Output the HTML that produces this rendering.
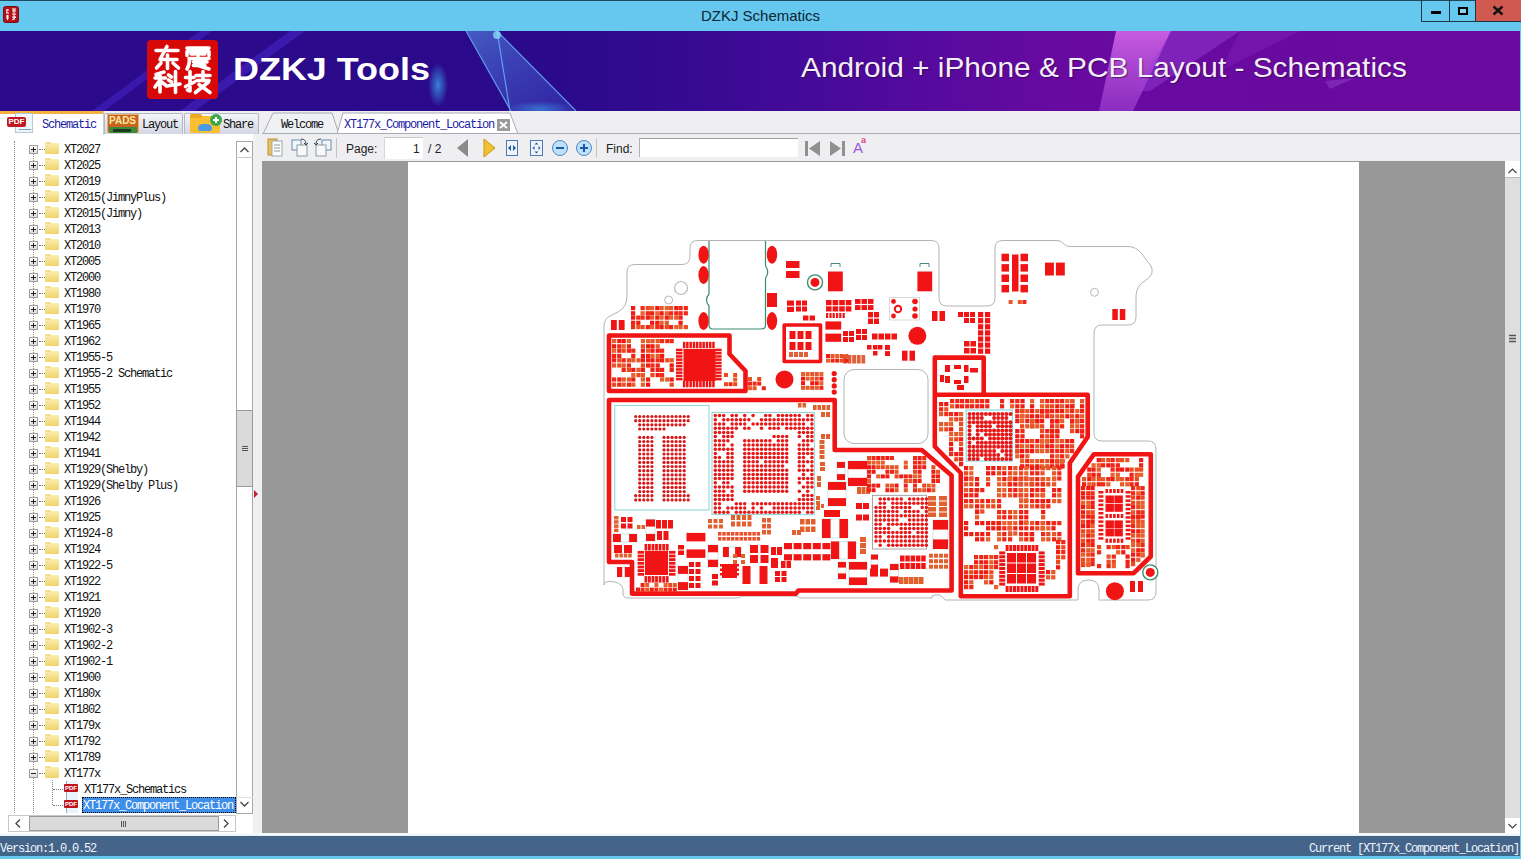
<!DOCTYPE html>
<html><head><meta charset="utf-8">
<style>
*{margin:0;padding:0;box-sizing:border-box}
html,body{width:1521px;height:859px;overflow:hidden;background:#66C8EE;font-family:"Liberation Sans",sans-serif}
.a{position:absolute}
i{display:block;position:absolute;font-style:normal}
#topline{left:0;top:0;width:1521px;height:1px;background:#1d4a5e}
#title{left:0;top:7px;width:1521px;text-align:center;font-size:15px;color:#0d2535;line-height:17px}
.wb{top:0;height:21px;border:1px solid #1a3646;border-top:none}
#banner{left:0;top:31px;width:1520px;height:80px;overflow:hidden;background:linear-gradient(90deg,#2c0a8c 0%,#2a0a8a 37%,#320a90 43%,#440a98 53%,#580a9e 62%,#680aa0 70%,#6a0a9e 100%)}
#tabbar{left:0;top:111px;width:1520px;height:23px;background:#efeff1}
#left{left:0;top:134px;width:262px;height:702px;background:#fff}
#tool{left:262px;top:134px;width:1258px;height:28px;background:#efeff1;border-bottom:1px solid #8c8c8c}
#gray{left:262px;top:161px;width:1243px;height:673px;background:#989898}
#page{left:408px;top:162px;width:951px;height:672px;background:#fff}
#vs{left:1505px;top:161px;width:15px;height:673px;background:#dedede}
#status{left:0;top:836px;width:1520px;height:20px;background:linear-gradient(#41607a 0,#44648a 8%,#44648a 85%,#3a6888 100%);color:#eef4fa}
.mono,.tx,.tx2,#status span,.tab span{font-family:"Liberation Mono",monospace;font-size:12px;letter-spacing:-1.2px;line-height:14px;white-space:nowrap}
.row{position:absolute;left:0;width:236px;height:16px}
.bx{left:29px;top:4px;width:9px;height:9px;border:1px solid #a0a0a0;background:linear-gradient(#fff,#dcdcdc)}
.bx:before{content:"";position:absolute;left:1px;top:3px;width:5px;height:1px;background:#222}
.bx:after{content:"";position:absolute;left:3px;top:1px;width:1px;height:5px;background:#222}
.bx.mn:after{display:none}
.hd{left:39px;top:8px;width:6px;height:1px;border-top:1px dotted #777}
.fd{left:45px;top:2px;width:14px;height:11px;background:linear-gradient(#fbefb0,#f0d268);border-radius:1px}
.fd:before{content:"";position:absolute;left:0;top:-1px;width:6px;height:2px;background:#f3df90;border-radius:1px 1px 0 0}
.tx{position:absolute;left:64px;top:2px;color:#111}
.tx2{position:absolute;left:84px;top:2px;color:#111}
.tx2.sel{left:82px;top:0;height:16px;padding:2px 0 0 1px;width:154px;background:#3d8ee8;color:#fff;outline:1px dotted #000;outline-offset:-1px;overflow:hidden}
.hd2{left:53px;top:8px;width:10px;height:1px;border-top:1px dotted #777}
.pdfi{left:66px;top:0;width:12px;height:16px;background:#eaf4fb;border-left:1px solid #9ab}
.pdfi:before{content:"PDF";position:absolute;left:-3px;top:3px;width:14px;height:8px;background:#c0141c;color:#fff;font:bold 6px/8px "Liberation Sans",sans-serif;text-align:center;border-radius:1px}
.tab{position:absolute;top:113px;height:21px}
.tbi{position:absolute}
.sep{position:absolute;top:138px;width:1px;height:20px;background:#c8c8c8;border-right:1px solid #fff}
.lbl{position:absolute;font-size:12px;color:#222;line-height:14px}
</style></head><body>
<div class="a" id="topline"></div>
<svg class="a" style="left:3px;top:6px" width="16" height="17" viewBox="0 0 16 17"><rect x="0.5" y="0.5" width="15" height="16" rx="2" fill="#b3121a" stroke="#7a0c10"/><g stroke="#fff" stroke-width="1" fill="none"><path d="M3 4h3M4 3v4M3 7h3M3 10h3M4.5 9v5M3 12h3M9 3h4M9 5h4M11 3v4M9 8h4M11 8v6M9 11h4M9 14l4-3"/></g></svg>
<div class="a" id="title">DZKJ Schematics</div>
<div class="a wb" style="left:1421px;width:29px;height:22px;border-right:none"><i style="left:9px;top:11px;width:10px;height:3px;background:#000"></i></div>
<div class="a wb" style="left:1449px;width:27px;height:22px;border-left:1px solid #1a3646"><i style="left:8px;top:7px;width:10px;height:8px;border:2px solid #000;background:#8fd3ec"></i></div>
<div class="a" style="left:1476px;top:0;width:45px;height:22px;background:#d05a50;border-bottom:1px solid #1a3646"></div>
<svg class="a" style="left:1492px;top:5px" width="12" height="11" viewBox="0 0 12 11"><path d="M1.5 1.5L10.5 9.5M10.5 1.5L1.5 9.5" stroke="#111" stroke-width="2.4"/></svg>
<div class="a" id="banner">
<svg width="1520" height="80" style="position:absolute;left:0;top:0">
<defs>
<radialGradient id="blob"><stop offset="0" stop-color="#3a8ee0" stop-opacity=".9"/><stop offset="1" stop-color="#3a8ee0" stop-opacity="0"/></radialGradient>
<linearGradient id="tri" x1="0" y1="0" x2="1" y2="1"><stop offset="0" stop-color="#5a9cf0" stop-opacity=".55"/><stop offset="1" stop-color="#3c50d0" stop-opacity=".35"/></linearGradient>
<linearGradient id="pk" x1="0" y1="0" x2="0" y2="1"><stop offset="0" stop-color="#e070f0" stop-opacity=".8"/><stop offset="1" stop-color="#b050e0" stop-opacity=".5"/></linearGradient>
</defs>
<polygon points="92,80 200,0 212,0 104,80" fill="#4a2ad0" opacity=".45"/>
<polygon points="180,80 290,0 305,0 195,80" fill="#4a2ad0" opacity=".5"/>
<ellipse cx="438" cy="54" rx="10" ry="22" fill="url(#blob)"/>
<polygon points="466,0 497,0 576,80 511,80" fill="url(#tri)"/>
<path d="M466,0 L511,80 M497,0 L576,80 M497,0 L510,80" stroke="#6ab8f8" stroke-width="1.2" opacity=".8" fill="none"/>
<circle cx="497" cy="4" r="4" fill="#8ee8ff" opacity=".7"/>
<ellipse cx="540" cy="78" rx="34" ry="8" fill="url(#blob)" opacity=".8"/>
<polygon points="1116,0 1171,0 1133,80 1099,80" fill="url(#pk)"/>
<polygon points="1171,0 1240,0 1150,60 1135,60" fill="#9a40d8" opacity=".45"/>
<polygon points="1240,0 1300,0 1220,40" fill="#8a30c8" opacity=".3"/>
<polygon points="1325,50 1355,47 1330,58" fill="#9a50d8" opacity=".4"/>
</svg>
<div class="a" style="left:147px;top:9px;width:71px;height:59px;background:#d80808;border-radius:4px"></div>
<svg class="a" style="left:147px;top:9px" width="71" height="59" viewBox="0 0 71 59"><g stroke="#fff" stroke-width="3.6" fill="none" stroke-linecap="round" stroke-linejoin="round">
<path d="M9 10.5H31M20 6.5L13 19.5H30M20.5 15V28.5M14 23L9.5 28M26 23L31.5 28"/>
<path d="M40 8H62M40 15.5V11.5H62V15.5M51 8V16M44 14H48M54 14H58M42 18.5H62M42.5 18.5Q42.5 25 40 29M46.5 22H60M46.5 25.5H58M51 25.5L62 29"/>
<path d="M17 32L9 34.5M8 38H18.5M13 33.5V52M13 40L8 47M14 41.5L18.5 45M21.5 35L24.5 37M21.5 40L24.5 42M28.5 31.5V52.5M19.5 46L33 44"/>
<path d="M38.5 37.5H47M43 31.5V51L40.5 50M38.5 46.5L47.5 42M49 35.5H63M56 31.5V40M50 40.5H62M52 44.5L63 52.5M61.5 42L48.5 52.5"/>
</g></svg>
<div class="a" style="left:233px;top:20px;font:bold 32px/36px 'Liberation Sans',sans-serif;color:#fff;transform:scaleX(1.123);transform-origin:0 0;white-space:nowrap">DZKJ Tools</div>
<div class="a" style="left:801px;top:21px;font:28px/32px 'Liberation Sans',sans-serif;color:#f4eefa;transform:scaleX(1.065);transform-origin:0 0;white-space:nowrap;text-shadow:1px 1px 1px rgba(40,0,60,.6)">Android + iPhone &amp; PCB Layout - Schematics</div>
</div>
<div class="a" id="tabbar"></div>
<!-- left tabs -->
<div class="tab" style="left:0;top:111px;width:104px;height:24px;background:#fff;border-top:3px solid #f5b040;border-right:1px solid #c8ccd8;z-index:2"></div>
<div class="a" style="left:11px;top:113px;width:27px;height:20px;z-index:3"><i style="left:4px;top:0;width:18px;height:20px;background:#eef6fb;border:1px solid #b8c8d4"></i><i style="left:-4px;top:4px;width:19px;height:10px;background:#c41820;border-radius:2px;color:#fff;font:bold 8px/10px 'Liberation Sans',sans-serif;text-align:center">PDF</i><i style="left:8px;top:16px;width:12px;height:1px;background:#7aa0c0"></i></div>
<span class="a mono" style="left:42px;top:118px;color:#1c1ca8;z-index:3">Schematic</span>
<div class="tab" style="left:104px;width:79px;background:linear-gradient(#f4f5f9,#d3d6e2);border:1px solid #b4b8c8;border-bottom:none;border-radius:2px 2px 0 0"></div>
<div class="a" style="left:107px;top:114px;width:32px;height:19px;background:#c8641e;border:1px solid #e9b070"><i style="left:1px;top:0;color:#fde8a0;font:bold 10px/11px 'Liberation Sans',sans-serif">PADS</i><i style="left:1px;top:12px;width:28px;height:6px;background:#3c8c3c"></i><i style="left:5px;top:14px;width:18px;height:3px;background:#1e3a1e"></i></div>
<span class="a mono" style="left:142px;top:118px;color:#111">Layout</span>
<div class="tab" style="left:184px;width:75px;background:linear-gradient(#f4f5f9,#d3d6e2);border:1px solid #b4b8c8;border-bottom:none;border-radius:2px 2px 0 0"></div>
<div class="a" style="left:190px;top:116px;width:30px;height:17px;background:#f8c030;border-radius:2px 2px 0 0"><i style="left:0;top:-2px;width:12px;height:4px;background:#f0a820;border-radius:2px 2px 0 0"></i><i style="left:8px;top:8px;width:14px;height:7px;background:#4a9ae8;border-radius:6px 6px 3px 3px"></i></div>
<div class="a" style="left:210px;top:114px;width:12px;height:12px;background:#3aa84a;border-radius:50%"><i style="left:3px;top:5px;width:6px;height:2px;background:#fff"></i><i style="left:5px;top:3px;width:2px;height:6px;background:#fff"></i></div>
<span class="a mono" style="left:223px;top:118px;color:#111">Share</span>
<!-- doc tabs -->
<svg class="a" style="left:262px;top:111px" width="260" height="24" viewBox="0 0 260 24">
<path d="M1,23 L11,2 L70,2 L77,23" fill="#f0f1f5" stroke="#a8acb8"/>
<path d="M75,23 L81,2 L248,2 L256,23" fill="#fff" stroke="#a8acb8"/>
<rect x="235" y="8" width="13" height="12" fill="#9a9a9a"/>
<path d="M238,11 L245,17 M245,11 L238,17" stroke="#fff" stroke-width="1.8"/>
</svg>
<span class="a mono" style="left:281px;top:118px;color:#111">Welcome</span>
<span class="a mono" style="left:344px;top:118px;color:#1c1ca8">XT177x_Component_Location</span>
<div class="a" style="left:262px;top:133px;width:1258px;height:1px;background:#a8acb8"></div>
<!-- toolbar -->
<div class="a" id="tool"></div>
<svg class="a" style="left:262px;top:134px" width="620" height="27" viewBox="262 134 620 27">
<!-- icon1: folder-doc -->
<rect x="268" y="139" width="9" height="16" fill="#e8c060" stroke="#c09030"/>
<rect x="272" y="141" width="10" height="15" fill="#fbfbfb" stroke="#9aa"/>
<path d="M274 145h6M274 148h6M274 151h6" stroke="#999"/>
<!-- icon2 -->
<rect x="292" y="140" width="9" height="10" fill="#eef6fb" stroke="#6a8aa8"/>
<rect x="297" y="145" width="10" height="11" fill="#f8f8f8" stroke="#8a9aa8"/>
<path d="M301 139 q5 0 5 5" stroke="#345" fill="none"/><path d="M304 143l2 2 2-2" stroke="#345" fill="none"/>
<!-- icon3 -->
<rect x="322" y="140" width="9" height="10" fill="#eef6fb" stroke="#6a8aa8"/>
<rect x="316" y="145" width="10" height="11" fill="#f8f8f8" stroke="#8a9aa8"/>
<path d="M321 139 q-5 0 -5 5" stroke="#345" fill="none"/><path d="M314 143l2 2 2-2" stroke="#345" fill="none"/>
<path d="M336.5 138v20" stroke="#c4c4c4"/>
<path d="M596.5 138v20" stroke="#c4c4c4"/>
<!-- prev/next -->
<path d="M468 139 L457 148 L468 157Z" fill="#8a8a8a"/>
<path d="M484 139 L495 148 L484 157Z" fill="#f2c030" stroke="#c89a10"/>
<!-- fit width -->
<rect x="506.5" y="140.5" width="11" height="15" fill="#eef4fa" stroke="#4a7ab8"/>
<path d="M508 148l3-3v6z M516 148l-3-3v6z" fill="#2a5aa0"/>
<!-- fit page -->
<rect x="530.5" y="140.5" width="12" height="15" fill="#eef4fa" stroke="#4a7ab8"/>
<path d="M536.5 142.5l2 2h-4z M536.5 153.5l2-2h-4z M532.5 148l2-2v4z M540.5 148l-2-2v4z" fill="#2a5aa0"/>
<!-- zoom out -->
<circle cx="560" cy="148" r="7.5" fill="#bfe0f8" stroke="#4a88c8"/>
<path d="M556 148h8" stroke="#1a5aa8" stroke-width="2"/>
<circle cx="584" cy="148" r="7.5" fill="#bfe0f8" stroke="#4a88c8"/>
<path d="M580 148h8M584 144v8" stroke="#1a5aa8" stroke-width="2"/>
<!-- find nav -->
<path d="M805 141h3v15h-3z M820 141 L809 148.5 L820 156Z" fill="#909090"/>
<path d="M842 141h3v15h-3z M830 141 L841 148.5 L830 156Z" fill="#909090"/>
</svg>
<span class="lbl" style="left:346px;top:142px">Page:</span>
<div class="a" style="left:384px;top:137px;width:39px;height:22px;background:#fff;border-top:1px solid #c8c8c8;border-left:1px solid #d8d8d8"></div>
<span class="lbl" style="left:413px;top:142px">1</span>
<span class="lbl" style="left:428px;top:142px">/ 2</span>
<span class="lbl" style="left:606px;top:142px">Find:</span>
<div class="a" style="left:639px;top:138px;width:159px;height:19px;background:#fff;border-top:1px solid #a0a0a0;border-left:1px solid #b0b0b0"></div>
<span class="a" style="left:853px;top:139px;font:15px/17px 'Liberation Sans',sans-serif;color:#9a5ae0">A</span>
<span class="a" style="left:861px;top:135px;font:bold 9px/10px 'Liberation Sans',sans-serif;color:#e0408a">a</span>
<div class="a" id="left"></div>
<div class="a" style="left:14px;top:141px;width:1px;height:672px;border-left:1px dotted #8a8a8a"></div>
<div class="a" style="left:33px;top:150px;width:1px;height:663px;border-left:1px dotted #8a8a8a"></div>
<div class="a" style="left:52px;top:780px;width:1px;height:25px;border-left:1px dotted #8a8a8a"></div>
<div class="row" style="top:141px"><i class="bx"></i><i class="hd"></i><i class="fd"></i><span class="tx">XT2027</span></div>
<div class="row" style="top:157px"><i class="bx"></i><i class="hd"></i><i class="fd"></i><span class="tx">XT2025</span></div>
<div class="row" style="top:173px"><i class="bx"></i><i class="hd"></i><i class="fd"></i><span class="tx">XT2019</span></div>
<div class="row" style="top:189px"><i class="bx"></i><i class="hd"></i><i class="fd"></i><span class="tx">XT2015(JimnyPlus)</span></div>
<div class="row" style="top:205px"><i class="bx"></i><i class="hd"></i><i class="fd"></i><span class="tx">XT2015(Jimny)</span></div>
<div class="row" style="top:221px"><i class="bx"></i><i class="hd"></i><i class="fd"></i><span class="tx">XT2013</span></div>
<div class="row" style="top:237px"><i class="bx"></i><i class="hd"></i><i class="fd"></i><span class="tx">XT2010</span></div>
<div class="row" style="top:253px"><i class="bx"></i><i class="hd"></i><i class="fd"></i><span class="tx">XT2005</span></div>
<div class="row" style="top:269px"><i class="bx"></i><i class="hd"></i><i class="fd"></i><span class="tx">XT2000</span></div>
<div class="row" style="top:285px"><i class="bx"></i><i class="hd"></i><i class="fd"></i><span class="tx">XT1980</span></div>
<div class="row" style="top:301px"><i class="bx"></i><i class="hd"></i><i class="fd"></i><span class="tx">XT1970</span></div>
<div class="row" style="top:317px"><i class="bx"></i><i class="hd"></i><i class="fd"></i><span class="tx">XT1965</span></div>
<div class="row" style="top:333px"><i class="bx"></i><i class="hd"></i><i class="fd"></i><span class="tx">XT1962</span></div>
<div class="row" style="top:349px"><i class="bx"></i><i class="hd"></i><i class="fd"></i><span class="tx">XT1955-5</span></div>
<div class="row" style="top:365px"><i class="bx"></i><i class="hd"></i><i class="fd"></i><span class="tx">XT1955-2 Schematic</span></div>
<div class="row" style="top:381px"><i class="bx"></i><i class="hd"></i><i class="fd"></i><span class="tx">XT1955</span></div>
<div class="row" style="top:397px"><i class="bx"></i><i class="hd"></i><i class="fd"></i><span class="tx">XT1952</span></div>
<div class="row" style="top:413px"><i class="bx"></i><i class="hd"></i><i class="fd"></i><span class="tx">XT1944</span></div>
<div class="row" style="top:429px"><i class="bx"></i><i class="hd"></i><i class="fd"></i><span class="tx">XT1942</span></div>
<div class="row" style="top:445px"><i class="bx"></i><i class="hd"></i><i class="fd"></i><span class="tx">XT1941</span></div>
<div class="row" style="top:461px"><i class="bx"></i><i class="hd"></i><i class="fd"></i><span class="tx">XT1929(Shelby)</span></div>
<div class="row" style="top:477px"><i class="bx"></i><i class="hd"></i><i class="fd"></i><span class="tx">XT1929(Shelby Plus)</span></div>
<div class="row" style="top:493px"><i class="bx"></i><i class="hd"></i><i class="fd"></i><span class="tx">XT1926</span></div>
<div class="row" style="top:509px"><i class="bx"></i><i class="hd"></i><i class="fd"></i><span class="tx">XT1925</span></div>
<div class="row" style="top:525px"><i class="bx"></i><i class="hd"></i><i class="fd"></i><span class="tx">XT1924-8</span></div>
<div class="row" style="top:541px"><i class="bx"></i><i class="hd"></i><i class="fd"></i><span class="tx">XT1924</span></div>
<div class="row" style="top:557px"><i class="bx"></i><i class="hd"></i><i class="fd"></i><span class="tx">XT1922-5</span></div>
<div class="row" style="top:573px"><i class="bx"></i><i class="hd"></i><i class="fd"></i><span class="tx">XT1922</span></div>
<div class="row" style="top:589px"><i class="bx"></i><i class="hd"></i><i class="fd"></i><span class="tx">XT1921</span></div>
<div class="row" style="top:605px"><i class="bx"></i><i class="hd"></i><i class="fd"></i><span class="tx">XT1920</span></div>
<div class="row" style="top:621px"><i class="bx"></i><i class="hd"></i><i class="fd"></i><span class="tx">XT1902-3</span></div>
<div class="row" style="top:637px"><i class="bx"></i><i class="hd"></i><i class="fd"></i><span class="tx">XT1902-2</span></div>
<div class="row" style="top:653px"><i class="bx"></i><i class="hd"></i><i class="fd"></i><span class="tx">XT1902-1</span></div>
<div class="row" style="top:669px"><i class="bx"></i><i class="hd"></i><i class="fd"></i><span class="tx">XT1900</span></div>
<div class="row" style="top:685px"><i class="bx"></i><i class="hd"></i><i class="fd"></i><span class="tx">XT180x</span></div>
<div class="row" style="top:701px"><i class="bx"></i><i class="hd"></i><i class="fd"></i><span class="tx">XT1802</span></div>
<div class="row" style="top:717px"><i class="bx"></i><i class="hd"></i><i class="fd"></i><span class="tx">XT179x</span></div>
<div class="row" style="top:733px"><i class="bx"></i><i class="hd"></i><i class="fd"></i><span class="tx">XT1792</span></div>
<div class="row" style="top:749px"><i class="bx"></i><i class="hd"></i><i class="fd"></i><span class="tx">XT1789</span></div>
<div class="row" style="top:765px"><i class="bx mn"></i><i class="hd"></i><i class="fd"></i><span class="tx">XT177x</span></div>
<div class="row" style="top:781px"><i class="pdfi"></i><i class="hd2"></i><span class="tx2">XT177x_Schematics</span></div>
<div class="row" style="top:797px"><i class="pdfi"></i><i class="hd2"></i><span class="tx2 sel">XT177x_Component_Location</span></div>
<div class="a" style="left:236px;top:141px;width:17px;height:673px;background:#fff;border:1px solid #a8a8a8"></div>
<div class="a" style="left:236px;top:157px;width:17px;height:1px;background:#c8c8c8"></div>
<div class="a" style="left:236px;top:797px;width:17px;height:1px;background:#e0e0e0"></div>
<svg class="a" style="left:236px;top:141px" width="17" height="673"><path d="M4.5 11l4-4 4 4" stroke="#444" stroke-width="1.3" fill="none"/><path d="M4.5 661l4 4 4-4" stroke="#444" stroke-width="1.3" fill="none"/></svg>
<div class="a" style="left:236px;top:410px;width:17px;height:77px;background:#dadada;border:1px solid #9a9a9a"><i style="left:5px;top:35px;width:6px;height:1px;background:#555;box-shadow:0 2px 0 #555,0 4px 0 #555"></i></div>
<div class="a" style="left:8px;top:815px;width:228px;height:17px;background:#fff;border:1px solid #c8c8c8"></div>
<div class="a" style="left:29px;top:816px;width:190px;height:15px;background:#dadada;border:1px solid #9a9a9a"><i style="left:91px;top:4px;width:1px;height:6px;background:#555;box-shadow:2px 0 0 #555,4px 0 0 #555"></i></div>
<svg class="a" style="left:8px;top:815px" width="228" height="17"><path d="M12 4.5l-4 4 4 4" stroke="#444" stroke-width="1.3" fill="none"/><path d="M216 4.5l4 4-4 4" stroke="#444" stroke-width="1.3" fill="none"/></svg>
<div class="a" style="left:253px;top:134px;width:9px;height:702px;background:#eef0f2"></div>
<svg class="a" style="left:253px;top:488px" width="6" height="12"><path d="M1 2l4 4-4 4z" fill="#c0202a"/></svg>
<div class="a" id="gray"></div>
<div class="a" id="page"></div>
<div class="a" id="vs"></div>
<div class="a" style="left:1505px;top:161px;width:15px;height:17px;background:#fff;border-bottom:1px solid #bbb"></div>
<div class="a" style="left:1505px;top:817px;width:15px;height:17px;background:#fff;border-top:1px solid #ddd"></div>
<svg class="a" style="left:1505px;top:161px" width="15" height="673"><path d="M3.5 12l4-4 4 4" stroke="#444" stroke-width="1.2" fill="none"/><path d="M3.5 663l4 4 4-4" stroke="#444" stroke-width="1.2" fill="none"/><path d="M4 174.5h7M4 177.5h7M4 180.5h7" stroke="#555" stroke-width="1.4"/></svg>
<svg class="a" style="left:0;top:0" width="1521" height="859" viewBox="0 0 1521 859"><path d="M604,585 L604,326 Q604,318 612,315 L618,312 Q627,307 627,296 L627,272 Q627,264.5 635,264.5 L682,264.5 Q690,264.5 690,256 L690,248 Q690,240.5 698,240.5 L931,240.5 Q939,240.5 939,248 L939,298 Q939,306 947,306 L987,306 Q995,306 995,298 L995,248 Q995,240.5 1003,240.5 L1057,240.5 Q1061,240.5 1064,244 Q1066,246.5 1070,246.5 L1128,246.5 Q1136,246.5 1142,254 L1151,266 Q1155,274 1146,280 Q1136,286 1136,296 L1136,317 Q1136,325 1128,325 L1102,325 Q1094,325 1094,333 L1094,433 Q1094,441 1102,441 L1148,441 Q1156,441 1156,449 L1156,592 Q1156,600 1148,600 L1099,600 L1099,590 Q1099,580 1088.5,580 Q1078,580 1078,590 L1078,600 L945,600 Q940,592 932,596 L932,598 L800,598 Q798,596 794,596 L742,596 Q740,598 736,598 L628,598 Q623,598 623,593 L623,590 Q623,584 615,582 Q604,580 604,585 Z" fill="none" stroke="#b4b4b4" stroke-width="1"/>
<rect x="844" y="369.5" width="84" height="74" rx="10" fill="none" stroke="#b4b4b4" stroke-width="1"/>
<circle cx="681" cy="288" r="6.5" fill="none" stroke="#b8b8b8" stroke-width="1.2"/>
<circle cx="668.6" cy="300" r="4" fill="none" stroke="#b8b8b8" stroke-width="1"/>
<circle cx="1094.5" cy="292.3" r="4" fill="none" stroke="#b8b8b8" stroke-width="1"/>
<path d="M709,241 L709,294 Q704,300 709,306 L709,325 Q709,329 713,329 L761.5,329 Q765.5,329 765.5,325 L765.5,278 Q770,272 765.5,266 L765.5,241" fill="none" stroke="#3c8c6c" stroke-width="1.2"/>
<ellipse cx="703.6" cy="254.7" rx="5.2" ry="9" fill="#f01414"/>
<ellipse cx="703.6" cy="275" rx="5.2" ry="9" fill="#f01414"/>
<ellipse cx="703.6" cy="321" rx="5.2" ry="9" fill="#f01414"/>
<ellipse cx="772" cy="254.7" rx="5.2" ry="9" fill="#f01414"/>
<ellipse cx="772" cy="321" rx="5.2" ry="9" fill="#f01414"/>
<rect x="767.0" y="293.0" width="10.0" height="14.0" fill="#f01414" />
<path d="M609,335.5 L729.5,335.5 L729.5,354 L745.5,371 L745.5,391 L609,391 Z" fill="none" stroke="#f01414" stroke-width="4.6" stroke-linejoin="round"/>
<path d="M609,400 L834.7,400 L834.7,450 L921.8,450 L951.6,475.4 L951.6,590.5 L798.5,590.5 L796,593.6 L632,593.6 L632,562 L609,562 Z" fill="none" stroke="#f01414" stroke-width="4.6" stroke-linejoin="round"/>
<path d="M784.2,325 L820.5,325 L820.5,361.5 L784.2,361.5 Z" fill="none" stroke="#f01414" stroke-width="3.6" stroke-linejoin="round"/>
<path d="M934.8,357.6 L983.7,357.6 L983.7,394.8" fill="none" stroke="#f01414" stroke-width="4.6" stroke-linejoin="round"/>
<path d="M934.8,357.6 L934.8,394.8 L1087.7,394.8 L1087.7,437 L1069.8,463 L1069.8,596.3 L960.8,596.3 L960.8,473 L934.8,446.5 Z" fill="none" stroke="#f01414" stroke-width="4.6" stroke-linejoin="round"/>
<path d="M1094,454.2 L1150.8,454.2 L1150.8,556.5 L1133.7,573.2 L1078,573.2 L1078,476.6 Z" fill="none" stroke="#f01414" stroke-width="4.6" stroke-linejoin="round"/>
<circle cx="784.5" cy="379.4" r="9.0" fill="#f01414" />
<circle cx="917.4" cy="335.8" r="9.0" fill="#f01414" />
<circle cx="1114.9" cy="591.2" r="9.0" fill="#f01414" />
<circle cx="815" cy="282.4" r="7.5" fill="#fff" stroke="#3c8c6c" stroke-width="1.4"/>
<circle cx="815.0" cy="282.4" r="4.5" fill="#f01414" />
<circle cx="1150.3" cy="572.4" r="7.5" fill="#fff" stroke="#3c8c6c" stroke-width="1.4"/>
<circle cx="1150.3" cy="572.4" r="4.5" fill="#f01414" />
<rect x="614.8" y="405.4" width="94.2" height="104.6" fill="none" stroke="#8cd4d0" stroke-width="1"/>
<g fill="#d81818"><circle cx="635.7" cy="416.5" r="1.6"/><circle cx="639.7" cy="416.5" r="1.6"/><circle cx="643.8" cy="416.5" r="1.6"/><circle cx="647.8" cy="416.5" r="1.6"/><circle cx="651.9" cy="416.5" r="1.6"/><circle cx="655.9" cy="416.5" r="1.6"/><circle cx="659.9" cy="416.5" r="1.6"/><circle cx="664.0" cy="416.5" r="1.6"/><circle cx="668.0" cy="416.5" r="1.6"/><circle cx="672.1" cy="416.5" r="1.6"/><circle cx="676.1" cy="416.5" r="1.6"/><circle cx="680.1" cy="416.5" r="1.6"/><circle cx="684.2" cy="416.5" r="1.6"/><circle cx="688.2" cy="416.5" r="1.6"/><circle cx="635.7" cy="420.7" r="1.6"/><circle cx="639.7" cy="420.7" r="1.6"/><circle cx="643.8" cy="420.7" r="1.6"/><circle cx="647.8" cy="420.7" r="1.6"/><circle cx="651.9" cy="420.7" r="1.6"/><circle cx="655.9" cy="420.7" r="1.6"/><circle cx="659.9" cy="420.7" r="1.6"/><circle cx="664.0" cy="420.7" r="1.6"/><circle cx="668.0" cy="420.7" r="1.6"/><circle cx="672.1" cy="420.7" r="1.6"/><circle cx="676.1" cy="420.7" r="1.6"/><circle cx="680.1" cy="420.7" r="1.6"/><circle cx="684.2" cy="420.7" r="1.6"/><circle cx="688.2" cy="420.7" r="1.6"/><circle cx="639.7" cy="424.8" r="1.6"/><circle cx="643.8" cy="424.8" r="1.6"/><circle cx="647.8" cy="424.8" r="1.6"/><circle cx="651.9" cy="424.8" r="1.6"/><circle cx="655.9" cy="424.8" r="1.6"/><circle cx="659.9" cy="424.8" r="1.6"/><circle cx="664.0" cy="424.8" r="1.6"/><circle cx="668.0" cy="424.8" r="1.6"/><circle cx="672.1" cy="424.8" r="1.6"/><circle cx="676.1" cy="424.8" r="1.6"/><circle cx="680.1" cy="424.8" r="1.6"/><circle cx="684.2" cy="424.8" r="1.6"/><circle cx="639.7" cy="429.0" r="1.6"/><circle cx="643.8" cy="429.0" r="1.6"/><circle cx="647.8" cy="429.0" r="1.6"/><circle cx="651.9" cy="429.0" r="1.6"/><circle cx="655.9" cy="429.0" r="1.6"/><circle cx="659.9" cy="429.0" r="1.6"/><circle cx="664.0" cy="429.0" r="1.6"/><circle cx="639.7" cy="437.4" r="1.6"/><circle cx="643.8" cy="437.4" r="1.6"/><circle cx="647.8" cy="437.4" r="1.6"/><circle cx="651.9" cy="437.4" r="1.6"/><circle cx="664.0" cy="437.4" r="1.6"/><circle cx="668.0" cy="437.4" r="1.6"/><circle cx="672.1" cy="437.4" r="1.6"/><circle cx="676.1" cy="437.4" r="1.6"/><circle cx="680.1" cy="437.4" r="1.6"/><circle cx="684.2" cy="437.4" r="1.6"/><circle cx="639.7" cy="441.5" r="1.6"/><circle cx="643.8" cy="441.5" r="1.6"/><circle cx="647.8" cy="441.5" r="1.6"/><circle cx="651.9" cy="441.5" r="1.6"/><circle cx="664.0" cy="441.5" r="1.6"/><circle cx="668.0" cy="441.5" r="1.6"/><circle cx="672.1" cy="441.5" r="1.6"/><circle cx="676.1" cy="441.5" r="1.6"/><circle cx="680.1" cy="441.5" r="1.6"/><circle cx="684.2" cy="441.5" r="1.6"/><circle cx="639.7" cy="445.7" r="1.6"/><circle cx="643.8" cy="445.7" r="1.6"/><circle cx="647.8" cy="445.7" r="1.6"/><circle cx="651.9" cy="445.7" r="1.6"/><circle cx="664.0" cy="445.7" r="1.6"/><circle cx="668.0" cy="445.7" r="1.6"/><circle cx="672.1" cy="445.7" r="1.6"/><circle cx="676.1" cy="445.7" r="1.6"/><circle cx="680.1" cy="445.7" r="1.6"/><circle cx="684.2" cy="445.7" r="1.6"/><circle cx="639.7" cy="449.9" r="1.6"/><circle cx="643.8" cy="449.9" r="1.6"/><circle cx="647.8" cy="449.9" r="1.6"/><circle cx="651.9" cy="449.9" r="1.6"/><circle cx="664.0" cy="449.9" r="1.6"/><circle cx="668.0" cy="449.9" r="1.6"/><circle cx="672.1" cy="449.9" r="1.6"/><circle cx="676.1" cy="449.9" r="1.6"/><circle cx="680.1" cy="449.9" r="1.6"/><circle cx="684.2" cy="449.9" r="1.6"/><circle cx="639.7" cy="454.0" r="1.6"/><circle cx="643.8" cy="454.0" r="1.6"/><circle cx="647.8" cy="454.0" r="1.6"/><circle cx="651.9" cy="454.0" r="1.6"/><circle cx="664.0" cy="454.0" r="1.6"/><circle cx="668.0" cy="454.0" r="1.6"/><circle cx="672.1" cy="454.0" r="1.6"/><circle cx="676.1" cy="454.0" r="1.6"/><circle cx="680.1" cy="454.0" r="1.6"/><circle cx="684.2" cy="454.0" r="1.6"/><circle cx="639.7" cy="458.2" r="1.6"/><circle cx="643.8" cy="458.2" r="1.6"/><circle cx="647.8" cy="458.2" r="1.6"/><circle cx="651.9" cy="458.2" r="1.6"/><circle cx="664.0" cy="458.2" r="1.6"/><circle cx="668.0" cy="458.2" r="1.6"/><circle cx="672.1" cy="458.2" r="1.6"/><circle cx="676.1" cy="458.2" r="1.6"/><circle cx="680.1" cy="458.2" r="1.6"/><circle cx="684.2" cy="458.2" r="1.6"/><circle cx="639.7" cy="462.4" r="1.6"/><circle cx="643.8" cy="462.4" r="1.6"/><circle cx="647.8" cy="462.4" r="1.6"/><circle cx="651.9" cy="462.4" r="1.6"/><circle cx="664.0" cy="462.4" r="1.6"/><circle cx="668.0" cy="462.4" r="1.6"/><circle cx="672.1" cy="462.4" r="1.6"/><circle cx="676.1" cy="462.4" r="1.6"/><circle cx="680.1" cy="462.4" r="1.6"/><circle cx="684.2" cy="462.4" r="1.6"/><circle cx="639.7" cy="466.5" r="1.6"/><circle cx="643.8" cy="466.5" r="1.6"/><circle cx="647.8" cy="466.5" r="1.6"/><circle cx="651.9" cy="466.5" r="1.6"/><circle cx="664.0" cy="466.5" r="1.6"/><circle cx="668.0" cy="466.5" r="1.6"/><circle cx="672.1" cy="466.5" r="1.6"/><circle cx="676.1" cy="466.5" r="1.6"/><circle cx="680.1" cy="466.5" r="1.6"/><circle cx="684.2" cy="466.5" r="1.6"/><circle cx="639.7" cy="470.7" r="1.6"/><circle cx="643.8" cy="470.7" r="1.6"/><circle cx="647.8" cy="470.7" r="1.6"/><circle cx="651.9" cy="470.7" r="1.6"/><circle cx="664.0" cy="470.7" r="1.6"/><circle cx="668.0" cy="470.7" r="1.6"/><circle cx="672.1" cy="470.7" r="1.6"/><circle cx="676.1" cy="470.7" r="1.6"/><circle cx="680.1" cy="470.7" r="1.6"/><circle cx="684.2" cy="470.7" r="1.6"/><circle cx="639.7" cy="474.9" r="1.6"/><circle cx="643.8" cy="474.9" r="1.6"/><circle cx="647.8" cy="474.9" r="1.6"/><circle cx="651.9" cy="474.9" r="1.6"/><circle cx="664.0" cy="474.9" r="1.6"/><circle cx="668.0" cy="474.9" r="1.6"/><circle cx="672.1" cy="474.9" r="1.6"/><circle cx="676.1" cy="474.9" r="1.6"/><circle cx="680.1" cy="474.9" r="1.6"/><circle cx="684.2" cy="474.9" r="1.6"/><circle cx="639.7" cy="479.1" r="1.6"/><circle cx="643.8" cy="479.1" r="1.6"/><circle cx="647.8" cy="479.1" r="1.6"/><circle cx="651.9" cy="479.1" r="1.6"/><circle cx="664.0" cy="479.1" r="1.6"/><circle cx="668.0" cy="479.1" r="1.6"/><circle cx="672.1" cy="479.1" r="1.6"/><circle cx="676.1" cy="479.1" r="1.6"/><circle cx="680.1" cy="479.1" r="1.6"/><circle cx="684.2" cy="479.1" r="1.6"/><circle cx="639.7" cy="483.2" r="1.6"/><circle cx="643.8" cy="483.2" r="1.6"/><circle cx="647.8" cy="483.2" r="1.6"/><circle cx="651.9" cy="483.2" r="1.6"/><circle cx="664.0" cy="483.2" r="1.6"/><circle cx="668.0" cy="483.2" r="1.6"/><circle cx="672.1" cy="483.2" r="1.6"/><circle cx="676.1" cy="483.2" r="1.6"/><circle cx="680.1" cy="483.2" r="1.6"/><circle cx="684.2" cy="483.2" r="1.6"/><circle cx="639.7" cy="487.4" r="1.6"/><circle cx="643.8" cy="487.4" r="1.6"/><circle cx="647.8" cy="487.4" r="1.6"/><circle cx="651.9" cy="487.4" r="1.6"/><circle cx="664.0" cy="487.4" r="1.6"/><circle cx="668.0" cy="487.4" r="1.6"/><circle cx="672.1" cy="487.4" r="1.6"/><circle cx="676.1" cy="487.4" r="1.6"/><circle cx="680.1" cy="487.4" r="1.6"/><circle cx="684.2" cy="487.4" r="1.6"/><circle cx="639.7" cy="491.6" r="1.6"/><circle cx="643.8" cy="491.6" r="1.6"/><circle cx="647.8" cy="491.6" r="1.6"/><circle cx="651.9" cy="491.6" r="1.6"/><circle cx="664.0" cy="491.6" r="1.6"/><circle cx="668.0" cy="491.6" r="1.6"/><circle cx="672.1" cy="491.6" r="1.6"/><circle cx="676.1" cy="491.6" r="1.6"/><circle cx="680.1" cy="491.6" r="1.6"/><circle cx="684.2" cy="491.6" r="1.6"/><circle cx="635.7" cy="495.7" r="1.6"/><circle cx="639.7" cy="495.7" r="1.6"/><circle cx="643.8" cy="495.7" r="1.6"/><circle cx="647.8" cy="495.7" r="1.6"/><circle cx="651.9" cy="495.7" r="1.6"/><circle cx="664.0" cy="495.7" r="1.6"/><circle cx="668.0" cy="495.7" r="1.6"/><circle cx="672.1" cy="495.7" r="1.6"/><circle cx="676.1" cy="495.7" r="1.6"/><circle cx="680.1" cy="495.7" r="1.6"/><circle cx="684.2" cy="495.7" r="1.6"/><circle cx="688.2" cy="495.7" r="1.6"/><circle cx="635.7" cy="499.9" r="1.6"/><circle cx="639.7" cy="499.9" r="1.6"/><circle cx="643.8" cy="499.9" r="1.6"/><circle cx="647.8" cy="499.9" r="1.6"/><circle cx="651.9" cy="499.9" r="1.6"/><circle cx="664.0" cy="499.9" r="1.6"/><circle cx="668.0" cy="499.9" r="1.6"/><circle cx="672.1" cy="499.9" r="1.6"/><circle cx="676.1" cy="499.9" r="1.6"/><circle cx="680.1" cy="499.9" r="1.6"/><circle cx="684.2" cy="499.9" r="1.6"/><circle cx="688.2" cy="499.9" r="1.6"/></g>
<rect x="712" y="412.4" width="102.3" height="102.2" fill="none" stroke="#8cd4d0" stroke-width="1"/>
<g fill="#e81818"><circle cx="715.3" cy="415.6" r="1.75"/><circle cx="719.5" cy="415.6" r="1.75"/><circle cx="723.7" cy="415.6" r="1.75"/><circle cx="732.1" cy="415.6" r="1.75"/><circle cx="736.3" cy="415.6" r="1.75"/><circle cx="744.7" cy="415.6" r="1.75"/><circle cx="753.1" cy="415.6" r="1.75"/><circle cx="765.7" cy="415.6" r="1.75"/><circle cx="769.9" cy="415.6" r="1.75"/><circle cx="778.3" cy="415.6" r="1.75"/><circle cx="782.5" cy="415.6" r="1.75"/><circle cx="786.7" cy="415.6" r="1.75"/><circle cx="790.9" cy="415.6" r="1.75"/><circle cx="795.1" cy="415.6" r="1.75"/><circle cx="799.3" cy="415.6" r="1.75"/><circle cx="807.7" cy="415.6" r="1.75"/><circle cx="811.9" cy="415.6" r="1.75"/><circle cx="715.3" cy="419.8" r="1.75"/><circle cx="723.7" cy="419.8" r="1.75"/><circle cx="727.9" cy="419.8" r="1.75"/><circle cx="732.1" cy="419.8" r="1.75"/><circle cx="736.3" cy="419.8" r="1.75"/><circle cx="740.5" cy="419.8" r="1.75"/><circle cx="744.7" cy="419.8" r="1.75"/><circle cx="748.9" cy="419.8" r="1.75"/><circle cx="761.5" cy="419.8" r="1.75"/><circle cx="765.7" cy="419.8" r="1.75"/><circle cx="769.9" cy="419.8" r="1.75"/><circle cx="774.1" cy="419.8" r="1.75"/><circle cx="778.3" cy="419.8" r="1.75"/><circle cx="782.5" cy="419.8" r="1.75"/><circle cx="786.7" cy="419.8" r="1.75"/><circle cx="790.9" cy="419.8" r="1.75"/><circle cx="795.1" cy="419.8" r="1.75"/><circle cx="799.3" cy="419.8" r="1.75"/><circle cx="803.5" cy="419.8" r="1.75"/><circle cx="807.7" cy="419.8" r="1.75"/><circle cx="811.9" cy="419.8" r="1.75"/><circle cx="715.3" cy="424.0" r="1.75"/><circle cx="719.5" cy="424.0" r="1.75"/><circle cx="723.7" cy="424.0" r="1.75"/><circle cx="732.1" cy="424.0" r="1.75"/><circle cx="736.3" cy="424.0" r="1.75"/><circle cx="740.5" cy="424.0" r="1.75"/><circle cx="744.7" cy="424.0" r="1.75"/><circle cx="753.1" cy="424.0" r="1.75"/><circle cx="757.3" cy="424.0" r="1.75"/><circle cx="761.5" cy="424.0" r="1.75"/><circle cx="765.7" cy="424.0" r="1.75"/><circle cx="769.9" cy="424.0" r="1.75"/><circle cx="774.1" cy="424.0" r="1.75"/><circle cx="778.3" cy="424.0" r="1.75"/><circle cx="782.5" cy="424.0" r="1.75"/><circle cx="786.7" cy="424.0" r="1.75"/><circle cx="790.9" cy="424.0" r="1.75"/><circle cx="795.1" cy="424.0" r="1.75"/><circle cx="799.3" cy="424.0" r="1.75"/><circle cx="803.5" cy="424.0" r="1.75"/><circle cx="811.9" cy="424.0" r="1.75"/><circle cx="715.3" cy="428.2" r="1.75"/><circle cx="719.5" cy="428.2" r="1.75"/><circle cx="723.7" cy="428.2" r="1.75"/><circle cx="727.9" cy="428.2" r="1.75"/><circle cx="732.1" cy="428.2" r="1.75"/><circle cx="736.3" cy="428.2" r="1.75"/><circle cx="744.7" cy="428.2" r="1.75"/><circle cx="748.9" cy="428.2" r="1.75"/><circle cx="761.5" cy="428.2" r="1.75"/><circle cx="769.9" cy="428.2" r="1.75"/><circle cx="774.1" cy="428.2" r="1.75"/><circle cx="778.3" cy="428.2" r="1.75"/><circle cx="786.7" cy="428.2" r="1.75"/><circle cx="790.9" cy="428.2" r="1.75"/><circle cx="795.1" cy="428.2" r="1.75"/><circle cx="799.3" cy="428.2" r="1.75"/><circle cx="803.5" cy="428.2" r="1.75"/><circle cx="807.7" cy="428.2" r="1.75"/><circle cx="811.9" cy="428.2" r="1.75"/><circle cx="715.3" cy="432.4" r="1.75"/><circle cx="719.5" cy="432.4" r="1.75"/><circle cx="723.7" cy="432.4" r="1.75"/><circle cx="727.9" cy="432.4" r="1.75"/><circle cx="732.1" cy="432.4" r="1.75"/><circle cx="799.3" cy="432.4" r="1.75"/><circle cx="803.5" cy="432.4" r="1.75"/><circle cx="807.7" cy="432.4" r="1.75"/><circle cx="811.9" cy="432.4" r="1.75"/><circle cx="715.3" cy="436.6" r="1.75"/><circle cx="723.7" cy="436.6" r="1.75"/><circle cx="727.9" cy="436.6" r="1.75"/><circle cx="732.1" cy="436.6" r="1.75"/><circle cx="774.1" cy="436.6" r="1.75"/><circle cx="778.3" cy="436.6" r="1.75"/><circle cx="782.5" cy="436.6" r="1.75"/><circle cx="786.7" cy="436.6" r="1.75"/><circle cx="799.3" cy="436.6" r="1.75"/><circle cx="807.7" cy="436.6" r="1.75"/><circle cx="811.9" cy="436.6" r="1.75"/><circle cx="715.3" cy="440.8" r="1.75"/><circle cx="719.5" cy="440.8" r="1.75"/><circle cx="723.7" cy="440.8" r="1.75"/><circle cx="727.9" cy="440.8" r="1.75"/><circle cx="744.7" cy="440.8" r="1.75"/><circle cx="748.9" cy="440.8" r="1.75"/><circle cx="753.1" cy="440.8" r="1.75"/><circle cx="757.3" cy="440.8" r="1.75"/><circle cx="761.5" cy="440.8" r="1.75"/><circle cx="765.7" cy="440.8" r="1.75"/><circle cx="769.9" cy="440.8" r="1.75"/><circle cx="778.3" cy="440.8" r="1.75"/><circle cx="782.5" cy="440.8" r="1.75"/><circle cx="786.7" cy="440.8" r="1.75"/><circle cx="803.5" cy="440.8" r="1.75"/><circle cx="807.7" cy="440.8" r="1.75"/><circle cx="811.9" cy="440.8" r="1.75"/><circle cx="715.3" cy="445.0" r="1.75"/><circle cx="719.5" cy="445.0" r="1.75"/><circle cx="723.7" cy="445.0" r="1.75"/><circle cx="732.1" cy="445.0" r="1.75"/><circle cx="744.7" cy="445.0" r="1.75"/><circle cx="748.9" cy="445.0" r="1.75"/><circle cx="753.1" cy="445.0" r="1.75"/><circle cx="757.3" cy="445.0" r="1.75"/><circle cx="761.5" cy="445.0" r="1.75"/><circle cx="765.7" cy="445.0" r="1.75"/><circle cx="769.9" cy="445.0" r="1.75"/><circle cx="774.1" cy="445.0" r="1.75"/><circle cx="778.3" cy="445.0" r="1.75"/><circle cx="782.5" cy="445.0" r="1.75"/><circle cx="786.7" cy="445.0" r="1.75"/><circle cx="799.3" cy="445.0" r="1.75"/><circle cx="803.5" cy="445.0" r="1.75"/><circle cx="807.7" cy="445.0" r="1.75"/><circle cx="715.3" cy="449.2" r="1.75"/><circle cx="719.5" cy="449.2" r="1.75"/><circle cx="723.7" cy="449.2" r="1.75"/><circle cx="727.9" cy="449.2" r="1.75"/><circle cx="732.1" cy="449.2" r="1.75"/><circle cx="744.7" cy="449.2" r="1.75"/><circle cx="748.9" cy="449.2" r="1.75"/><circle cx="753.1" cy="449.2" r="1.75"/><circle cx="757.3" cy="449.2" r="1.75"/><circle cx="761.5" cy="449.2" r="1.75"/><circle cx="765.7" cy="449.2" r="1.75"/><circle cx="769.9" cy="449.2" r="1.75"/><circle cx="774.1" cy="449.2" r="1.75"/><circle cx="778.3" cy="449.2" r="1.75"/><circle cx="782.5" cy="449.2" r="1.75"/><circle cx="786.7" cy="449.2" r="1.75"/><circle cx="799.3" cy="449.2" r="1.75"/><circle cx="803.5" cy="449.2" r="1.75"/><circle cx="807.7" cy="449.2" r="1.75"/><circle cx="811.9" cy="449.2" r="1.75"/><circle cx="715.3" cy="453.4" r="1.75"/><circle cx="727.9" cy="453.4" r="1.75"/><circle cx="732.1" cy="453.4" r="1.75"/><circle cx="744.7" cy="453.4" r="1.75"/><circle cx="748.9" cy="453.4" r="1.75"/><circle cx="753.1" cy="453.4" r="1.75"/><circle cx="757.3" cy="453.4" r="1.75"/><circle cx="761.5" cy="453.4" r="1.75"/><circle cx="765.7" cy="453.4" r="1.75"/><circle cx="769.9" cy="453.4" r="1.75"/><circle cx="774.1" cy="453.4" r="1.75"/><circle cx="778.3" cy="453.4" r="1.75"/><circle cx="782.5" cy="453.4" r="1.75"/><circle cx="786.7" cy="453.4" r="1.75"/><circle cx="799.3" cy="453.4" r="1.75"/><circle cx="803.5" cy="453.4" r="1.75"/><circle cx="807.7" cy="453.4" r="1.75"/><circle cx="811.9" cy="453.4" r="1.75"/><circle cx="715.3" cy="457.6" r="1.75"/><circle cx="719.5" cy="457.6" r="1.75"/><circle cx="727.9" cy="457.6" r="1.75"/><circle cx="732.1" cy="457.6" r="1.75"/><circle cx="744.7" cy="457.6" r="1.75"/><circle cx="748.9" cy="457.6" r="1.75"/><circle cx="753.1" cy="457.6" r="1.75"/><circle cx="757.3" cy="457.6" r="1.75"/><circle cx="761.5" cy="457.6" r="1.75"/><circle cx="765.7" cy="457.6" r="1.75"/><circle cx="769.9" cy="457.6" r="1.75"/><circle cx="774.1" cy="457.6" r="1.75"/><circle cx="778.3" cy="457.6" r="1.75"/><circle cx="782.5" cy="457.6" r="1.75"/><circle cx="786.7" cy="457.6" r="1.75"/><circle cx="799.3" cy="457.6" r="1.75"/><circle cx="803.5" cy="457.6" r="1.75"/><circle cx="811.9" cy="457.6" r="1.75"/><circle cx="715.3" cy="461.8" r="1.75"/><circle cx="719.5" cy="461.8" r="1.75"/><circle cx="723.7" cy="461.8" r="1.75"/><circle cx="727.9" cy="461.8" r="1.75"/><circle cx="732.1" cy="461.8" r="1.75"/><circle cx="744.7" cy="461.8" r="1.75"/><circle cx="748.9" cy="461.8" r="1.75"/><circle cx="753.1" cy="461.8" r="1.75"/><circle cx="757.3" cy="461.8" r="1.75"/><circle cx="765.7" cy="461.8" r="1.75"/><circle cx="769.9" cy="461.8" r="1.75"/><circle cx="774.1" cy="461.8" r="1.75"/><circle cx="778.3" cy="461.8" r="1.75"/><circle cx="782.5" cy="461.8" r="1.75"/><circle cx="786.7" cy="461.8" r="1.75"/><circle cx="799.3" cy="461.8" r="1.75"/><circle cx="803.5" cy="461.8" r="1.75"/><circle cx="807.7" cy="461.8" r="1.75"/><circle cx="811.9" cy="461.8" r="1.75"/><circle cx="715.3" cy="466.0" r="1.75"/><circle cx="719.5" cy="466.0" r="1.75"/><circle cx="723.7" cy="466.0" r="1.75"/><circle cx="727.9" cy="466.0" r="1.75"/><circle cx="732.1" cy="466.0" r="1.75"/><circle cx="744.7" cy="466.0" r="1.75"/><circle cx="748.9" cy="466.0" r="1.75"/><circle cx="753.1" cy="466.0" r="1.75"/><circle cx="757.3" cy="466.0" r="1.75"/><circle cx="761.5" cy="466.0" r="1.75"/><circle cx="765.7" cy="466.0" r="1.75"/><circle cx="769.9" cy="466.0" r="1.75"/><circle cx="774.1" cy="466.0" r="1.75"/><circle cx="778.3" cy="466.0" r="1.75"/><circle cx="782.5" cy="466.0" r="1.75"/><circle cx="799.3" cy="466.0" r="1.75"/><circle cx="803.5" cy="466.0" r="1.75"/><circle cx="811.9" cy="466.0" r="1.75"/><circle cx="715.3" cy="470.2" r="1.75"/><circle cx="719.5" cy="470.2" r="1.75"/><circle cx="723.7" cy="470.2" r="1.75"/><circle cx="727.9" cy="470.2" r="1.75"/><circle cx="732.1" cy="470.2" r="1.75"/><circle cx="744.7" cy="470.2" r="1.75"/><circle cx="748.9" cy="470.2" r="1.75"/><circle cx="753.1" cy="470.2" r="1.75"/><circle cx="757.3" cy="470.2" r="1.75"/><circle cx="761.5" cy="470.2" r="1.75"/><circle cx="765.7" cy="470.2" r="1.75"/><circle cx="769.9" cy="470.2" r="1.75"/><circle cx="774.1" cy="470.2" r="1.75"/><circle cx="778.3" cy="470.2" r="1.75"/><circle cx="782.5" cy="470.2" r="1.75"/><circle cx="786.7" cy="470.2" r="1.75"/><circle cx="799.3" cy="470.2" r="1.75"/><circle cx="803.5" cy="470.2" r="1.75"/><circle cx="807.7" cy="470.2" r="1.75"/><circle cx="811.9" cy="470.2" r="1.75"/><circle cx="715.3" cy="474.4" r="1.75"/><circle cx="719.5" cy="474.4" r="1.75"/><circle cx="723.7" cy="474.4" r="1.75"/><circle cx="727.9" cy="474.4" r="1.75"/><circle cx="732.1" cy="474.4" r="1.75"/><circle cx="744.7" cy="474.4" r="1.75"/><circle cx="748.9" cy="474.4" r="1.75"/><circle cx="753.1" cy="474.4" r="1.75"/><circle cx="757.3" cy="474.4" r="1.75"/><circle cx="761.5" cy="474.4" r="1.75"/><circle cx="765.7" cy="474.4" r="1.75"/><circle cx="769.9" cy="474.4" r="1.75"/><circle cx="774.1" cy="474.4" r="1.75"/><circle cx="778.3" cy="474.4" r="1.75"/><circle cx="782.5" cy="474.4" r="1.75"/><circle cx="786.7" cy="474.4" r="1.75"/><circle cx="803.5" cy="474.4" r="1.75"/><circle cx="811.9" cy="474.4" r="1.75"/><circle cx="715.3" cy="478.6" r="1.75"/><circle cx="719.5" cy="478.6" r="1.75"/><circle cx="723.7" cy="478.6" r="1.75"/><circle cx="727.9" cy="478.6" r="1.75"/><circle cx="732.1" cy="478.6" r="1.75"/><circle cx="744.7" cy="478.6" r="1.75"/><circle cx="748.9" cy="478.6" r="1.75"/><circle cx="753.1" cy="478.6" r="1.75"/><circle cx="757.3" cy="478.6" r="1.75"/><circle cx="761.5" cy="478.6" r="1.75"/><circle cx="765.7" cy="478.6" r="1.75"/><circle cx="769.9" cy="478.6" r="1.75"/><circle cx="774.1" cy="478.6" r="1.75"/><circle cx="778.3" cy="478.6" r="1.75"/><circle cx="782.5" cy="478.6" r="1.75"/><circle cx="786.7" cy="478.6" r="1.75"/><circle cx="799.3" cy="478.6" r="1.75"/><circle cx="803.5" cy="478.6" r="1.75"/><circle cx="807.7" cy="478.6" r="1.75"/><circle cx="811.9" cy="478.6" r="1.75"/><circle cx="715.3" cy="482.8" r="1.75"/><circle cx="723.7" cy="482.8" r="1.75"/><circle cx="727.9" cy="482.8" r="1.75"/><circle cx="744.7" cy="482.8" r="1.75"/><circle cx="748.9" cy="482.8" r="1.75"/><circle cx="753.1" cy="482.8" r="1.75"/><circle cx="757.3" cy="482.8" r="1.75"/><circle cx="761.5" cy="482.8" r="1.75"/><circle cx="765.7" cy="482.8" r="1.75"/><circle cx="769.9" cy="482.8" r="1.75"/><circle cx="774.1" cy="482.8" r="1.75"/><circle cx="778.3" cy="482.8" r="1.75"/><circle cx="782.5" cy="482.8" r="1.75"/><circle cx="786.7" cy="482.8" r="1.75"/><circle cx="799.3" cy="482.8" r="1.75"/><circle cx="807.7" cy="482.8" r="1.75"/><circle cx="811.9" cy="482.8" r="1.75"/><circle cx="715.3" cy="487.0" r="1.75"/><circle cx="719.5" cy="487.0" r="1.75"/><circle cx="723.7" cy="487.0" r="1.75"/><circle cx="727.9" cy="487.0" r="1.75"/><circle cx="732.1" cy="487.0" r="1.75"/><circle cx="744.7" cy="487.0" r="1.75"/><circle cx="748.9" cy="487.0" r="1.75"/><circle cx="753.1" cy="487.0" r="1.75"/><circle cx="757.3" cy="487.0" r="1.75"/><circle cx="761.5" cy="487.0" r="1.75"/><circle cx="765.7" cy="487.0" r="1.75"/><circle cx="769.9" cy="487.0" r="1.75"/><circle cx="774.1" cy="487.0" r="1.75"/><circle cx="778.3" cy="487.0" r="1.75"/><circle cx="782.5" cy="487.0" r="1.75"/><circle cx="786.7" cy="487.0" r="1.75"/><circle cx="803.5" cy="487.0" r="1.75"/><circle cx="807.7" cy="487.0" r="1.75"/><circle cx="811.9" cy="487.0" r="1.75"/><circle cx="715.3" cy="491.2" r="1.75"/><circle cx="719.5" cy="491.2" r="1.75"/><circle cx="723.7" cy="491.2" r="1.75"/><circle cx="732.1" cy="491.2" r="1.75"/><circle cx="744.7" cy="491.2" r="1.75"/><circle cx="748.9" cy="491.2" r="1.75"/><circle cx="753.1" cy="491.2" r="1.75"/><circle cx="757.3" cy="491.2" r="1.75"/><circle cx="761.5" cy="491.2" r="1.75"/><circle cx="765.7" cy="491.2" r="1.75"/><circle cx="769.9" cy="491.2" r="1.75"/><circle cx="774.1" cy="491.2" r="1.75"/><circle cx="778.3" cy="491.2" r="1.75"/><circle cx="782.5" cy="491.2" r="1.75"/><circle cx="786.7" cy="491.2" r="1.75"/><circle cx="799.3" cy="491.2" r="1.75"/><circle cx="807.7" cy="491.2" r="1.75"/><circle cx="715.3" cy="495.4" r="1.75"/><circle cx="719.5" cy="495.4" r="1.75"/><circle cx="723.7" cy="495.4" r="1.75"/><circle cx="727.9" cy="495.4" r="1.75"/><circle cx="732.1" cy="495.4" r="1.75"/><circle cx="803.5" cy="495.4" r="1.75"/><circle cx="807.7" cy="495.4" r="1.75"/><circle cx="811.9" cy="495.4" r="1.75"/><circle cx="715.3" cy="499.6" r="1.75"/><circle cx="719.5" cy="499.6" r="1.75"/><circle cx="723.7" cy="499.6" r="1.75"/><circle cx="727.9" cy="499.6" r="1.75"/><circle cx="732.1" cy="499.6" r="1.75"/><circle cx="799.3" cy="499.6" r="1.75"/><circle cx="803.5" cy="499.6" r="1.75"/><circle cx="807.7" cy="499.6" r="1.75"/><circle cx="811.9" cy="499.6" r="1.75"/><circle cx="715.3" cy="503.8" r="1.75"/><circle cx="719.5" cy="503.8" r="1.75"/><circle cx="736.3" cy="503.8" r="1.75"/><circle cx="740.5" cy="503.8" r="1.75"/><circle cx="744.7" cy="503.8" r="1.75"/><circle cx="753.1" cy="503.8" r="1.75"/><circle cx="757.3" cy="503.8" r="1.75"/><circle cx="761.5" cy="503.8" r="1.75"/><circle cx="765.7" cy="503.8" r="1.75"/><circle cx="769.9" cy="503.8" r="1.75"/><circle cx="774.1" cy="503.8" r="1.75"/><circle cx="778.3" cy="503.8" r="1.75"/><circle cx="782.5" cy="503.8" r="1.75"/><circle cx="786.7" cy="503.8" r="1.75"/><circle cx="790.9" cy="503.8" r="1.75"/><circle cx="795.1" cy="503.8" r="1.75"/><circle cx="799.3" cy="503.8" r="1.75"/><circle cx="803.5" cy="503.8" r="1.75"/><circle cx="807.7" cy="503.8" r="1.75"/><circle cx="811.9" cy="503.8" r="1.75"/><circle cx="715.3" cy="508.0" r="1.75"/><circle cx="719.5" cy="508.0" r="1.75"/><circle cx="727.9" cy="508.0" r="1.75"/><circle cx="732.1" cy="508.0" r="1.75"/><circle cx="736.3" cy="508.0" r="1.75"/><circle cx="740.5" cy="508.0" r="1.75"/><circle cx="744.7" cy="508.0" r="1.75"/><circle cx="753.1" cy="508.0" r="1.75"/><circle cx="761.5" cy="508.0" r="1.75"/><circle cx="774.1" cy="508.0" r="1.75"/><circle cx="778.3" cy="508.0" r="1.75"/><circle cx="782.5" cy="508.0" r="1.75"/><circle cx="786.7" cy="508.0" r="1.75"/><circle cx="790.9" cy="508.0" r="1.75"/><circle cx="795.1" cy="508.0" r="1.75"/><circle cx="799.3" cy="508.0" r="1.75"/><circle cx="803.5" cy="508.0" r="1.75"/><circle cx="807.7" cy="508.0" r="1.75"/><circle cx="811.9" cy="508.0" r="1.75"/><circle cx="715.3" cy="512.2" r="1.75"/><circle cx="719.5" cy="512.2" r="1.75"/><circle cx="723.7" cy="512.2" r="1.75"/><circle cx="727.9" cy="512.2" r="1.75"/><circle cx="736.3" cy="512.2" r="1.75"/><circle cx="740.5" cy="512.2" r="1.75"/><circle cx="744.7" cy="512.2" r="1.75"/><circle cx="748.9" cy="512.2" r="1.75"/><circle cx="753.1" cy="512.2" r="1.75"/><circle cx="757.3" cy="512.2" r="1.75"/><circle cx="761.5" cy="512.2" r="1.75"/><circle cx="765.7" cy="512.2" r="1.75"/><circle cx="769.9" cy="512.2" r="1.75"/><circle cx="774.1" cy="512.2" r="1.75"/><circle cx="778.3" cy="512.2" r="1.75"/><circle cx="782.5" cy="512.2" r="1.75"/><circle cx="786.7" cy="512.2" r="1.75"/><circle cx="790.9" cy="512.2" r="1.75"/><circle cx="795.1" cy="512.2" r="1.75"/><circle cx="799.3" cy="512.2" r="1.75"/><circle cx="807.7" cy="512.2" r="1.75"/><circle cx="811.9" cy="512.2" r="1.75"/></g>
<rect x="872.4" y="495.3" width="54.1" height="53.7" fill="none" stroke="#909090" stroke-width="0.8"/>
<g fill="#e81818"><circle cx="880.2" cy="499.0" r="1.75"/><circle cx="884.4" cy="499.0" r="1.75"/><circle cx="888.6" cy="499.0" r="1.75"/><circle cx="892.8" cy="499.0" r="1.75"/><circle cx="897.0" cy="499.0" r="1.75"/><circle cx="901.2" cy="499.0" r="1.75"/><circle cx="909.6" cy="499.0" r="1.75"/><circle cx="913.8" cy="499.0" r="1.75"/><circle cx="918.0" cy="499.0" r="1.75"/><circle cx="922.2" cy="499.0" r="1.75"/><circle cx="926.4" cy="499.0" r="1.75"/><circle cx="880.2" cy="503.2" r="1.75"/><circle cx="884.4" cy="503.2" r="1.75"/><circle cx="892.8" cy="503.2" r="1.75"/><circle cx="897.0" cy="503.2" r="1.75"/><circle cx="901.2" cy="503.2" r="1.75"/><circle cx="905.4" cy="503.2" r="1.75"/><circle cx="909.6" cy="503.2" r="1.75"/><circle cx="913.8" cy="503.2" r="1.75"/><circle cx="918.0" cy="503.2" r="1.75"/><circle cx="922.2" cy="503.2" r="1.75"/><circle cx="926.4" cy="503.2" r="1.75"/><circle cx="876.0" cy="507.4" r="1.75"/><circle cx="880.2" cy="507.4" r="1.75"/><circle cx="884.4" cy="507.4" r="1.75"/><circle cx="892.8" cy="507.4" r="1.75"/><circle cx="897.0" cy="507.4" r="1.75"/><circle cx="901.2" cy="507.4" r="1.75"/><circle cx="905.4" cy="507.4" r="1.75"/><circle cx="909.6" cy="507.4" r="1.75"/><circle cx="922.2" cy="507.4" r="1.75"/><circle cx="926.4" cy="507.4" r="1.75"/><circle cx="876.0" cy="511.6" r="1.75"/><circle cx="880.2" cy="511.6" r="1.75"/><circle cx="884.4" cy="511.6" r="1.75"/><circle cx="888.6" cy="511.6" r="1.75"/><circle cx="892.8" cy="511.6" r="1.75"/><circle cx="897.0" cy="511.6" r="1.75"/><circle cx="905.4" cy="511.6" r="1.75"/><circle cx="909.6" cy="511.6" r="1.75"/><circle cx="913.8" cy="511.6" r="1.75"/><circle cx="918.0" cy="511.6" r="1.75"/><circle cx="926.4" cy="511.6" r="1.75"/><circle cx="876.0" cy="515.8" r="1.75"/><circle cx="880.2" cy="515.8" r="1.75"/><circle cx="884.4" cy="515.8" r="1.75"/><circle cx="888.6" cy="515.8" r="1.75"/><circle cx="892.8" cy="515.8" r="1.75"/><circle cx="897.0" cy="515.8" r="1.75"/><circle cx="901.2" cy="515.8" r="1.75"/><circle cx="905.4" cy="515.8" r="1.75"/><circle cx="909.6" cy="515.8" r="1.75"/><circle cx="913.8" cy="515.8" r="1.75"/><circle cx="918.0" cy="515.8" r="1.75"/><circle cx="922.2" cy="515.8" r="1.75"/><circle cx="926.4" cy="515.8" r="1.75"/><circle cx="876.0" cy="520.0" r="1.75"/><circle cx="880.2" cy="520.0" r="1.75"/><circle cx="884.4" cy="520.0" r="1.75"/><circle cx="888.6" cy="520.0" r="1.75"/><circle cx="892.8" cy="520.0" r="1.75"/><circle cx="897.0" cy="520.0" r="1.75"/><circle cx="909.6" cy="520.0" r="1.75"/><circle cx="913.8" cy="520.0" r="1.75"/><circle cx="918.0" cy="520.0" r="1.75"/><circle cx="922.2" cy="520.0" r="1.75"/><circle cx="926.4" cy="520.0" r="1.75"/><circle cx="876.0" cy="524.2" r="1.75"/><circle cx="880.2" cy="524.2" r="1.75"/><circle cx="888.6" cy="524.2" r="1.75"/><circle cx="892.8" cy="524.2" r="1.75"/><circle cx="897.0" cy="524.2" r="1.75"/><circle cx="901.2" cy="524.2" r="1.75"/><circle cx="905.4" cy="524.2" r="1.75"/><circle cx="909.6" cy="524.2" r="1.75"/><circle cx="913.8" cy="524.2" r="1.75"/><circle cx="918.0" cy="524.2" r="1.75"/><circle cx="922.2" cy="524.2" r="1.75"/><circle cx="926.4" cy="524.2" r="1.75"/><circle cx="876.0" cy="528.4" r="1.75"/><circle cx="880.2" cy="528.4" r="1.75"/><circle cx="884.4" cy="528.4" r="1.75"/><circle cx="888.6" cy="528.4" r="1.75"/><circle cx="901.2" cy="528.4" r="1.75"/><circle cx="905.4" cy="528.4" r="1.75"/><circle cx="909.6" cy="528.4" r="1.75"/><circle cx="913.8" cy="528.4" r="1.75"/><circle cx="918.0" cy="528.4" r="1.75"/><circle cx="922.2" cy="528.4" r="1.75"/><circle cx="926.4" cy="528.4" r="1.75"/><circle cx="876.0" cy="532.6" r="1.75"/><circle cx="880.2" cy="532.6" r="1.75"/><circle cx="884.4" cy="532.6" r="1.75"/><circle cx="888.6" cy="532.6" r="1.75"/><circle cx="892.8" cy="532.6" r="1.75"/><circle cx="897.0" cy="532.6" r="1.75"/><circle cx="901.2" cy="532.6" r="1.75"/><circle cx="905.4" cy="532.6" r="1.75"/><circle cx="909.6" cy="532.6" r="1.75"/><circle cx="918.0" cy="532.6" r="1.75"/><circle cx="922.2" cy="532.6" r="1.75"/><circle cx="926.4" cy="532.6" r="1.75"/><circle cx="876.0" cy="536.8" r="1.75"/><circle cx="880.2" cy="536.8" r="1.75"/><circle cx="888.6" cy="536.8" r="1.75"/><circle cx="892.8" cy="536.8" r="1.75"/><circle cx="897.0" cy="536.8" r="1.75"/><circle cx="901.2" cy="536.8" r="1.75"/><circle cx="905.4" cy="536.8" r="1.75"/><circle cx="909.6" cy="536.8" r="1.75"/><circle cx="913.8" cy="536.8" r="1.75"/><circle cx="918.0" cy="536.8" r="1.75"/><circle cx="922.2" cy="536.8" r="1.75"/><circle cx="926.4" cy="536.8" r="1.75"/><circle cx="876.0" cy="541.0" r="1.75"/><circle cx="880.2" cy="541.0" r="1.75"/><circle cx="884.4" cy="541.0" r="1.75"/><circle cx="888.6" cy="541.0" r="1.75"/><circle cx="892.8" cy="541.0" r="1.75"/><circle cx="897.0" cy="541.0" r="1.75"/><circle cx="901.2" cy="541.0" r="1.75"/><circle cx="905.4" cy="541.0" r="1.75"/><circle cx="909.6" cy="541.0" r="1.75"/><circle cx="913.8" cy="541.0" r="1.75"/><circle cx="918.0" cy="541.0" r="1.75"/><circle cx="922.2" cy="541.0" r="1.75"/><circle cx="926.4" cy="541.0" r="1.75"/><circle cx="880.2" cy="545.2" r="1.75"/><circle cx="888.6" cy="545.2" r="1.75"/><circle cx="892.8" cy="545.2" r="1.75"/><circle cx="897.0" cy="545.2" r="1.75"/><circle cx="901.2" cy="545.2" r="1.75"/><circle cx="905.4" cy="545.2" r="1.75"/><circle cx="909.6" cy="545.2" r="1.75"/><circle cx="913.8" cy="545.2" r="1.75"/><circle cx="918.0" cy="545.2" r="1.75"/><circle cx="922.2" cy="545.2" r="1.75"/><circle cx="926.4" cy="545.2" r="1.75"/></g>
<rect x="966.2" y="410" width="46.1" height="51" fill="none" stroke="#6cd4e0" stroke-width="1"/>
<g fill="#e81818"><circle cx="969.5" cy="414.0" r="2.0"/><circle cx="973.6" cy="414.0" r="2.0"/><circle cx="977.7" cy="414.0" r="2.0"/><circle cx="981.8" cy="414.0" r="2.0"/><circle cx="985.9" cy="414.0" r="2.0"/><circle cx="990.0" cy="414.0" r="2.0"/><circle cx="994.1" cy="414.0" r="2.0"/><circle cx="998.2" cy="414.0" r="2.0"/><circle cx="1002.3" cy="414.0" r="2.0"/><circle cx="1006.4" cy="414.0" r="2.0"/><circle cx="1010.5" cy="414.0" r="2.0"/><circle cx="969.5" cy="418.1" r="2.0"/><circle cx="973.6" cy="418.1" r="2.0"/><circle cx="977.7" cy="418.1" r="2.0"/><circle cx="981.8" cy="418.1" r="2.0"/><circle cx="994.1" cy="418.1" r="2.0"/><circle cx="998.2" cy="418.1" r="2.0"/><circle cx="1002.3" cy="418.1" r="2.0"/><circle cx="1006.4" cy="418.1" r="2.0"/><circle cx="969.5" cy="422.2" r="2.0"/><circle cx="973.6" cy="422.2" r="2.0"/><circle cx="977.7" cy="422.2" r="2.0"/><circle cx="981.8" cy="422.2" r="2.0"/><circle cx="985.9" cy="422.2" r="2.0"/><circle cx="990.0" cy="422.2" r="2.0"/><circle cx="994.1" cy="422.2" r="2.0"/><circle cx="998.2" cy="422.2" r="2.0"/><circle cx="1002.3" cy="422.2" r="2.0"/><circle cx="1006.4" cy="422.2" r="2.0"/><circle cx="1010.5" cy="422.2" r="2.0"/><circle cx="969.5" cy="426.3" r="2.0"/><circle cx="977.7" cy="426.3" r="2.0"/><circle cx="981.8" cy="426.3" r="2.0"/><circle cx="985.9" cy="426.3" r="2.0"/><circle cx="990.0" cy="426.3" r="2.0"/><circle cx="998.2" cy="426.3" r="2.0"/><circle cx="1002.3" cy="426.3" r="2.0"/><circle cx="1006.4" cy="426.3" r="2.0"/><circle cx="1010.5" cy="426.3" r="2.0"/><circle cx="969.5" cy="430.4" r="2.0"/><circle cx="977.7" cy="430.4" r="2.0"/><circle cx="981.8" cy="430.4" r="2.0"/><circle cx="985.9" cy="430.4" r="2.0"/><circle cx="990.0" cy="430.4" r="2.0"/><circle cx="994.1" cy="430.4" r="2.0"/><circle cx="998.2" cy="430.4" r="2.0"/><circle cx="1002.3" cy="430.4" r="2.0"/><circle cx="1006.4" cy="430.4" r="2.0"/><circle cx="1010.5" cy="430.4" r="2.0"/><circle cx="969.5" cy="434.5" r="2.0"/><circle cx="977.7" cy="434.5" r="2.0"/><circle cx="985.9" cy="434.5" r="2.0"/><circle cx="990.0" cy="434.5" r="2.0"/><circle cx="994.1" cy="434.5" r="2.0"/><circle cx="998.2" cy="434.5" r="2.0"/><circle cx="1002.3" cy="434.5" r="2.0"/><circle cx="1006.4" cy="434.5" r="2.0"/><circle cx="1010.5" cy="434.5" r="2.0"/><circle cx="969.5" cy="438.6" r="2.0"/><circle cx="973.6" cy="438.6" r="2.0"/><circle cx="977.7" cy="438.6" r="2.0"/><circle cx="981.8" cy="438.6" r="2.0"/><circle cx="990.0" cy="438.6" r="2.0"/><circle cx="994.1" cy="438.6" r="2.0"/><circle cx="998.2" cy="438.6" r="2.0"/><circle cx="1002.3" cy="438.6" r="2.0"/><circle cx="1006.4" cy="438.6" r="2.0"/><circle cx="1010.5" cy="438.6" r="2.0"/><circle cx="969.5" cy="442.7" r="2.0"/><circle cx="977.7" cy="442.7" r="2.0"/><circle cx="981.8" cy="442.7" r="2.0"/><circle cx="985.9" cy="442.7" r="2.0"/><circle cx="990.0" cy="442.7" r="2.0"/><circle cx="994.1" cy="442.7" r="2.0"/><circle cx="998.2" cy="442.7" r="2.0"/><circle cx="1002.3" cy="442.7" r="2.0"/><circle cx="1006.4" cy="442.7" r="2.0"/><circle cx="1010.5" cy="442.7" r="2.0"/><circle cx="969.5" cy="446.8" r="2.0"/><circle cx="973.6" cy="446.8" r="2.0"/><circle cx="977.7" cy="446.8" r="2.0"/><circle cx="981.8" cy="446.8" r="2.0"/><circle cx="985.9" cy="446.8" r="2.0"/><circle cx="990.0" cy="446.8" r="2.0"/><circle cx="994.1" cy="446.8" r="2.0"/><circle cx="998.2" cy="446.8" r="2.0"/><circle cx="1002.3" cy="446.8" r="2.0"/><circle cx="1006.4" cy="446.8" r="2.0"/><circle cx="1010.5" cy="446.8" r="2.0"/><circle cx="969.5" cy="450.9" r="2.0"/><circle cx="973.6" cy="450.9" r="2.0"/><circle cx="977.7" cy="450.9" r="2.0"/><circle cx="981.8" cy="450.9" r="2.0"/><circle cx="985.9" cy="450.9" r="2.0"/><circle cx="990.0" cy="450.9" r="2.0"/><circle cx="994.1" cy="450.9" r="2.0"/><circle cx="1002.3" cy="450.9" r="2.0"/><circle cx="1006.4" cy="450.9" r="2.0"/><circle cx="1010.5" cy="450.9" r="2.0"/><circle cx="969.5" cy="455.0" r="2.0"/><circle cx="973.6" cy="455.0" r="2.0"/><circle cx="977.7" cy="455.0" r="2.0"/><circle cx="981.8" cy="455.0" r="2.0"/><circle cx="985.9" cy="455.0" r="2.0"/><circle cx="990.0" cy="455.0" r="2.0"/><circle cx="994.1" cy="455.0" r="2.0"/><circle cx="998.2" cy="455.0" r="2.0"/><circle cx="1006.4" cy="455.0" r="2.0"/><circle cx="1010.5" cy="455.0" r="2.0"/><circle cx="969.5" cy="459.1" r="2.0"/><circle cx="973.6" cy="459.1" r="2.0"/><circle cx="977.7" cy="459.1" r="2.0"/><circle cx="985.9" cy="459.1" r="2.0"/><circle cx="990.0" cy="459.1" r="2.0"/><circle cx="994.1" cy="459.1" r="2.0"/><circle cx="998.2" cy="459.1" r="2.0"/><circle cx="1002.3" cy="459.1" r="2.0"/><circle cx="1006.4" cy="459.1" r="2.0"/><circle cx="1010.5" cy="459.1" r="2.0"/></g>
<g fill="#f01414"><rect x="682.9" y="341.8" width="2.5" height="6.5"/><rect x="682.9" y="380.8" width="2.5" height="6.5"/><rect x="676.0" y="348.7" width="6.5" height="2.5"/><rect x="715.1" y="348.7" width="6.5" height="2.5"/><rect x="686.1" y="341.8" width="2.5" height="6.5"/><rect x="686.1" y="380.8" width="2.5" height="6.5"/><rect x="676.0" y="351.9" width="6.5" height="2.5"/><rect x="715.1" y="351.9" width="6.5" height="2.5"/><rect x="689.4" y="341.8" width="2.5" height="6.5"/><rect x="689.4" y="380.8" width="2.5" height="6.5"/><rect x="676.0" y="355.2" width="6.5" height="2.5"/><rect x="715.1" y="355.2" width="6.5" height="2.5"/><rect x="692.7" y="341.8" width="2.5" height="6.5"/><rect x="692.7" y="380.8" width="2.5" height="6.5"/><rect x="676.0" y="358.4" width="6.5" height="2.5"/><rect x="715.1" y="358.4" width="6.5" height="2.5"/><rect x="695.9" y="341.8" width="2.5" height="6.5"/><rect x="695.9" y="380.8" width="2.5" height="6.5"/><rect x="676.0" y="361.7" width="6.5" height="2.5"/><rect x="715.1" y="361.7" width="6.5" height="2.5"/><rect x="699.2" y="341.8" width="2.5" height="6.5"/><rect x="699.2" y="380.8" width="2.5" height="6.5"/><rect x="676.0" y="364.9" width="6.5" height="2.5"/><rect x="715.1" y="364.9" width="6.5" height="2.5"/><rect x="702.4" y="341.8" width="2.5" height="6.5"/><rect x="702.4" y="380.8" width="2.5" height="6.5"/><rect x="676.0" y="368.2" width="6.5" height="2.5"/><rect x="715.1" y="368.2" width="6.5" height="2.5"/><rect x="705.7" y="341.8" width="2.5" height="6.5"/><rect x="705.7" y="380.8" width="2.5" height="6.5"/><rect x="676.0" y="371.4" width="6.5" height="2.5"/><rect x="715.1" y="371.4" width="6.5" height="2.5"/><rect x="709.0" y="341.8" width="2.5" height="6.5"/><rect x="709.0" y="380.8" width="2.5" height="6.5"/><rect x="676.0" y="374.7" width="6.5" height="2.5"/><rect x="715.1" y="374.7" width="6.5" height="2.5"/><rect x="712.2" y="341.8" width="2.5" height="6.5"/><rect x="712.2" y="380.8" width="2.5" height="6.5"/><rect x="676.0" y="377.9" width="6.5" height="2.5"/><rect x="715.1" y="377.9" width="6.5" height="2.5"/></g>
<rect x="683.5" y="349.0" width="32.0" height="32.0" fill="#f01414" />
<g fill="#f01414"><rect x="644.5" y="544.0" width="2.8" height="6.5"/><rect x="644.5" y="576.1" width="2.8" height="6.5"/><rect x="637.6" y="550.9" width="6.5" height="2.8"/><rect x="669.0" y="550.9" width="6.5" height="2.8"/><rect x="648.0" y="544.0" width="2.8" height="6.5"/><rect x="648.0" y="576.1" width="2.8" height="6.5"/><rect x="637.6" y="554.6" width="6.5" height="2.8"/><rect x="669.0" y="554.6" width="6.5" height="2.8"/><rect x="651.6" y="544.0" width="2.8" height="6.5"/><rect x="651.6" y="576.1" width="2.8" height="6.5"/><rect x="637.6" y="558.2" width="6.5" height="2.8"/><rect x="669.0" y="558.2" width="6.5" height="2.8"/><rect x="655.1" y="544.0" width="2.8" height="6.5"/><rect x="655.1" y="576.1" width="2.8" height="6.5"/><rect x="637.6" y="561.9" width="6.5" height="2.8"/><rect x="669.0" y="561.9" width="6.5" height="2.8"/><rect x="658.7" y="544.0" width="2.8" height="6.5"/><rect x="658.7" y="576.1" width="2.8" height="6.5"/><rect x="637.6" y="565.6" width="6.5" height="2.8"/><rect x="669.0" y="565.6" width="6.5" height="2.8"/><rect x="662.3" y="544.0" width="2.8" height="6.5"/><rect x="662.3" y="576.1" width="2.8" height="6.5"/><rect x="637.6" y="569.2" width="6.5" height="2.8"/><rect x="669.0" y="569.2" width="6.5" height="2.8"/><rect x="665.8" y="544.0" width="2.8" height="6.5"/><rect x="665.8" y="576.1" width="2.8" height="6.5"/><rect x="637.6" y="572.9" width="6.5" height="2.8"/><rect x="669.0" y="572.9" width="6.5" height="2.8"/></g>
<rect x="645.0" y="551.0" width="23.0" height="24.0" fill="#f01414" />
<g fill="#f01414"><rect x="1005.6" y="545.0" width="3" height="6"/><rect x="1005.6" y="586.0" width="3" height="6"/><rect x="999.2" y="551.4" width="6" height="3"/><rect x="1038.7" y="551.4" width="6" height="3"/><rect x="1009.3" y="545.0" width="3" height="6"/><rect x="1009.3" y="586.0" width="3" height="6"/><rect x="999.2" y="555.3" width="6" height="3"/><rect x="1038.7" y="555.3" width="6" height="3"/><rect x="1013.0" y="545.0" width="3" height="6"/><rect x="1013.0" y="586.0" width="3" height="6"/><rect x="999.2" y="559.2" width="6" height="3"/><rect x="1038.7" y="559.2" width="6" height="3"/><rect x="1016.7" y="545.0" width="3" height="6"/><rect x="1016.7" y="586.0" width="3" height="6"/><rect x="999.2" y="563.1" width="6" height="3"/><rect x="1038.7" y="563.1" width="6" height="3"/><rect x="1020.5" y="545.0" width="3" height="6"/><rect x="1020.5" y="586.0" width="3" height="6"/><rect x="999.2" y="567.0" width="6" height="3"/><rect x="1038.7" y="567.0" width="6" height="3"/><rect x="1024.2" y="545.0" width="3" height="6"/><rect x="1024.2" y="586.0" width="3" height="6"/><rect x="999.2" y="570.9" width="6" height="3"/><rect x="1038.7" y="570.9" width="6" height="3"/><rect x="1027.9" y="545.0" width="3" height="6"/><rect x="1027.9" y="586.0" width="3" height="6"/><rect x="999.2" y="574.8" width="6" height="3"/><rect x="1038.7" y="574.8" width="6" height="3"/><rect x="1031.6" y="545.0" width="3" height="6"/><rect x="1031.6" y="586.0" width="3" height="6"/><rect x="999.2" y="578.7" width="6" height="3"/><rect x="1038.7" y="578.7" width="6" height="3"/><rect x="1035.3" y="545.0" width="3" height="6"/><rect x="1035.3" y="586.0" width="3" height="6"/><rect x="999.2" y="582.6" width="6" height="3"/><rect x="1038.7" y="582.6" width="6" height="3"/></g>
<rect x="1007.0" y="553.0" width="9.0" height="9.5" fill="#f01414" />
<rect x="1007.0" y="563.5" width="9.0" height="9.5" fill="#f01414" />
<rect x="1007.0" y="574.0" width="9.0" height="9.5" fill="#f01414" />
<rect x="1017.0" y="553.0" width="9.0" height="9.5" fill="#f01414" />
<rect x="1017.0" y="563.5" width="9.0" height="9.5" fill="#f01414" />
<rect x="1017.0" y="574.0" width="9.0" height="9.5" fill="#f01414" />
<rect x="1027.0" y="553.0" width="9.0" height="9.5" fill="#f01414" />
<rect x="1027.0" y="563.5" width="9.0" height="9.5" fill="#f01414" />
<rect x="1027.0" y="574.0" width="9.0" height="9.5" fill="#f01414" />
<rect x="1105.5" y="489.0" width="2.6" height="4.0" fill="#f01414" />
<rect x="1105.5" y="538.6" width="2.6" height="4.2" fill="#f01414" />
<rect x="1105.5" y="514.0" width="2.6" height="4.0" fill="#f01414" />
<rect x="1109.3" y="489.0" width="2.6" height="4.0" fill="#f01414" />
<rect x="1109.3" y="538.6" width="2.6" height="4.2" fill="#f01414" />
<rect x="1109.3" y="514.0" width="2.6" height="4.0" fill="#f01414" />
<rect x="1113.1" y="489.0" width="2.6" height="4.0" fill="#f01414" />
<rect x="1113.1" y="538.6" width="2.6" height="4.2" fill="#f01414" />
<rect x="1113.1" y="514.0" width="2.6" height="4.0" fill="#f01414" />
<rect x="1116.9" y="489.0" width="2.6" height="4.0" fill="#f01414" />
<rect x="1116.9" y="538.6" width="2.6" height="4.2" fill="#f01414" />
<rect x="1116.9" y="514.0" width="2.6" height="4.0" fill="#f01414" />
<rect x="1120.7" y="489.0" width="2.6" height="4.0" fill="#f01414" />
<rect x="1120.7" y="538.6" width="2.6" height="4.2" fill="#f01414" />
<rect x="1120.7" y="514.0" width="2.6" height="4.0" fill="#f01414" />
<rect x="1098.4" y="491.0" width="5.0" height="2.5" fill="#f01414" />
<rect x="1125.6" y="491.0" width="5.0" height="2.5" fill="#f01414" />
<rect x="1098.4" y="495.2" width="5.0" height="2.5" fill="#f01414" />
<rect x="1125.6" y="495.2" width="5.0" height="2.5" fill="#f01414" />
<rect x="1098.4" y="499.4" width="5.0" height="2.5" fill="#f01414" />
<rect x="1125.6" y="499.4" width="5.0" height="2.5" fill="#f01414" />
<rect x="1098.4" y="503.6" width="5.0" height="2.5" fill="#f01414" />
<rect x="1125.6" y="503.6" width="5.0" height="2.5" fill="#f01414" />
<rect x="1098.4" y="507.8" width="5.0" height="2.5" fill="#f01414" />
<rect x="1125.6" y="507.8" width="5.0" height="2.5" fill="#f01414" />
<rect x="1098.4" y="512.0" width="5.0" height="2.5" fill="#f01414" />
<rect x="1125.6" y="512.0" width="5.0" height="2.5" fill="#f01414" />
<rect x="1098.4" y="516.2" width="5.0" height="2.5" fill="#f01414" />
<rect x="1125.6" y="516.2" width="5.0" height="2.5" fill="#f01414" />
<rect x="1098.4" y="520.4" width="5.0" height="2.5" fill="#f01414" />
<rect x="1125.6" y="520.4" width="5.0" height="2.5" fill="#f01414" />
<rect x="1098.4" y="524.6" width="5.0" height="2.5" fill="#f01414" />
<rect x="1125.6" y="524.6" width="5.0" height="2.5" fill="#f01414" />
<rect x="1098.4" y="528.8" width="5.0" height="2.5" fill="#f01414" />
<rect x="1125.6" y="528.8" width="5.0" height="2.5" fill="#f01414" />
<rect x="1098.4" y="533.0" width="5.0" height="2.5" fill="#f01414" />
<rect x="1125.6" y="533.0" width="5.0" height="2.5" fill="#f01414" />
<rect x="1098.4" y="537.2" width="5.0" height="2.5" fill="#f01414" />
<rect x="1125.6" y="537.2" width="5.0" height="2.5" fill="#f01414" />
<rect x="1105.5" y="495.5" width="8.4" height="7.8" fill="#f01414" />
<rect x="1114.4" y="495.5" width="8.4" height="7.8" fill="#f01414" />
<rect x="1105.5" y="504.0" width="8.4" height="7.8" fill="#f01414" />
<rect x="1114.4" y="504.0" width="8.4" height="7.8" fill="#f01414" />
<rect x="1105.5" y="520.4" width="8.4" height="7.8" fill="#f01414" />
<rect x="1114.4" y="520.4" width="8.4" height="7.8" fill="#f01414" />
<rect x="1105.5" y="528.6" width="8.4" height="7.8" fill="#f01414" />
<rect x="1114.4" y="528.6" width="8.4" height="7.8" fill="#f01414" />
<rect x="611.0" y="320.0" width="5.8" height="10.0" fill="#f01414" />
<rect x="618.8" y="320.0" width="5.8" height="10.0" fill="#f01414" />
<rect x="786.0" y="261.0" width="13.5" height="7.0" fill="#f01414" />
<rect x="786.0" y="271.0" width="13.5" height="7.0" fill="#f01414" />
<rect x="828.0" y="271.5" width="14.8" height="19.8" fill="#f01414" />
<path d="M831,267 v-3.5 h9 v3.5" fill="none" stroke="#4a8a8a" stroke-width="1"/>
<rect x="917.4" y="271.5" width="14.8" height="19.8" fill="#f01414" />
<path d="M920,267 v-3.5 h9 v3.5" fill="none" stroke="#4a8a8a" stroke-width="1"/>
<rect x="932.0" y="311.0" width="5.5" height="10.0" fill="#f01414" />
<rect x="939.5" y="311.0" width="5.5" height="10.0" fill="#f01414" />
<rect x="902.0" y="350.7" width="5.5" height="10.0" fill="#f01414" />
<rect x="909.5" y="350.7" width="5.5" height="10.0" fill="#f01414" />
<rect x="825.4" y="321.4" width="15.8" height="8.2" fill="#f01414" />
<rect x="825.4" y="333.6" width="15.8" height="8.2" fill="#f01414" />
<rect x="889.7" y="297.3" width="29.7" height="22.7" fill="#fff" stroke="#c0c0c0" stroke-width="0.6"/>
<circle cx="893.5" cy="301.5" r="2.4" fill="#f01414" />
<circle cx="893.5" cy="316.0" r="2.4" fill="#f01414" />
<circle cx="915.0" cy="301.5" r="2.8" fill="#f01414" />
<circle cx="915.0" cy="309.0" r="2.6" fill="#f01414" />
<circle cx="915.0" cy="316.0" r="2.8" fill="#f01414" />
<circle cx="898" cy="309" r="3.2" fill="none" stroke="#f01414" stroke-width="2"/>
<rect x="789.5" y="331.0" width="6.0" height="8.0" fill="#f01414" />
<rect x="789.5" y="342.0" width="6.0" height="8.0" fill="#f01414" />
<rect x="797.5" y="331.0" width="6.0" height="8.0" fill="#f01414" />
<rect x="797.5" y="342.0" width="6.0" height="8.0" fill="#f01414" />
<rect x="805.5" y="331.0" width="6.0" height="8.0" fill="#f01414" />
<rect x="805.5" y="342.0" width="6.0" height="8.0" fill="#f01414" />
<rect x="789.0" y="352.0" width="4.0" height="5.0" fill="#e0603a" />
<rect x="794.0" y="352.0" width="4.0" height="5.0" fill="#e0603a" />
<rect x="799.0" y="352.0" width="4.0" height="5.0" fill="#e0603a" />
<rect x="804.0" y="352.0" width="4.0" height="5.0" fill="#e0603a" />
<rect x="945.0" y="365.0" width="5.0" height="7.0" fill="#f01414" />
<rect x="954.0" y="365.0" width="7.0" height="4.0" fill="#f01414" />
<rect x="964.0" y="365.0" width="4.5" height="7.0" fill="#f01414" />
<rect x="945.0" y="376.0" width="5.0" height="7.0" fill="#f01414" />
<rect x="954.0" y="380.0" width="7.0" height="4.0" fill="#f01414" />
<rect x="964.0" y="376.0" width="4.5" height="7.0" fill="#f01414" />
<rect x="970.0" y="368.0" width="8.0" height="4.5" fill="#f01414" />
<rect x="940.0" y="375.0" width="4.0" height="7.0" fill="#f01414" />
<rect x="957.0" y="385.0" width="7.0" height="5.0" fill="#f01414" />
<rect x="1001.5" y="253.7" width="7.5" height="7.5" fill="#f01414" />
<rect x="1020.5" y="253.7" width="7.5" height="7.5" fill="#f01414" />
<rect x="1001.5" y="264.1" width="7.5" height="7.5" fill="#f01414" />
<rect x="1020.5" y="264.1" width="7.5" height="7.5" fill="#f01414" />
<rect x="1001.5" y="274.5" width="7.5" height="7.5" fill="#f01414" />
<rect x="1020.5" y="274.5" width="7.5" height="7.5" fill="#f01414" />
<rect x="1001.5" y="284.9" width="7.5" height="7.5" fill="#f01414" />
<rect x="1020.5" y="284.9" width="7.5" height="7.5" fill="#f01414" />
<rect x="1012.0" y="254.5" width="6.5" height="37.0" fill="#f01414" />
<rect x="1045.0" y="262.6" width="8.9" height="12.9" fill="#f01414" />
<rect x="1055.9" y="262.6" width="8.9" height="12.9" fill="#f01414" />
<rect x="1112.3" y="309.0" width="5.5" height="11.0" fill="#f01414" />
<rect x="1119.8" y="309.0" width="5.5" height="11.0" fill="#f01414" />
<rect x="1130.0" y="581.0" width="5.0" height="11.0" fill="#f01414" />
<rect x="1138.0" y="581.0" width="5.0" height="11.0" fill="#f01414" />
<rect x="617.0" y="567.0" width="5.2" height="10.0" fill="#f01414" />
<rect x="624.8" y="567.0" width="5.2" height="10.0" fill="#f01414" />
<rect x="686.5" y="532.9" width="18.9" height="8.5" fill="#f01414" />
<rect x="686.5" y="549.4" width="18.9" height="8.5" fill="#f01414" />
<rect x="614.0" y="516.0" width="4.5" height="3.5" fill="#e2602e" />
<rect x="614.0" y="520.2" width="4.5" height="3.5" fill="#e2602e" />
<rect x="614.0" y="524.4" width="4.5" height="3.5" fill="#e2602e" />
<rect x="614.0" y="528.6" width="4.5" height="3.5" fill="#e2602e" />
<rect x="621.0" y="517.0" width="5.0" height="5.0" fill="#f01414" />
<rect x="621.0" y="523.5" width="5.0" height="5.0" fill="#f01414" />
<rect x="627.5" y="517.0" width="5.0" height="5.0" fill="#f01414" />
<rect x="627.5" y="523.5" width="5.0" height="5.0" fill="#f01414" />
<rect x="637.0" y="525.0" width="3.5" height="4.0" fill="#e2602e" />
<rect x="641.5" y="525.0" width="3.5" height="4.0" fill="#e2602e" />
<rect x="646.0" y="519.5" width="9.0" height="21.5" fill="#fff" stroke="#a8d8d0" stroke-width="0.6"/>
<rect x="646.0" y="519.5" width="9.0" height="7.1" fill="#f01414" />
<rect x="646.0" y="533.9" width="9.0" height="7.1" fill="#f01414" />
<rect x="656.0" y="520.0" width="5.0" height="8.5" fill="#f01414" />
<rect x="662.0" y="520.0" width="5.0" height="8.5" fill="#f01414" />
<rect x="668.0" y="520.0" width="5.0" height="8.5" fill="#f01414" />
<rect x="657.0" y="531.0" width="5.0" height="9.0" fill="#f01414" />
<rect x="663.5" y="531.0" width="5.0" height="9.0" fill="#f01414" />
<rect x="613.0" y="534.0" width="24.0" height="8.0" fill="#fff" stroke="#a8d8d0" stroke-width="0.6"/>
<rect x="613.0" y="534.0" width="7.9" height="8.0" fill="#f01414" />
<rect x="629.1" y="534.0" width="7.9" height="8.0" fill="#f01414" />
<rect x="614.0" y="545.0" width="8.0" height="8.0" fill="#f01414" />
<rect x="624.0" y="545.0" width="8.0" height="8.0" fill="#f01414" />
<rect x="615.0" y="553.5" width="3.5" height="4.0" fill="#e2602e" />
<rect x="619.4" y="553.5" width="3.5" height="4.0" fill="#e2602e" />
<rect x="623.8" y="553.5" width="3.5" height="4.0" fill="#e2602e" />
<rect x="628.2" y="553.5" width="3.5" height="4.0" fill="#e2602e" />
<rect x="678.0" y="545.0" width="6.0" height="4.5" fill="#f01414" />
<rect x="678.0" y="550.5" width="6.0" height="4.5" fill="#f01414" />
<rect x="678.0" y="566.0" width="10.0" height="24.0" fill="#fff" stroke="#a8d8d0" stroke-width="0.6"/>
<rect x="678.0" y="566.0" width="10.0" height="7.9" fill="#f01414" />
<rect x="678.0" y="582.1" width="10.0" height="7.9" fill="#f01414" />
<rect x="689.0" y="562.0" width="5.0" height="5.0" fill="#f01414" />
<rect x="689.0" y="569.0" width="5.0" height="5.0" fill="#f01414" />
<rect x="689.0" y="576.0" width="5.0" height="5.0" fill="#f01414" />
<rect x="689.0" y="583.0" width="5.0" height="5.0" fill="#f01414" />
<rect x="695.5" y="562.0" width="5.0" height="5.0" fill="#f01414" />
<rect x="695.5" y="569.0" width="5.0" height="5.0" fill="#f01414" />
<rect x="695.5" y="576.0" width="5.0" height="5.0" fill="#f01414" />
<rect x="695.5" y="583.0" width="5.0" height="5.0" fill="#f01414" />
<rect x="708.0" y="545.0" width="10.0" height="22.0" fill="#fff" stroke="#a8d8d0" stroke-width="0.6"/>
<rect x="708.0" y="545.0" width="10.0" height="7.3" fill="#f01414" />
<rect x="708.0" y="559.7" width="10.0" height="7.3" fill="#f01414" />
<rect x="712.0" y="574.0" width="6.0" height="5.0" fill="#f01414" />
<rect x="712.0" y="580.5" width="6.0" height="5.0" fill="#f01414" />
<rect x="708.0" y="519.0" width="4.0" height="4.0" fill="#e2602e" />
<rect x="708.0" y="524.5" width="4.0" height="4.0" fill="#e2602e" />
<rect x="713.5" y="519.0" width="4.0" height="4.0" fill="#e2602e" />
<rect x="713.5" y="524.5" width="4.0" height="4.0" fill="#e2602e" />
<rect x="719.0" y="519.0" width="4.0" height="4.0" fill="#e2602e" />
<rect x="719.0" y="524.5" width="4.0" height="4.0" fill="#e2602e" />
<rect x="718.0" y="532.0" width="3.4" height="3.6" fill="#e8502a" />
<rect x="718.0" y="537.0" width="3.4" height="3.6" fill="#e8502a" />
<rect x="722.3" y="532.0" width="3.4" height="3.6" fill="#e8502a" />
<rect x="722.3" y="537.0" width="3.4" height="3.6" fill="#e8502a" />
<rect x="726.6" y="532.0" width="3.4" height="3.6" fill="#e8502a" />
<rect x="726.6" y="537.0" width="3.4" height="3.6" fill="#e8502a" />
<rect x="730.9" y="532.0" width="3.4" height="3.6" fill="#e8502a" />
<rect x="730.9" y="537.0" width="3.4" height="3.6" fill="#e8502a" />
<rect x="735.2" y="532.0" width="3.4" height="3.6" fill="#e8502a" />
<rect x="735.2" y="537.0" width="3.4" height="3.6" fill="#e8502a" />
<rect x="739.5" y="532.0" width="3.4" height="3.6" fill="#e8502a" />
<rect x="739.5" y="537.0" width="3.4" height="3.6" fill="#e8502a" />
<rect x="743.8" y="532.0" width="3.4" height="3.6" fill="#e8502a" />
<rect x="743.8" y="537.0" width="3.4" height="3.6" fill="#e8502a" />
<rect x="748.1" y="532.0" width="3.4" height="3.6" fill="#e8502a" />
<rect x="748.1" y="537.0" width="3.4" height="3.6" fill="#e8502a" />
<rect x="752.4" y="532.0" width="3.4" height="3.6" fill="#e8502a" />
<rect x="752.4" y="537.0" width="3.4" height="3.6" fill="#e8502a" />
<rect x="756.7" y="532.0" width="3.4" height="3.6" fill="#e8502a" />
<rect x="756.7" y="537.0" width="3.4" height="3.6" fill="#e8502a" />
<rect x="731.0" y="515.0" width="4.0" height="5.0" fill="#e2602e" />
<rect x="731.0" y="521.5" width="4.0" height="5.0" fill="#e2602e" />
<rect x="736.5" y="515.0" width="4.0" height="5.0" fill="#e2602e" />
<rect x="736.5" y="521.5" width="4.0" height="5.0" fill="#e2602e" />
<rect x="742.0" y="515.0" width="4.0" height="5.0" fill="#e2602e" />
<rect x="742.0" y="521.5" width="4.0" height="5.0" fill="#e2602e" />
<rect x="747.5" y="515.0" width="4.0" height="5.0" fill="#e2602e" />
<rect x="747.5" y="521.5" width="4.0" height="5.0" fill="#e2602e" />
<rect x="723.0" y="547.0" width="18.0" height="10.0" fill="#fff" stroke="#a8d8d0" stroke-width="0.6"/>
<rect x="723.0" y="547.0" width="5.9" height="10.0" fill="#f01414" />
<rect x="735.1" y="547.0" width="5.9" height="10.0" fill="#f01414" />
<rect x="722.0" y="564.0" width="15.0" height="14.0" fill="#f01414" />
<rect x="720.0" y="564.0" width="2.0" height="2.5" fill="#f01414" />
<rect x="720.0" y="568.5" width="2.0" height="2.5" fill="#f01414" />
<rect x="720.0" y="573.0" width="2.0" height="2.5" fill="#f01414" />
<rect x="737.0" y="564.0" width="2.0" height="2.5" fill="#f01414" />
<rect x="737.0" y="568.5" width="2.0" height="2.5" fill="#f01414" />
<rect x="737.0" y="573.0" width="2.0" height="2.5" fill="#f01414" />
<rect x="742.5" y="566.0" width="8.0" height="18.0" fill="#f01414" />
<rect x="759.5" y="566.0" width="8.0" height="18.0" fill="#f01414" />
<rect x="750.0" y="545.0" width="8.0" height="8.0" fill="#f01414" />
<rect x="750.0" y="555.0" width="8.0" height="8.0" fill="#f01414" />
<rect x="760.5" y="545.0" width="8.0" height="8.0" fill="#f01414" />
<rect x="760.5" y="555.0" width="8.0" height="8.0" fill="#f01414" />
<rect x="733.0" y="554.0" width="4.0" height="4.0" fill="#e2602e" />
<rect x="733.0" y="560.0" width="4.0" height="4.0" fill="#e2602e" />
<rect x="741.0" y="554.0" width="4.0" height="4.0" fill="#e2602e" />
<rect x="741.0" y="560.0" width="4.0" height="4.0" fill="#e2602e" />
<rect x="762.0" y="518.0" width="4.0" height="4.5" fill="#e2602e" />
<rect x="762.0" y="524.0" width="4.0" height="4.5" fill="#e2602e" />
<rect x="762.0" y="530.0" width="4.0" height="4.5" fill="#e2602e" />
<rect x="767.0" y="518.0" width="4.0" height="4.5" fill="#e2602e" />
<rect x="767.0" y="524.0" width="4.0" height="4.5" fill="#e2602e" />
<rect x="767.0" y="530.0" width="4.0" height="4.5" fill="#e2602e" />
<rect x="771.0" y="547.0" width="5.0" height="8.0" fill="#f01414" />
<rect x="777.0" y="547.0" width="5.0" height="8.0" fill="#f01414" />
<rect x="771.0" y="558.0" width="7.0" height="10.0" fill="#f01414" />
<rect x="781.0" y="561.0" width="4.5" height="7.0" fill="#f01414" />
<rect x="786.5" y="561.0" width="4.5" height="7.0" fill="#f01414" />
<rect x="775.0" y="571.0" width="5.0" height="5.0" fill="#f01414" />
<rect x="775.0" y="577.0" width="5.0" height="5.0" fill="#f01414" />
<rect x="781.5" y="571.0" width="5.0" height="5.0" fill="#f01414" />
<rect x="781.5" y="577.0" width="5.0" height="5.0" fill="#f01414" />
<rect x="784.0" y="543.0" width="8.0" height="6.2" fill="#f01414" />
<rect x="784.0" y="554.2" width="8.0" height="6.2" fill="#f01414" />
<rect x="793.6" y="543.0" width="8.0" height="6.2" fill="#f01414" />
<rect x="793.6" y="554.2" width="8.0" height="6.2" fill="#f01414" />
<rect x="803.2" y="543.0" width="8.0" height="6.2" fill="#f01414" />
<rect x="803.2" y="554.2" width="8.0" height="6.2" fill="#f01414" />
<rect x="812.8" y="543.0" width="8.0" height="6.2" fill="#f01414" />
<rect x="812.8" y="554.2" width="8.0" height="6.2" fill="#f01414" />
<rect x="822.4" y="543.0" width="8.0" height="6.2" fill="#f01414" />
<rect x="822.4" y="554.2" width="8.0" height="6.2" fill="#f01414" />
<rect x="792.0" y="530.0" width="4.0" height="5.0" fill="#e2602e" />
<rect x="797.0" y="530.0" width="4.0" height="5.0" fill="#e2602e" />
<rect x="800.0" y="519.0" width="4.5" height="5.5" fill="#e2602e" />
<rect x="800.0" y="526.5" width="4.5" height="5.5" fill="#e2602e" />
<rect x="805.5" y="519.0" width="4.5" height="5.5" fill="#e2602e" />
<rect x="805.5" y="526.5" width="4.5" height="5.5" fill="#e2602e" />
<rect x="811.0" y="519.0" width="4.5" height="5.5" fill="#e2602e" />
<rect x="811.0" y="526.5" width="4.5" height="5.5" fill="#e2602e" />
<rect x="817.0" y="504.0" width="3.0" height="4.0" fill="#e2602e" />
<rect x="821.0" y="504.0" width="3.0" height="4.0" fill="#e2602e" />
<rect x="824.0" y="510.0" width="5.0" height="7.0" fill="#f01414" />
<rect x="830.0" y="510.0" width="5.0" height="7.0" fill="#f01414" />
<rect x="837.0" y="462.0" width="8.0" height="18.0" fill="#fff" stroke="#a8d8d0" stroke-width="0.6"/>
<rect x="837.0" y="462.0" width="8.0" height="5.9" fill="#f01414" />
<rect x="837.0" y="474.1" width="8.0" height="5.9" fill="#f01414" />
<rect x="848.0" y="461.0" width="19.0" height="25.0" fill="#fff" stroke="#a8d8d0" stroke-width="0.6"/>
<rect x="848.0" y="461.0" width="19.0" height="8.2" fill="#f01414" />
<rect x="848.0" y="477.8" width="19.0" height="8.2" fill="#f01414" />
<rect x="828.0" y="482.0" width="18.0" height="24.0" fill="#fff" stroke="#a8d8d0" stroke-width="0.6"/>
<rect x="828.0" y="482.0" width="18.0" height="7.9" fill="#f01414" />
<rect x="828.0" y="498.1" width="18.0" height="7.9" fill="#f01414" />
<rect x="857.0" y="487.0" width="4.0" height="7.0" fill="#e2602e" />
<rect x="861.5" y="487.0" width="4.0" height="7.0" fill="#e2602e" />
<rect x="866.0" y="487.0" width="4.0" height="7.0" fill="#e2602e" />
<rect x="856.0" y="503.0" width="6.0" height="6.0" fill="#f01414" />
<rect x="863.0" y="503.0" width="6.0" height="6.0" fill="#f01414" />
<rect x="856.0" y="514.5" width="6.0" height="6.0" fill="#f01414" />
<rect x="863.0" y="514.5" width="6.0" height="6.0" fill="#f01414" />
<rect x="824.0" y="510.0" width="7.0" height="7.0" fill="#f01414" />
<rect x="833.0" y="510.0" width="7.0" height="7.0" fill="#f01414" />
<rect x="822.0" y="519.0" width="26.0" height="19.0" fill="#fff" stroke="#a8d8d0" stroke-width="0.6"/>
<rect x="822.0" y="519.0" width="8.6" height="19.0" fill="#f01414" />
<rect x="839.4" y="519.0" width="8.6" height="19.0" fill="#f01414" />
<rect x="831.0" y="541.5" width="25.0" height="17.5" fill="#fff" stroke="#a8d8d0" stroke-width="0.6"/>
<rect x="831.0" y="541.5" width="8.2" height="17.5" fill="#f01414" />
<rect x="847.8" y="541.5" width="8.2" height="17.5" fill="#f01414" />
<rect x="860.0" y="537.0" width="6.0" height="5.0" fill="#e2602e" />
<rect x="860.0" y="543.0" width="6.0" height="5.0" fill="#e2602e" />
<rect x="860.0" y="549.0" width="6.0" height="5.0" fill="#e2602e" />
<rect x="838.0" y="562.0" width="8.0" height="17.0" fill="#fff" stroke="#a8d8d0" stroke-width="0.6"/>
<rect x="838.0" y="562.0" width="8.0" height="5.6" fill="#f01414" />
<rect x="838.0" y="573.4" width="8.0" height="5.6" fill="#f01414" />
<rect x="849.0" y="562.0" width="18.0" height="23.0" fill="#fff" stroke="#a8d8d0" stroke-width="0.6"/>
<rect x="849.0" y="562.0" width="18.0" height="7.6" fill="#f01414" />
<rect x="849.0" y="577.4" width="18.0" height="7.6" fill="#f01414" />
<rect x="871.0" y="554.6" width="7.0" height="15.0" fill="#fff" stroke="#a8d8d0" stroke-width="0.6"/>
<rect x="871.0" y="554.6" width="7.0" height="5.0" fill="#f01414" />
<rect x="871.0" y="564.6" width="7.0" height="5.0" fill="#f01414" />
<rect x="870.0" y="568.6" width="8.0" height="8.0" fill="#f01414" />
<rect x="880.0" y="568.6" width="8.0" height="8.0" fill="#f01414" />
<rect x="890.0" y="564.0" width="8.5" height="18.5" fill="#fff" stroke="#a8d8d0" stroke-width="0.6"/>
<rect x="890.0" y="564.0" width="8.5" height="6.1" fill="#f01414" />
<rect x="890.0" y="576.4" width="8.5" height="6.1" fill="#f01414" />
<rect x="900.0" y="555.5" width="4.5" height="6.0" fill="#f01414" />
<rect x="900.0" y="563.0" width="4.5" height="6.0" fill="#f01414" />
<rect x="905.3" y="555.5" width="4.5" height="6.0" fill="#f01414" />
<rect x="905.3" y="563.0" width="4.5" height="6.0" fill="#f01414" />
<rect x="910.6" y="555.5" width="4.5" height="6.0" fill="#f01414" />
<rect x="910.6" y="563.0" width="4.5" height="6.0" fill="#f01414" />
<rect x="915.9" y="555.5" width="4.5" height="6.0" fill="#f01414" />
<rect x="915.9" y="563.0" width="4.5" height="6.0" fill="#f01414" />
<rect x="921.2" y="555.5" width="4.5" height="6.0" fill="#f01414" />
<rect x="921.2" y="563.0" width="4.5" height="6.0" fill="#f01414" />
<rect x="899.0" y="577.0" width="4.5" height="7.0" fill="#e2602e" />
<rect x="904.0" y="577.0" width="4.5" height="7.0" fill="#e2602e" />
<rect x="909.0" y="577.0" width="4.5" height="7.0" fill="#e2602e" />
<rect x="914.0" y="577.0" width="4.5" height="7.0" fill="#e2602e" />
<rect x="919.0" y="577.0" width="4.5" height="7.0" fill="#e2602e" />
<rect x="929.0" y="553.7" width="4.0" height="4.0" fill="#e2602e" />
<rect x="929.0" y="559.2" width="4.0" height="4.0" fill="#e2602e" />
<rect x="929.0" y="564.7" width="4.0" height="4.0" fill="#e2602e" />
<rect x="934.0" y="553.7" width="4.0" height="4.0" fill="#e2602e" />
<rect x="934.0" y="559.2" width="4.0" height="4.0" fill="#e2602e" />
<rect x="934.0" y="564.7" width="4.0" height="4.0" fill="#e2602e" />
<rect x="939.0" y="553.7" width="4.0" height="4.0" fill="#e2602e" />
<rect x="939.0" y="559.2" width="4.0" height="4.0" fill="#e2602e" />
<rect x="939.0" y="564.7" width="4.0" height="4.0" fill="#e2602e" />
<rect x="944.0" y="553.7" width="4.0" height="4.0" fill="#e2602e" />
<rect x="944.0" y="559.2" width="4.0" height="4.0" fill="#e2602e" />
<rect x="944.0" y="564.7" width="4.0" height="4.0" fill="#e2602e" />
<rect x="933.0" y="520.0" width="15.0" height="29.0" fill="#fff" stroke="#a8d8d0" stroke-width="0.6"/>
<rect x="933.0" y="520.0" width="15.0" height="9.6" fill="#f01414" />
<rect x="933.0" y="539.4" width="15.0" height="9.6" fill="#f01414" />
<rect x="928.0" y="496.0" width="8.0" height="4.5" fill="#e2602e" />
<rect x="928.0" y="501.5" width="8.0" height="4.5" fill="#e2602e" />
<rect x="928.0" y="507.0" width="8.0" height="4.5" fill="#e2602e" />
<rect x="928.0" y="512.5" width="8.0" height="4.5" fill="#e2602e" />
<rect x="939.0" y="496.0" width="8.0" height="4.5" fill="#e2602e" />
<rect x="939.0" y="501.5" width="8.0" height="4.5" fill="#e2602e" />
<rect x="939.0" y="507.0" width="8.0" height="4.5" fill="#e2602e" />
<rect x="939.0" y="512.5" width="8.0" height="4.5" fill="#e2602e" />
<rect x="787.0" y="300.5" width="7.0" height="5.2" fill="#f01414" />
<rect x="787.0" y="306.8" width="7.0" height="5.2" fill="#f01414" />
<rect x="796.0" y="300.5" width="5.0" height="5.0" fill="#f01414" />
<rect x="796.0" y="306.5" width="5.0" height="5.0" fill="#f01414" />
<rect x="802.0" y="300.5" width="5.0" height="5.0" fill="#f01414" />
<rect x="802.0" y="306.5" width="5.0" height="5.0" fill="#f01414" />
<rect x="803.0" y="315.5" width="5.4" height="5.0" fill="#f01414" />
<rect x="809.6" y="315.5" width="5.4" height="5.0" fill="#f01414" />
<rect x="826.0" y="300.0" width="5.6" height="5.2" fill="#f01414" />
<rect x="826.0" y="306.3" width="5.6" height="5.2" fill="#f01414" />
<rect x="832.6" y="300.0" width="5.6" height="5.2" fill="#f01414" />
<rect x="832.6" y="306.3" width="5.6" height="5.2" fill="#f01414" />
<rect x="839.2" y="300.0" width="5.6" height="5.2" fill="#f01414" />
<rect x="839.2" y="306.3" width="5.6" height="5.2" fill="#f01414" />
<rect x="845.8" y="300.0" width="5.6" height="5.2" fill="#f01414" />
<rect x="845.8" y="306.3" width="5.6" height="5.2" fill="#f01414" />
<rect x="826.0" y="313.0" width="2.2" height="5.0" fill="#f01414" />
<rect x="829.4" y="313.0" width="2.2" height="5.0" fill="#f01414" />
<rect x="832.6" y="313.0" width="2.2" height="5.0" fill="#f01414" />
<rect x="836.0" y="313.0" width="2.2" height="5.0" fill="#f01414" />
<rect x="839.2" y="313.0" width="2.2" height="5.0" fill="#f01414" />
<rect x="842.6" y="313.0" width="2.2" height="5.0" fill="#f01414" />
<rect x="855.0" y="299.0" width="5.5" height="4.9" fill="#f01414" />
<rect x="855.0" y="305.1" width="5.5" height="4.9" fill="#f01414" />
<rect x="861.5" y="299.0" width="5.5" height="4.9" fill="#f01414" />
<rect x="861.5" y="305.1" width="5.5" height="4.9" fill="#f01414" />
<rect x="868.0" y="299.0" width="5.5" height="4.9" fill="#f01414" />
<rect x="868.0" y="305.1" width="5.5" height="4.9" fill="#f01414" />
<rect x="868.0" y="312.0" width="5.0" height="5.4" fill="#f01414" />
<rect x="868.0" y="318.6" width="5.0" height="5.4" fill="#f01414" />
<rect x="874.0" y="312.0" width="5.0" height="5.4" fill="#f01414" />
<rect x="874.0" y="318.6" width="5.0" height="5.4" fill="#f01414" />
<rect x="843.0" y="331.0" width="5.0" height="5.0" fill="#f01414" />
<rect x="856.0" y="329.0" width="5.0" height="5.0" fill="#f01414" />
<rect x="843.0" y="337.0" width="5.0" height="5.0" fill="#f01414" />
<rect x="856.0" y="335.0" width="5.0" height="5.0" fill="#f01414" />
<rect x="849.0" y="331.0" width="5.0" height="5.0" fill="#f01414" />
<rect x="862.0" y="329.0" width="5.0" height="5.0" fill="#f01414" />
<rect x="849.0" y="337.0" width="5.0" height="5.0" fill="#f01414" />
<rect x="862.0" y="335.0" width="5.0" height="5.0" fill="#f01414" />
<rect x="872.0" y="333.5" width="5.5" height="6.0" fill="#f01414" />
<rect x="878.5" y="333.5" width="5.5" height="6.0" fill="#f01414" />
<rect x="885.0" y="333.5" width="5.5" height="6.0" fill="#f01414" />
<rect x="891.5" y="333.5" width="5.5" height="6.0" fill="#f01414" />
<rect x="867.0" y="345.0" width="4.5" height="4.5" fill="#f01414" />
<rect x="873.0" y="345.0" width="4.5" height="4.5" fill="#f01414" />
<rect x="878.0" y="345.0" width="4.5" height="4.5" fill="#f01414" />
<rect x="873.0" y="351.0" width="4.5" height="4.5" fill="#f01414" />
<rect x="885.0" y="345.0" width="5.0" height="4.9" fill="#f01414" />
<rect x="885.0" y="351.1" width="5.0" height="4.9" fill="#f01414" />
<rect x="843.0" y="355.0" width="3.8" height="8.5" fill="#e0603a" />
<rect x="847.6" y="355.0" width="3.8" height="8.5" fill="#e0603a" />
<rect x="852.2" y="355.0" width="3.8" height="8.5" fill="#e0603a" />
<rect x="856.8" y="355.0" width="3.8" height="8.5" fill="#e0603a" />
<rect x="861.4" y="355.0" width="3.8" height="8.5" fill="#e0603a" />
<circle cx="834.2" cy="373.5" r="2.6" fill="#f01414" />
<circle cx="834.2" cy="379.7" r="2.6" fill="#f01414" />
<circle cx="834.2" cy="385.9" r="2.6" fill="#f01414" />
<circle cx="834.2" cy="392.1" r="2.6" fill="#f01414" />
<rect x="978.0" y="312.0" width="5.2" height="5.2" fill="#f01414" />
<rect x="985.0" y="312.0" width="5.2" height="5.2" fill="#f01414" />
<rect x="978.0" y="318.1" width="5.2" height="5.2" fill="#f01414" />
<rect x="985.0" y="318.1" width="5.2" height="5.2" fill="#f01414" />
<rect x="978.0" y="324.2" width="5.2" height="5.2" fill="#f01414" />
<rect x="985.0" y="324.2" width="5.2" height="5.2" fill="#f01414" />
<rect x="978.0" y="330.3" width="5.2" height="5.2" fill="#f01414" />
<rect x="985.0" y="330.3" width="5.2" height="5.2" fill="#f01414" />
<rect x="978.0" y="336.4" width="5.2" height="5.2" fill="#f01414" />
<rect x="985.0" y="336.4" width="5.2" height="5.2" fill="#f01414" />
<rect x="978.0" y="342.5" width="5.2" height="5.2" fill="#f01414" />
<rect x="985.0" y="342.5" width="5.2" height="5.2" fill="#f01414" />
<rect x="978.0" y="348.6" width="5.2" height="5.2" fill="#f01414" />
<rect x="985.0" y="348.6" width="5.2" height="5.2" fill="#f01414" />
<rect x="958.0" y="312.0" width="5.0" height="5.0" fill="#f01414" />
<rect x="964.0" y="318.0" width="5.0" height="5.0" fill="#f01414" />
<rect x="964.0" y="312.0" width="5.0" height="5.0" fill="#f01414" />
<rect x="970.0" y="318.0" width="5.0" height="5.0" fill="#f01414" />
<rect x="970.0" y="312.0" width="5.0" height="5.0" fill="#f01414" />
<rect x="964.0" y="341.0" width="5.5" height="5.5" fill="#f01414" />
<rect x="964.0" y="348.0" width="5.5" height="5.5" fill="#f01414" />
<rect x="970.5" y="341.0" width="5.5" height="5.5" fill="#f01414" />
<rect x="970.5" y="348.0" width="5.5" height="5.5" fill="#f01414" />
<g><rect x="631.0" y="306.0" width="4.2" height="4.2" fill="#f01a14"/><rect x="631.0" y="311.2" width="4.2" height="4.2" fill="#f01a14"/><rect x="640.5" y="306.0" width="4.2" height="4.2" fill="#f02a16"/><rect x="645.7" y="306.0" width="4.2" height="4.2" fill="#ea4a1e"/><rect x="640.5" y="311.2" width="4.2" height="4.2" fill="#e8602c"/><rect x="645.7" y="311.2" width="4.2" height="4.2" fill="#ee2418"/><rect x="650.0" y="306.0" width="4.2" height="4.2" fill="#e8602c"/><rect x="655.2" y="306.0" width="4.2" height="4.2" fill="#f01a14"/><rect x="650.0" y="311.2" width="4.2" height="4.2" fill="#f01e12"/><rect x="655.2" y="311.2" width="4.2" height="4.2" fill="#e8602c"/><rect x="659.5" y="306.0" width="4.2" height="4.2" fill="#e4582a"/><rect x="664.7" y="306.0" width="4.2" height="4.2" fill="#e8602c"/><rect x="659.5" y="311.2" width="4.2" height="4.2" fill="#f01a14"/><rect x="664.7" y="311.2" width="4.2" height="4.2" fill="#e8602c"/><rect x="669.0" y="306.0" width="4.2" height="4.2" fill="#e4582a"/><rect x="674.2" y="306.0" width="4.2" height="4.2" fill="#f01a14"/><rect x="669.0" y="311.2" width="4.2" height="4.2" fill="#f02a16"/><rect x="674.2" y="311.2" width="4.2" height="4.2" fill="#ee2418"/><rect x="678.5" y="306.0" width="4.2" height="4.2" fill="#f02a16"/><rect x="683.7" y="306.0" width="4.2" height="4.2" fill="#f02a16"/><rect x="678.5" y="311.2" width="4.2" height="4.2" fill="#f02a16"/><rect x="683.7" y="311.2" width="4.2" height="4.2" fill="#f02a16"/><rect x="631.0" y="315.5" width="4.2" height="4.2" fill="#f01a14"/><rect x="636.2" y="315.5" width="4.2" height="4.2" fill="#f02a16"/><rect x="631.0" y="320.7" width="4.2" height="4.2" fill="#f01e12"/><rect x="636.2" y="320.7" width="4.2" height="4.2" fill="#f01e12"/><rect x="640.5" y="315.5" width="4.2" height="4.2" fill="#f02a16"/><rect x="645.7" y="315.5" width="4.2" height="4.2" fill="#f01a14"/><rect x="650.0" y="315.5" width="4.2" height="4.2" fill="#e4582a"/><rect x="655.2" y="315.5" width="4.2" height="4.2" fill="#f01e12"/><rect x="650.0" y="320.7" width="4.2" height="4.2" fill="#f01a14"/><rect x="655.2" y="320.7" width="4.2" height="4.2" fill="#f01a14"/><rect x="659.5" y="315.5" width="4.2" height="4.2" fill="#e8602c"/><rect x="664.7" y="315.5" width="4.2" height="4.2" fill="#f01e12"/><rect x="659.5" y="320.7" width="4.2" height="4.2" fill="#e8602c"/><rect x="664.7" y="320.7" width="4.2" height="4.2" fill="#e4582a"/><rect x="669.0" y="315.5" width="4.2" height="4.2" fill="#e8602c"/><rect x="674.2" y="315.5" width="4.2" height="4.2" fill="#e4582a"/><rect x="678.5" y="315.5" width="4.2" height="4.2" fill="#ee2418"/><rect x="678.5" y="320.7" width="4.2" height="4.2" fill="#f01a14"/><rect x="631.0" y="325.0" width="4.2" height="4.2" fill="#f02a16"/><rect x="636.2" y="325.0" width="4.2" height="4.2" fill="#e4582a"/><rect x="640.5" y="325.0" width="4.2" height="4.2" fill="#ea4a1e"/><rect x="645.7" y="325.0" width="4.2" height="4.2" fill="#ee2418"/><rect x="650.0" y="325.0" width="4.2" height="4.2" fill="#e8602c"/><rect x="655.2" y="325.0" width="4.2" height="4.2" fill="#f02a16"/><rect x="659.5" y="325.0" width="4.2" height="4.2" fill="#f01a14"/><rect x="664.7" y="325.0" width="4.2" height="4.2" fill="#ea4a1e"/><rect x="669.0" y="325.0" width="4.2" height="4.2" fill="#ee2418"/><rect x="674.2" y="325.0" width="4.2" height="4.2" fill="#e8602c"/><rect x="678.5" y="325.0" width="4.2" height="4.2" fill="#e8602c"/><rect x="683.7" y="325.0" width="4.2" height="4.2" fill="#ea4a1e"/></g>
<g><rect x="612.0" y="339.0" width="4.2" height="4.2" fill="#e8602c"/><rect x="617.2" y="339.0" width="4.2" height="4.2" fill="#f01a14"/><rect x="612.0" y="344.2" width="4.2" height="4.2" fill="#f01a14"/><rect x="617.2" y="344.2" width="4.2" height="4.2" fill="#f02a16"/><rect x="621.6" y="339.0" width="4.2" height="4.2" fill="#f01a14"/><rect x="626.8" y="339.0" width="4.2" height="4.2" fill="#e8602c"/><rect x="621.6" y="344.2" width="4.2" height="4.2" fill="#e8602c"/><rect x="626.8" y="344.2" width="4.2" height="4.2" fill="#f01e12"/><rect x="640.8" y="339.0" width="4.2" height="4.2" fill="#e8602c"/><rect x="646.0" y="339.0" width="4.2" height="4.2" fill="#e8602c"/><rect x="640.8" y="344.2" width="4.2" height="4.2" fill="#ea4a1e"/><rect x="646.0" y="344.2" width="4.2" height="4.2" fill="#f01e12"/><rect x="650.4" y="339.0" width="4.2" height="4.2" fill="#e4582a"/><rect x="655.6" y="339.0" width="4.2" height="4.2" fill="#e4582a"/><rect x="650.4" y="344.2" width="4.2" height="4.2" fill="#f01e12"/><rect x="655.6" y="344.2" width="4.2" height="4.2" fill="#e4582a"/><rect x="660.0" y="339.0" width="4.2" height="4.2" fill="#f02a16"/><rect x="665.2" y="339.0" width="4.2" height="4.2" fill="#f02a16"/><rect x="669.6" y="339.0" width="4.2" height="4.2" fill="#f02a16"/><rect x="612.0" y="348.6" width="4.2" height="4.2" fill="#e8602c"/><rect x="617.2" y="348.6" width="4.2" height="4.2" fill="#ee2418"/><rect x="612.0" y="353.8" width="4.2" height="4.2" fill="#ee2418"/><rect x="617.2" y="353.8" width="4.2" height="4.2" fill="#ee2418"/><rect x="621.6" y="348.6" width="4.2" height="4.2" fill="#ea4a1e"/><rect x="626.8" y="348.6" width="4.2" height="4.2" fill="#ee2418"/><rect x="631.2" y="348.6" width="4.2" height="4.2" fill="#f02a16"/><rect x="631.2" y="353.8" width="4.2" height="4.2" fill="#ee2418"/><rect x="640.8" y="348.6" width="4.2" height="4.2" fill="#f01e12"/><rect x="646.0" y="348.6" width="4.2" height="4.2" fill="#e4582a"/><rect x="640.8" y="353.8" width="4.2" height="4.2" fill="#f01a14"/><rect x="646.0" y="353.8" width="4.2" height="4.2" fill="#f01e12"/><rect x="650.4" y="348.6" width="4.2" height="4.2" fill="#f01a14"/><rect x="655.6" y="348.6" width="4.2" height="4.2" fill="#f01a14"/><rect x="650.4" y="353.8" width="4.2" height="4.2" fill="#e8602c"/><rect x="655.6" y="353.8" width="4.2" height="4.2" fill="#e4582a"/><rect x="660.0" y="348.6" width="4.2" height="4.2" fill="#f02a16"/><rect x="660.0" y="353.8" width="4.2" height="4.2" fill="#f01a14"/><rect x="612.0" y="358.2" width="4.2" height="4.2" fill="#ee2418"/><rect x="617.2" y="358.2" width="4.2" height="4.2" fill="#ea4a1e"/><rect x="612.0" y="363.4" width="4.2" height="4.2" fill="#e4582a"/><rect x="617.2" y="363.4" width="4.2" height="4.2" fill="#ea4a1e"/><rect x="621.6" y="358.2" width="4.2" height="4.2" fill="#f02a16"/><rect x="626.8" y="358.2" width="4.2" height="4.2" fill="#ea4a1e"/><rect x="621.6" y="363.4" width="4.2" height="4.2" fill="#e4582a"/><rect x="626.8" y="363.4" width="4.2" height="4.2" fill="#ee2418"/><rect x="631.2" y="358.2" width="4.2" height="4.2" fill="#e4582a"/><rect x="636.4" y="358.2" width="4.2" height="4.2" fill="#e4582a"/><rect x="640.8" y="358.2" width="4.2" height="4.2" fill="#f01a14"/><rect x="646.0" y="358.2" width="4.2" height="4.2" fill="#f01e12"/><rect x="640.8" y="363.4" width="4.2" height="4.2" fill="#ea4a1e"/><rect x="646.0" y="363.4" width="4.2" height="4.2" fill="#f01e12"/><rect x="650.4" y="358.2" width="4.2" height="4.2" fill="#f01a14"/><rect x="655.6" y="358.2" width="4.2" height="4.2" fill="#f02a16"/><rect x="650.4" y="363.4" width="4.2" height="4.2" fill="#f02a16"/><rect x="655.6" y="363.4" width="4.2" height="4.2" fill="#ee2418"/><rect x="660.0" y="358.2" width="4.2" height="4.2" fill="#f01a14"/><rect x="665.2" y="358.2" width="4.2" height="4.2" fill="#ea4a1e"/><rect x="669.6" y="358.2" width="4.2" height="4.2" fill="#e4582a"/><rect x="669.6" y="363.4" width="4.2" height="4.2" fill="#f01a14"/><rect x="621.6" y="367.8" width="4.2" height="4.2" fill="#ee2418"/><rect x="626.8" y="367.8" width="4.2" height="4.2" fill="#ea4a1e"/><rect x="631.2" y="367.8" width="4.2" height="4.2" fill="#f01a14"/><rect x="636.4" y="367.8" width="4.2" height="4.2" fill="#e4582a"/><rect x="631.2" y="373.0" width="4.2" height="4.2" fill="#e8602c"/><rect x="636.4" y="373.0" width="4.2" height="4.2" fill="#ea4a1e"/><rect x="640.8" y="367.8" width="4.2" height="4.2" fill="#f01a14"/><rect x="640.8" y="373.0" width="4.2" height="4.2" fill="#e4582a"/><rect x="650.4" y="367.8" width="4.2" height="4.2" fill="#ee2418"/><rect x="655.6" y="367.8" width="4.2" height="4.2" fill="#f01e12"/><rect x="650.4" y="373.0" width="4.2" height="4.2" fill="#ea4a1e"/><rect x="655.6" y="373.0" width="4.2" height="4.2" fill="#f01a14"/><rect x="660.0" y="367.8" width="4.2" height="4.2" fill="#f01e12"/><rect x="660.0" y="373.0" width="4.2" height="4.2" fill="#f02a16"/><rect x="669.6" y="367.8" width="4.2" height="4.2" fill="#f01e12"/><rect x="612.0" y="377.4" width="4.2" height="4.2" fill="#f02a16"/><rect x="617.2" y="377.4" width="4.2" height="4.2" fill="#f01e12"/><rect x="612.0" y="382.6" width="4.2" height="4.2" fill="#ea4a1e"/><rect x="617.2" y="382.6" width="4.2" height="4.2" fill="#f02a16"/><rect x="621.6" y="377.4" width="4.2" height="4.2" fill="#e4582a"/><rect x="626.8" y="377.4" width="4.2" height="4.2" fill="#e4582a"/><rect x="621.6" y="382.6" width="4.2" height="4.2" fill="#e4582a"/><rect x="626.8" y="382.6" width="4.2" height="4.2" fill="#f02a16"/><rect x="631.2" y="377.4" width="4.2" height="4.2" fill="#f01e12"/><rect x="631.2" y="382.6" width="4.2" height="4.2" fill="#e8602c"/><rect x="640.8" y="377.4" width="4.2" height="4.2" fill="#e8602c"/><rect x="646.0" y="377.4" width="4.2" height="4.2" fill="#ee2418"/><rect x="640.8" y="382.6" width="4.2" height="4.2" fill="#e8602c"/><rect x="646.0" y="382.6" width="4.2" height="4.2" fill="#f01a14"/><rect x="660.0" y="377.4" width="4.2" height="4.2" fill="#e8602c"/><rect x="665.2" y="377.4" width="4.2" height="4.2" fill="#e4582a"/><rect x="669.6" y="377.4" width="4.2" height="4.2" fill="#f01a14"/><rect x="669.6" y="382.6" width="4.2" height="4.2" fill="#ea4a1e"/></g>
<g><rect x="748.0" y="377.0" width="4.0" height="4.0" fill="#e4582a"/><rect x="757.2" y="377.0" width="4.0" height="4.0" fill="#ea4a1e"/><rect x="748.0" y="381.6" width="4.0" height="4.0" fill="#ee2418"/><rect x="752.6" y="381.6" width="4.0" height="4.0" fill="#f02a16"/><rect x="757.2" y="381.6" width="4.0" height="4.0" fill="#ee2418"/><rect x="748.0" y="386.2" width="4.0" height="4.0" fill="#e8602c"/><rect x="752.6" y="386.2" width="4.0" height="4.0" fill="#e4582a"/><rect x="761.8" y="386.2" width="4.0" height="4.0" fill="#ee2418"/></g>
<g><rect x="724.0" y="373.0" width="4.0" height="4.0" fill="#ea4a1e"/><rect x="733.2" y="373.0" width="4.0" height="4.0" fill="#ea4a1e"/><rect x="733.2" y="377.6" width="4.0" height="4.0" fill="#e4582a"/><rect x="724.0" y="382.2" width="4.0" height="4.0" fill="#ea4a1e"/><rect x="728.6" y="382.2" width="4.0" height="4.0" fill="#f02a16"/><rect x="733.2" y="382.2" width="4.0" height="4.0" fill="#ea4a1e"/></g>
<g><rect x="826.0" y="354.0" width="4.0" height="4.0" fill="#f01e12"/><rect x="830.6" y="354.0" width="4.0" height="4.0" fill="#e4582a"/><rect x="835.2" y="354.0" width="4.0" height="4.0" fill="#e8602c"/><rect x="839.8" y="354.0" width="4.0" height="4.0" fill="#ea4a1e"/><rect x="844.4" y="354.0" width="4.0" height="4.0" fill="#e4582a"/><rect x="826.0" y="358.6" width="4.0" height="4.0" fill="#e8602c"/><rect x="830.6" y="358.6" width="4.0" height="4.0" fill="#ee2418"/><rect x="835.2" y="358.6" width="4.0" height="4.0" fill="#f01e12"/><rect x="839.8" y="358.6" width="4.0" height="4.0" fill="#ea4a1e"/><rect x="844.4" y="358.6" width="4.0" height="4.0" fill="#f01a14"/></g>
<g><rect x="801.0" y="372.0" width="4.0" height="4.0" fill="#e8602c"/><rect x="805.6" y="372.0" width="4.0" height="4.0" fill="#e8602c"/><rect x="810.2" y="372.0" width="4.0" height="4.0" fill="#e4582a"/><rect x="814.8" y="372.0" width="4.0" height="4.0" fill="#e4582a"/><rect x="819.4" y="372.0" width="4.0" height="4.0" fill="#e8602c"/><rect x="801.0" y="376.6" width="4.0" height="4.0" fill="#f01a14"/><rect x="805.6" y="376.6" width="4.0" height="4.0" fill="#e8602c"/><rect x="810.2" y="376.6" width="4.0" height="4.0" fill="#e4582a"/><rect x="814.8" y="376.6" width="4.0" height="4.0" fill="#ea4a1e"/><rect x="819.4" y="376.6" width="4.0" height="4.0" fill="#f01a14"/><rect x="801.0" y="381.2" width="4.0" height="4.0" fill="#f01a14"/><rect x="810.2" y="381.2" width="4.0" height="4.0" fill="#f01e12"/><rect x="814.8" y="381.2" width="4.0" height="4.0" fill="#f01a14"/><rect x="819.4" y="381.2" width="4.0" height="4.0" fill="#e8602c"/><rect x="801.0" y="385.8" width="4.0" height="4.0" fill="#e4582a"/><rect x="805.6" y="385.8" width="4.0" height="4.0" fill="#e4582a"/><rect x="810.2" y="385.8" width="4.0" height="4.0" fill="#ea4a1e"/><rect x="814.8" y="385.8" width="4.0" height="4.0" fill="#e4582a"/><rect x="819.4" y="385.8" width="4.0" height="4.0" fill="#ee2418"/></g>
<g><rect x="1008.6" y="300.0" width="4.0" height="4.0" fill="#e4582a"/><rect x="1017.8" y="300.0" width="4.0" height="4.0" fill="#e4582a"/><rect x="1022.4" y="300.0" width="4.0" height="4.0" fill="#ee2418"/></g>
<g><rect x="867.0" y="456.0" width="4.0" height="4.0" fill="#ea4a1e"/><rect x="867.0" y="460.6" width="4.0" height="4.0" fill="#e4582a"/><rect x="871.6" y="456.0" width="4.0" height="4.0" fill="#f02a16"/><rect x="871.6" y="460.6" width="4.0" height="4.0" fill="#e8602c"/><rect x="876.2" y="456.0" width="4.0" height="4.0" fill="#f01a14"/><rect x="876.2" y="460.6" width="4.0" height="4.0" fill="#e8602c"/><rect x="880.8" y="456.0" width="4.0" height="4.0" fill="#f02a16"/><rect x="880.8" y="460.6" width="4.0" height="4.0" fill="#e8602c"/><rect x="885.4" y="456.0" width="4.0" height="4.0" fill="#f01a14"/><rect x="890.0" y="456.0" width="4.0" height="4.0" fill="#f02a16"/><rect x="903.8" y="460.6" width="4.0" height="4.0" fill="#e8602c"/><rect x="913.0" y="456.0" width="4.0" height="4.0" fill="#f02a16"/><rect x="913.0" y="460.6" width="4.0" height="4.0" fill="#f02a16"/><rect x="917.6" y="456.0" width="4.0" height="4.0" fill="#f01a14"/><rect x="917.6" y="460.6" width="4.0" height="4.0" fill="#ee2418"/><rect x="922.2" y="456.0" width="4.0" height="4.0" fill="#f02a16"/><rect x="922.2" y="460.6" width="4.0" height="4.0" fill="#e4582a"/><rect x="867.0" y="465.2" width="4.0" height="4.0" fill="#f01a14"/><rect x="867.0" y="469.8" width="4.0" height="4.0" fill="#ee2418"/><rect x="871.6" y="465.2" width="4.0" height="4.0" fill="#f01a14"/><rect x="871.6" y="469.8" width="4.0" height="4.0" fill="#f01a14"/><rect x="876.2" y="465.2" width="4.0" height="4.0" fill="#ea4a1e"/><rect x="880.8" y="465.2" width="4.0" height="4.0" fill="#ea4a1e"/><rect x="885.4" y="465.2" width="4.0" height="4.0" fill="#e4582a"/><rect x="885.4" y="469.8" width="4.0" height="4.0" fill="#ee2418"/><rect x="890.0" y="465.2" width="4.0" height="4.0" fill="#e4582a"/><rect x="890.0" y="469.8" width="4.0" height="4.0" fill="#ee2418"/><rect x="894.6" y="465.2" width="4.0" height="4.0" fill="#e4582a"/><rect x="894.6" y="469.8" width="4.0" height="4.0" fill="#e4582a"/><rect x="903.8" y="465.2" width="4.0" height="4.0" fill="#ea4a1e"/><rect x="913.0" y="465.2" width="4.0" height="4.0" fill="#f01a14"/><rect x="913.0" y="469.8" width="4.0" height="4.0" fill="#ea4a1e"/><rect x="917.6" y="465.2" width="4.0" height="4.0" fill="#ee2418"/><rect x="917.6" y="469.8" width="4.0" height="4.0" fill="#f01a14"/><rect x="922.2" y="465.2" width="4.0" height="4.0" fill="#f01e12"/><rect x="931.4" y="465.2" width="4.0" height="4.0" fill="#ea4a1e"/><rect x="931.4" y="469.8" width="4.0" height="4.0" fill="#f01e12"/><rect x="936.0" y="469.8" width="4.0" height="4.0" fill="#e4582a"/><rect x="867.0" y="474.4" width="4.0" height="4.0" fill="#f01a14"/><rect x="867.0" y="479.0" width="4.0" height="4.0" fill="#e8602c"/><rect x="876.2" y="474.4" width="4.0" height="4.0" fill="#e8602c"/><rect x="880.8" y="474.4" width="4.0" height="4.0" fill="#f01a14"/><rect x="885.4" y="474.4" width="4.0" height="4.0" fill="#f01e12"/><rect x="894.6" y="474.4" width="4.0" height="4.0" fill="#ea4a1e"/><rect x="899.2" y="474.4" width="4.0" height="4.0" fill="#f01e12"/><rect x="903.8" y="474.4" width="4.0" height="4.0" fill="#ee2418"/><rect x="903.8" y="479.0" width="4.0" height="4.0" fill="#ea4a1e"/><rect x="908.4" y="474.4" width="4.0" height="4.0" fill="#f02a16"/><rect x="908.4" y="479.0" width="4.0" height="4.0" fill="#e4582a"/><rect x="913.0" y="474.4" width="4.0" height="4.0" fill="#e8602c"/><rect x="913.0" y="479.0" width="4.0" height="4.0" fill="#ee2418"/><rect x="917.6" y="474.4" width="4.0" height="4.0" fill="#e4582a"/><rect x="917.6" y="479.0" width="4.0" height="4.0" fill="#f01e12"/><rect x="931.4" y="474.4" width="4.0" height="4.0" fill="#f01e12"/><rect x="931.4" y="479.0" width="4.0" height="4.0" fill="#f01a14"/><rect x="936.0" y="474.4" width="4.0" height="4.0" fill="#f01e12"/><rect x="936.0" y="479.0" width="4.0" height="4.0" fill="#f02a16"/><rect x="867.0" y="483.6" width="4.0" height="4.0" fill="#f01a14"/><rect x="867.0" y="488.2" width="4.0" height="4.0" fill="#ee2418"/><rect x="871.6" y="483.6" width="4.0" height="4.0" fill="#ee2418"/><rect x="871.6" y="488.2" width="4.0" height="4.0" fill="#f01a14"/><rect x="876.2" y="483.6" width="4.0" height="4.0" fill="#f01a14"/><rect x="885.4" y="483.6" width="4.0" height="4.0" fill="#e4582a"/><rect x="885.4" y="488.2" width="4.0" height="4.0" fill="#f01e12"/><rect x="890.0" y="483.6" width="4.0" height="4.0" fill="#e4582a"/><rect x="890.0" y="488.2" width="4.0" height="4.0" fill="#f01e12"/><rect x="894.6" y="483.6" width="4.0" height="4.0" fill="#f01a14"/><rect x="894.6" y="488.2" width="4.0" height="4.0" fill="#e4582a"/><rect x="903.8" y="483.6" width="4.0" height="4.0" fill="#ee2418"/><rect x="903.8" y="488.2" width="4.0" height="4.0" fill="#e4582a"/><rect x="913.0" y="483.6" width="4.0" height="4.0" fill="#f02a16"/><rect x="913.0" y="488.2" width="4.0" height="4.0" fill="#f02a16"/><rect x="917.6" y="488.2" width="4.0" height="4.0" fill="#e4582a"/><rect x="922.2" y="483.6" width="4.0" height="4.0" fill="#ea4a1e"/><rect x="922.2" y="488.2" width="4.0" height="4.0" fill="#e4582a"/><rect x="926.8" y="483.6" width="4.0" height="4.0" fill="#e8602c"/><rect x="926.8" y="488.2" width="4.0" height="4.0" fill="#f01a14"/><rect x="931.4" y="483.6" width="4.0" height="4.0" fill="#e4582a"/><rect x="931.4" y="488.2" width="4.0" height="4.0" fill="#e4582a"/></g>
<g><rect x="640.6" y="583.0" width="4.0" height="4.0" fill="#ee2418"/><rect x="645.2" y="583.0" width="4.0" height="4.0" fill="#e8602c"/><rect x="654.4" y="583.0" width="4.0" height="4.0" fill="#e8602c"/><rect x="663.6" y="583.0" width="4.0" height="4.0" fill="#e8602c"/><rect x="668.2" y="583.0" width="4.0" height="4.0" fill="#ea4a1e"/><rect x="672.8" y="583.0" width="4.0" height="4.0" fill="#e4582a"/><rect x="636.0" y="587.6" width="4.0" height="4.0" fill="#f01a14"/><rect x="640.6" y="587.6" width="4.0" height="4.0" fill="#f02a16"/><rect x="645.2" y="587.6" width="4.0" height="4.0" fill="#e4582a"/><rect x="649.8" y="587.6" width="4.0" height="4.0" fill="#f01e12"/><rect x="654.4" y="587.6" width="4.0" height="4.0" fill="#f02a16"/><rect x="659.0" y="587.6" width="4.0" height="4.0" fill="#e8602c"/><rect x="663.6" y="587.6" width="4.0" height="4.0" fill="#f02a16"/><rect x="668.2" y="587.6" width="4.0" height="4.0" fill="#ee2418"/><rect x="672.8" y="587.6" width="4.0" height="4.0" fill="#f01e12"/></g>
<rect x="798.0" y="403.0" width="3.5" height="4.5" fill="#e0602e" />
<rect x="802.5" y="403.0" width="3.5" height="4.5" fill="#e0602e" />
<rect x="813.0" y="405.0" width="3.6" height="5.0" fill="#e0602e" />
<rect x="817.5" y="405.0" width="3.6" height="5.0" fill="#e0602e" />
<rect x="822.0" y="405.0" width="3.6" height="5.0" fill="#e0602e" />
<rect x="826.5" y="405.0" width="3.6" height="5.0" fill="#e0602e" />
<rect x="821.0" y="412.0" width="4.0" height="5.0" fill="#e0602e" />
<rect x="826.0" y="412.0" width="4.0" height="5.0" fill="#e0602e" />
<rect x="821.0" y="434.0" width="4.0" height="5.0" fill="#e0602e" />
<rect x="826.0" y="434.0" width="4.0" height="5.0" fill="#e0602e" />
<rect x="819.5" y="440.0" width="5.0" height="4.0" fill="#e0602e" />
<rect x="819.5" y="445.0" width="5.0" height="4.0" fill="#e0602e" />
<rect x="819.5" y="450.0" width="5.0" height="4.0" fill="#e0602e" />
<rect x="819.5" y="455.0" width="5.0" height="4.0" fill="#e0602e" />
<rect x="820.0" y="462.0" width="5.0" height="4.0" fill="#e0602e" />
<rect x="820.0" y="467.0" width="5.0" height="4.0" fill="#e0602e" />
<rect x="817.0" y="476.0" width="4.0" height="5.0" fill="#e0602e" />
<rect x="817.0" y="482.0" width="4.0" height="5.0" fill="#e0602e" />
<rect x="816.0" y="496.0" width="4.0" height="4.0" fill="#e0602e" />
<rect x="816.0" y="501.0" width="4.0" height="4.0" fill="#e0602e" />
<rect x="816.0" y="506.0" width="4.0" height="4.0" fill="#e0602e" />
<g><rect x="950.0" y="399.0" width="4.2" height="4.2" fill="#f02a16"/><rect x="955.2" y="399.0" width="4.2" height="4.2" fill="#f02a16"/><rect x="950.0" y="404.2" width="4.2" height="4.2" fill="#e4582a"/><rect x="955.2" y="404.2" width="4.2" height="4.2" fill="#f01e12"/><rect x="960.0" y="399.0" width="4.2" height="4.2" fill="#ee2418"/><rect x="965.2" y="399.0" width="4.2" height="4.2" fill="#f01e12"/><rect x="960.0" y="404.2" width="4.2" height="4.2" fill="#ee2418"/><rect x="965.2" y="404.2" width="4.2" height="4.2" fill="#ee2418"/><rect x="970.0" y="399.0" width="4.2" height="4.2" fill="#ea4a1e"/><rect x="975.2" y="399.0" width="4.2" height="4.2" fill="#f02a16"/><rect x="970.0" y="404.2" width="4.2" height="4.2" fill="#ee2418"/><rect x="975.2" y="404.2" width="4.2" height="4.2" fill="#ee2418"/><rect x="980.0" y="399.0" width="4.2" height="4.2" fill="#f02a16"/><rect x="985.2" y="399.0" width="4.2" height="4.2" fill="#f01e12"/><rect x="980.0" y="404.2" width="4.2" height="4.2" fill="#f01a14"/><rect x="985.2" y="404.2" width="4.2" height="4.2" fill="#ee2418"/><rect x="1000.0" y="399.0" width="4.2" height="4.2" fill="#ee2418"/><rect x="1000.0" y="404.2" width="4.2" height="4.2" fill="#ee2418"/><rect x="1010.0" y="399.0" width="4.2" height="4.2" fill="#f02a16"/><rect x="1010.0" y="404.2" width="4.2" height="4.2" fill="#e8602c"/><rect x="1015.2" y="399.0" width="4.2" height="4.2" fill="#f02a16"/><rect x="1015.2" y="404.2" width="4.2" height="4.2" fill="#ee2418"/><rect x="1020.4" y="399.0" width="4.2" height="4.2" fill="#f01a14"/><rect x="1020.4" y="404.2" width="4.2" height="4.2" fill="#f01e12"/><rect x="1030.0" y="399.0" width="4.2" height="4.2" fill="#e8602c"/><rect x="1030.0" y="404.2" width="4.2" height="4.2" fill="#f01a14"/><rect x="1040.0" y="399.0" width="4.2" height="4.2" fill="#e4582a"/><rect x="1040.0" y="404.2" width="4.2" height="4.2" fill="#e8602c"/><rect x="1040.0" y="409.4" width="4.2" height="4.2" fill="#f01e12"/><rect x="1045.2" y="399.0" width="4.2" height="4.2" fill="#ee2418"/><rect x="1045.2" y="404.2" width="4.2" height="4.2" fill="#ea4a1e"/><rect x="1045.2" y="409.4" width="4.2" height="4.2" fill="#f01e12"/><rect x="1050.0" y="399.0" width="4.2" height="4.2" fill="#ee2418"/><rect x="1055.2" y="399.0" width="4.2" height="4.2" fill="#f02a16"/><rect x="1050.0" y="404.2" width="4.2" height="4.2" fill="#ea4a1e"/><rect x="1055.2" y="404.2" width="4.2" height="4.2" fill="#f01e12"/><rect x="1060.0" y="399.0" width="4.2" height="4.2" fill="#ee2418"/><rect x="1060.0" y="404.2" width="4.2" height="4.2" fill="#e4582a"/><rect x="1065.2" y="399.0" width="4.2" height="4.2" fill="#e8602c"/><rect x="1065.2" y="404.2" width="4.2" height="4.2" fill="#f01e12"/><rect x="1070.4" y="399.0" width="4.2" height="4.2" fill="#ea4a1e"/><rect x="1070.4" y="404.2" width="4.2" height="4.2" fill="#ea4a1e"/><rect x="1070.0" y="399.0" width="4.2" height="4.2" fill="#e4582a"/><rect x="1070.0" y="404.2" width="4.2" height="4.2" fill="#ee2418"/><rect x="1080.0" y="399.0" width="4.2" height="4.2" fill="#e4582a"/><rect x="1080.0" y="404.2" width="4.2" height="4.2" fill="#f01e12"/><rect x="1015.2" y="409.0" width="4.2" height="4.2" fill="#ee2418"/><rect x="1015.2" y="414.2" width="4.2" height="4.2" fill="#f02a16"/><rect x="1020.4" y="409.0" width="4.2" height="4.2" fill="#e4582a"/><rect x="1020.4" y="414.2" width="4.2" height="4.2" fill="#e8602c"/><rect x="1020.0" y="409.0" width="4.2" height="4.2" fill="#ea4a1e"/><rect x="1025.2" y="409.0" width="4.2" height="4.2" fill="#e4582a"/><rect x="1020.0" y="414.2" width="4.2" height="4.2" fill="#e8602c"/><rect x="1025.2" y="414.2" width="4.2" height="4.2" fill="#ea4a1e"/><rect x="1030.0" y="409.0" width="4.2" height="4.2" fill="#ee2418"/><rect x="1030.0" y="414.2" width="4.2" height="4.2" fill="#f01e12"/><rect x="1030.0" y="419.4" width="4.2" height="4.2" fill="#f02a16"/><rect x="1035.2" y="409.0" width="4.2" height="4.2" fill="#e4582a"/><rect x="1035.2" y="414.2" width="4.2" height="4.2" fill="#f01a14"/><rect x="1035.2" y="419.4" width="4.2" height="4.2" fill="#e8602c"/><rect x="1040.0" y="409.0" width="4.2" height="4.2" fill="#f01a14"/><rect x="1045.2" y="409.0" width="4.2" height="4.2" fill="#f02a16"/><rect x="1040.0" y="414.2" width="4.2" height="4.2" fill="#ea4a1e"/><rect x="1045.2" y="414.2" width="4.2" height="4.2" fill="#ee2418"/><rect x="1050.0" y="409.0" width="4.2" height="4.2" fill="#ee2418"/><rect x="1050.0" y="414.2" width="4.2" height="4.2" fill="#ea4a1e"/><rect x="1050.0" y="419.4" width="4.2" height="4.2" fill="#f02a16"/><rect x="1055.2" y="409.0" width="4.2" height="4.2" fill="#f01a14"/><rect x="1055.2" y="414.2" width="4.2" height="4.2" fill="#e4582a"/><rect x="1055.2" y="419.4" width="4.2" height="4.2" fill="#ea4a1e"/><rect x="1060.0" y="409.0" width="4.2" height="4.2" fill="#f01e12"/><rect x="1065.2" y="409.0" width="4.2" height="4.2" fill="#e8602c"/><rect x="1060.0" y="414.2" width="4.2" height="4.2" fill="#ea4a1e"/><rect x="1065.2" y="414.2" width="4.2" height="4.2" fill="#f01a14"/><rect x="1070.0" y="409.0" width="4.2" height="4.2" fill="#f02a16"/><rect x="1070.0" y="414.2" width="4.2" height="4.2" fill="#ea4a1e"/><rect x="1070.0" y="419.4" width="4.2" height="4.2" fill="#f02a16"/><rect x="1075.2" y="409.0" width="4.2" height="4.2" fill="#e8602c"/><rect x="1075.2" y="414.2" width="4.2" height="4.2" fill="#f01e12"/><rect x="1075.2" y="419.4" width="4.2" height="4.2" fill="#e8602c"/><rect x="1080.0" y="409.0" width="4.2" height="4.2" fill="#ee2418"/><rect x="1080.0" y="414.2" width="4.2" height="4.2" fill="#e8602c"/><rect x="1015.2" y="419.0" width="4.2" height="4.2" fill="#f01a14"/><rect x="1020.0" y="419.0" width="4.2" height="4.2" fill="#e8602c"/><rect x="1020.0" y="424.2" width="4.2" height="4.2" fill="#ea4a1e"/><rect x="1025.2" y="419.0" width="4.2" height="4.2" fill="#ee2418"/><rect x="1025.2" y="424.2" width="4.2" height="4.2" fill="#e4582a"/><rect x="1030.4" y="419.0" width="4.2" height="4.2" fill="#e8602c"/><rect x="1030.4" y="424.2" width="4.2" height="4.2" fill="#e8602c"/><rect x="1030.0" y="419.0" width="4.2" height="4.2" fill="#e4582a"/><rect x="1035.2" y="419.0" width="4.2" height="4.2" fill="#f01a14"/><rect x="1030.0" y="424.2" width="4.2" height="4.2" fill="#e4582a"/><rect x="1035.2" y="424.2" width="4.2" height="4.2" fill="#e4582a"/><rect x="1040.0" y="419.0" width="4.2" height="4.2" fill="#f01e12"/><rect x="1040.0" y="424.2" width="4.2" height="4.2" fill="#ea4a1e"/><rect x="1050.0" y="419.0" width="4.2" height="4.2" fill="#ee2418"/><rect x="1050.0" y="424.2" width="4.2" height="4.2" fill="#f02a16"/><rect x="1050.0" y="429.4" width="4.2" height="4.2" fill="#f01e12"/><rect x="1055.2" y="419.0" width="4.2" height="4.2" fill="#f01e12"/><rect x="1055.2" y="424.2" width="4.2" height="4.2" fill="#e4582a"/><rect x="1055.2" y="429.4" width="4.2" height="4.2" fill="#e4582a"/><rect x="1060.0" y="419.0" width="4.2" height="4.2" fill="#e8602c"/><rect x="1060.0" y="424.2" width="4.2" height="4.2" fill="#f02a16"/><rect x="1070.0" y="419.0" width="4.2" height="4.2" fill="#ee2418"/><rect x="1070.0" y="424.2" width="4.2" height="4.2" fill="#e4582a"/><rect x="1075.2" y="419.0" width="4.2" height="4.2" fill="#e4582a"/><rect x="1075.2" y="424.2" width="4.2" height="4.2" fill="#e8602c"/><rect x="1080.0" y="419.0" width="4.2" height="4.2" fill="#ee2418"/><rect x="1080.0" y="424.2" width="4.2" height="4.2" fill="#f02a16"/><rect x="1080.0" y="429.4" width="4.2" height="4.2" fill="#f01e12"/><rect x="1015.2" y="429.0" width="4.2" height="4.2" fill="#f01a14"/><rect x="1015.2" y="434.2" width="4.2" height="4.2" fill="#f01e12"/><rect x="1020.4" y="429.0" width="4.2" height="4.2" fill="#f02a16"/><rect x="1020.4" y="434.2" width="4.2" height="4.2" fill="#ee2418"/><rect x="1040.0" y="429.0" width="4.2" height="4.2" fill="#ea4a1e"/><rect x="1040.0" y="434.2" width="4.2" height="4.2" fill="#f02a16"/><rect x="1040.0" y="439.4" width="4.2" height="4.2" fill="#e4582a"/><rect x="1045.2" y="429.0" width="4.2" height="4.2" fill="#ee2418"/><rect x="1045.2" y="434.2" width="4.2" height="4.2" fill="#ea4a1e"/><rect x="1045.2" y="439.4" width="4.2" height="4.2" fill="#e4582a"/><rect x="1050.0" y="429.0" width="4.2" height="4.2" fill="#f01a14"/><rect x="1055.2" y="429.0" width="4.2" height="4.2" fill="#f01e12"/><rect x="1050.0" y="434.2" width="4.2" height="4.2" fill="#f01a14"/><rect x="1055.2" y="434.2" width="4.2" height="4.2" fill="#ee2418"/><rect x="1070.0" y="429.0" width="4.2" height="4.2" fill="#ea4a1e"/><rect x="1075.2" y="429.0" width="4.2" height="4.2" fill="#f01a14"/><rect x="1080.0" y="429.0" width="4.2" height="4.2" fill="#ee2418"/><rect x="1080.0" y="434.2" width="4.2" height="4.2" fill="#ee2418"/><rect x="1015.2" y="439.0" width="4.2" height="4.2" fill="#f02a16"/><rect x="1015.2" y="444.2" width="4.2" height="4.2" fill="#ee2418"/><rect x="1015.2" y="449.4" width="4.2" height="4.2" fill="#e8602c"/><rect x="1020.0" y="439.0" width="4.2" height="4.2" fill="#f01a14"/><rect x="1025.2" y="439.0" width="4.2" height="4.2" fill="#f01e12"/><rect x="1020.0" y="444.2" width="4.2" height="4.2" fill="#e4582a"/><rect x="1025.2" y="444.2" width="4.2" height="4.2" fill="#e8602c"/><rect x="1030.0" y="439.0" width="4.2" height="4.2" fill="#ea4a1e"/><rect x="1035.2" y="439.0" width="4.2" height="4.2" fill="#f01a14"/><rect x="1030.0" y="444.2" width="4.2" height="4.2" fill="#f02a16"/><rect x="1035.2" y="444.2" width="4.2" height="4.2" fill="#e8602c"/><rect x="1040.0" y="439.0" width="4.2" height="4.2" fill="#e8602c"/><rect x="1045.2" y="439.0" width="4.2" height="4.2" fill="#e8602c"/><rect x="1040.0" y="444.2" width="4.2" height="4.2" fill="#ea4a1e"/><rect x="1045.2" y="444.2" width="4.2" height="4.2" fill="#f01a14"/><rect x="1050.0" y="439.0" width="4.2" height="4.2" fill="#f01e12"/><rect x="1055.2" y="439.0" width="4.2" height="4.2" fill="#e8602c"/><rect x="1050.0" y="444.2" width="4.2" height="4.2" fill="#ee2418"/><rect x="1055.2" y="444.2" width="4.2" height="4.2" fill="#e8602c"/><rect x="1060.0" y="439.0" width="4.2" height="4.2" fill="#e4582a"/><rect x="1065.2" y="439.0" width="4.2" height="4.2" fill="#f01e12"/><rect x="1060.0" y="444.2" width="4.2" height="4.2" fill="#f01a14"/><rect x="1065.2" y="444.2" width="4.2" height="4.2" fill="#ee2418"/><rect x="1070.0" y="439.0" width="4.2" height="4.2" fill="#f01e12"/><rect x="1070.0" y="444.2" width="4.2" height="4.2" fill="#ea4a1e"/><rect x="1015.2" y="449.0" width="4.2" height="4.2" fill="#ea4a1e"/><rect x="1015.2" y="454.2" width="4.2" height="4.2" fill="#e8602c"/><rect x="1020.0" y="449.0" width="4.2" height="4.2" fill="#f01a14"/><rect x="1025.2" y="449.0" width="4.2" height="4.2" fill="#ee2418"/><rect x="1020.0" y="454.2" width="4.2" height="4.2" fill="#f01e12"/><rect x="1025.2" y="454.2" width="4.2" height="4.2" fill="#e8602c"/><rect x="1030.0" y="449.0" width="4.2" height="4.2" fill="#f01a14"/><rect x="1035.2" y="449.0" width="4.2" height="4.2" fill="#e4582a"/><rect x="1040.0" y="449.0" width="4.2" height="4.2" fill="#e8602c"/><rect x="1045.2" y="449.0" width="4.2" height="4.2" fill="#e4582a"/><rect x="1050.0" y="449.0" width="4.2" height="4.2" fill="#ee2418"/><rect x="1050.0" y="454.2" width="4.2" height="4.2" fill="#f02a16"/><rect x="1050.0" y="459.4" width="4.2" height="4.2" fill="#e8602c"/><rect x="1055.2" y="449.0" width="4.2" height="4.2" fill="#f02a16"/><rect x="1055.2" y="454.2" width="4.2" height="4.2" fill="#e8602c"/><rect x="1055.2" y="459.4" width="4.2" height="4.2" fill="#f02a16"/><rect x="1060.0" y="449.0" width="4.2" height="4.2" fill="#f02a16"/><rect x="1060.0" y="454.2" width="4.2" height="4.2" fill="#f02a16"/><rect x="1060.0" y="459.4" width="4.2" height="4.2" fill="#f02a16"/><rect x="1065.2" y="449.0" width="4.2" height="4.2" fill="#e4582a"/><rect x="1065.2" y="454.2" width="4.2" height="4.2" fill="#e8602c"/><rect x="1070.0" y="449.0" width="4.2" height="4.2" fill="#f02a16"/><rect x="1020.0" y="459.0" width="4.2" height="4.2" fill="#e8602c"/><rect x="1025.2" y="459.0" width="4.2" height="4.2" fill="#f02a16"/><rect x="1020.0" y="464.2" width="4.2" height="4.2" fill="#f01a14"/><rect x="1025.2" y="464.2" width="4.2" height="4.2" fill="#f01a14"/><rect x="1030.0" y="459.0" width="4.2" height="4.2" fill="#e8602c"/><rect x="1030.0" y="464.2" width="4.2" height="4.2" fill="#ea4a1e"/><rect x="1035.2" y="459.0" width="4.2" height="4.2" fill="#e4582a"/><rect x="1035.2" y="464.2" width="4.2" height="4.2" fill="#f01e12"/><rect x="1040.0" y="459.0" width="4.2" height="4.2" fill="#ea4a1e"/><rect x="1045.2" y="459.0" width="4.2" height="4.2" fill="#ea4a1e"/><rect x="1040.0" y="464.2" width="4.2" height="4.2" fill="#e8602c"/><rect x="1045.2" y="464.2" width="4.2" height="4.2" fill="#ea4a1e"/><rect x="1050.0" y="459.0" width="4.2" height="4.2" fill="#f01e12"/><rect x="1050.0" y="464.2" width="4.2" height="4.2" fill="#f01e12"/><rect x="1055.2" y="459.0" width="4.2" height="4.2" fill="#ea4a1e"/><rect x="1055.2" y="464.2" width="4.2" height="4.2" fill="#f01e12"/><rect x="1060.4" y="459.0" width="4.2" height="4.2" fill="#f01a14"/><rect x="1060.4" y="464.2" width="4.2" height="4.2" fill="#ee2418"/><rect x="1060.0" y="459.0" width="4.2" height="4.2" fill="#e8602c"/><rect x="1060.0" y="464.2" width="4.2" height="4.2" fill="#f01e12"/></g>
<g><rect x="939.0" y="402.0" width="4.2" height="4.2" fill="#f01e12"/><rect x="944.2" y="402.0" width="4.2" height="4.2" fill="#f01a14"/><rect x="939.0" y="407.2" width="4.2" height="4.2" fill="#f02a16"/><rect x="944.2" y="407.2" width="4.2" height="4.2" fill="#e4582a"/><rect x="939.0" y="412.0" width="4.2" height="4.2" fill="#e4582a"/><rect x="944.2" y="412.0" width="4.2" height="4.2" fill="#f02a16"/><rect x="949.0" y="412.0" width="4.2" height="4.2" fill="#f02a16"/><rect x="954.2" y="412.0" width="4.2" height="4.2" fill="#f01a14"/><rect x="949.0" y="417.2" width="4.2" height="4.2" fill="#e8602c"/><rect x="954.2" y="417.2" width="4.2" height="4.2" fill="#ea4a1e"/><rect x="959.0" y="412.0" width="4.2" height="4.2" fill="#e8602c"/><rect x="959.0" y="417.2" width="4.2" height="4.2" fill="#ea4a1e"/><rect x="939.0" y="422.0" width="4.2" height="4.2" fill="#e4582a"/><rect x="944.2" y="422.0" width="4.2" height="4.2" fill="#e4582a"/><rect x="939.0" y="427.2" width="4.2" height="4.2" fill="#e8602c"/><rect x="944.2" y="427.2" width="4.2" height="4.2" fill="#ea4a1e"/><rect x="949.0" y="422.0" width="4.2" height="4.2" fill="#e8602c"/><rect x="949.0" y="427.2" width="4.2" height="4.2" fill="#f01a14"/><rect x="959.0" y="422.0" width="4.2" height="4.2" fill="#ea4a1e"/><rect x="959.0" y="427.2" width="4.2" height="4.2" fill="#ea4a1e"/><rect x="949.0" y="432.0" width="4.2" height="4.2" fill="#e8602c"/><rect x="954.2" y="432.0" width="4.2" height="4.2" fill="#e4582a"/><rect x="949.0" y="437.2" width="4.2" height="4.2" fill="#e8602c"/><rect x="954.2" y="437.2" width="4.2" height="4.2" fill="#ea4a1e"/><rect x="959.0" y="432.0" width="4.2" height="4.2" fill="#e8602c"/><rect x="959.0" y="437.2" width="4.2" height="4.2" fill="#ee2418"/><rect x="949.0" y="442.0" width="4.2" height="4.2" fill="#f01a14"/><rect x="949.0" y="447.2" width="4.2" height="4.2" fill="#f01a14"/><rect x="959.0" y="442.0" width="4.2" height="4.2" fill="#e4582a"/><rect x="959.0" y="447.2" width="4.2" height="4.2" fill="#f01a14"/><rect x="949.0" y="452.0" width="4.2" height="4.2" fill="#f02a16"/><rect x="954.2" y="452.0" width="4.2" height="4.2" fill="#f01e12"/><rect x="954.2" y="457.2" width="4.2" height="4.2" fill="#ea4a1e"/><rect x="959.0" y="452.0" width="4.2" height="4.2" fill="#f01e12"/><rect x="959.0" y="457.2" width="4.2" height="4.2" fill="#ee2418"/><rect x="959.0" y="462.0" width="4.2" height="4.2" fill="#f01e12"/></g>
<g><rect x="964.0" y="466.0" width="4.2" height="4.2" fill="#f01e12"/><rect x="964.0" y="471.2" width="4.2" height="4.2" fill="#ea4a1e"/><rect x="964.0" y="476.4" width="4.2" height="4.2" fill="#f01e12"/><rect x="969.2" y="466.0" width="4.2" height="4.2" fill="#e8602c"/><rect x="969.2" y="471.2" width="4.2" height="4.2" fill="#e8602c"/><rect x="969.2" y="476.4" width="4.2" height="4.2" fill="#f01e12"/><rect x="986.0" y="466.0" width="4.2" height="4.2" fill="#f01e12"/><rect x="991.2" y="466.0" width="4.2" height="4.2" fill="#f01a14"/><rect x="986.0" y="471.2" width="4.2" height="4.2" fill="#f01a14"/><rect x="991.2" y="471.2" width="4.2" height="4.2" fill="#f01a14"/><rect x="997.0" y="466.0" width="4.2" height="4.2" fill="#f01e12"/><rect x="1002.2" y="466.0" width="4.2" height="4.2" fill="#e4582a"/><rect x="997.0" y="471.2" width="4.2" height="4.2" fill="#ea4a1e"/><rect x="1002.2" y="471.2" width="4.2" height="4.2" fill="#f01a14"/><rect x="1008.0" y="466.0" width="4.2" height="4.2" fill="#f01e12"/><rect x="1008.0" y="471.2" width="4.2" height="4.2" fill="#ea4a1e"/><rect x="1008.0" y="476.4" width="4.2" height="4.2" fill="#ee2418"/><rect x="1013.2" y="466.0" width="4.2" height="4.2" fill="#e4582a"/><rect x="1013.2" y="471.2" width="4.2" height="4.2" fill="#e4582a"/><rect x="1013.2" y="476.4" width="4.2" height="4.2" fill="#e8602c"/><rect x="1019.0" y="466.0" width="4.2" height="4.2" fill="#f02a16"/><rect x="1019.0" y="471.2" width="4.2" height="4.2" fill="#ea4a1e"/><rect x="1019.0" y="476.4" width="4.2" height="4.2" fill="#f01e12"/><rect x="1024.2" y="466.0" width="4.2" height="4.2" fill="#e8602c"/><rect x="1024.2" y="471.2" width="4.2" height="4.2" fill="#e8602c"/><rect x="1024.2" y="476.4" width="4.2" height="4.2" fill="#f01e12"/><rect x="1030.0" y="466.0" width="4.2" height="4.2" fill="#f01a14"/><rect x="1030.0" y="471.2" width="4.2" height="4.2" fill="#f02a16"/><rect x="1035.2" y="466.0" width="4.2" height="4.2" fill="#f01e12"/><rect x="1035.2" y="471.2" width="4.2" height="4.2" fill="#ee2418"/><rect x="1040.4" y="466.0" width="4.2" height="4.2" fill="#f01e12"/><rect x="1040.4" y="471.2" width="4.2" height="4.2" fill="#e4582a"/><rect x="1041.0" y="466.0" width="4.2" height="4.2" fill="#e4582a"/><rect x="1046.2" y="466.0" width="4.2" height="4.2" fill="#e4582a"/><rect x="1052.0" y="466.0" width="4.2" height="4.2" fill="#e4582a"/><rect x="1052.0" y="471.2" width="4.2" height="4.2" fill="#e4582a"/><rect x="1052.0" y="476.4" width="4.2" height="4.2" fill="#ea4a1e"/><rect x="1057.2" y="466.0" width="4.2" height="4.2" fill="#f02a16"/><rect x="1057.2" y="471.2" width="4.2" height="4.2" fill="#f02a16"/><rect x="1057.2" y="476.4" width="4.2" height="4.2" fill="#f02a16"/><rect x="964.0" y="477.0" width="4.2" height="4.2" fill="#f01e12"/><rect x="969.2" y="477.0" width="4.2" height="4.2" fill="#e4582a"/><rect x="964.0" y="482.2" width="4.2" height="4.2" fill="#e4582a"/><rect x="969.2" y="482.2" width="4.2" height="4.2" fill="#ea4a1e"/><rect x="975.0" y="477.0" width="4.2" height="4.2" fill="#f01e12"/><rect x="975.0" y="482.2" width="4.2" height="4.2" fill="#f01a14"/><rect x="986.0" y="477.0" width="4.2" height="4.2" fill="#e4582a"/><rect x="986.0" y="482.2" width="4.2" height="4.2" fill="#f02a16"/><rect x="997.0" y="477.0" width="4.2" height="4.2" fill="#e8602c"/><rect x="997.0" y="482.2" width="4.2" height="4.2" fill="#e8602c"/><rect x="1002.2" y="477.0" width="4.2" height="4.2" fill="#f01e12"/><rect x="1002.2" y="482.2" width="4.2" height="4.2" fill="#e8602c"/><rect x="1007.4" y="477.0" width="4.2" height="4.2" fill="#ea4a1e"/><rect x="1007.4" y="482.2" width="4.2" height="4.2" fill="#e4582a"/><rect x="1008.0" y="477.0" width="4.2" height="4.2" fill="#e8602c"/><rect x="1008.0" y="482.2" width="4.2" height="4.2" fill="#f02a16"/><rect x="1013.2" y="477.0" width="4.2" height="4.2" fill="#f01e12"/><rect x="1013.2" y="482.2" width="4.2" height="4.2" fill="#f01a14"/><rect x="1018.4" y="477.0" width="4.2" height="4.2" fill="#f02a16"/><rect x="1018.4" y="482.2" width="4.2" height="4.2" fill="#f02a16"/><rect x="1019.0" y="477.0" width="4.2" height="4.2" fill="#ea4a1e"/><rect x="1019.0" y="482.2" width="4.2" height="4.2" fill="#e4582a"/><rect x="1024.2" y="477.0" width="4.2" height="4.2" fill="#e4582a"/><rect x="1024.2" y="482.2" width="4.2" height="4.2" fill="#e4582a"/><rect x="1029.4" y="477.0" width="4.2" height="4.2" fill="#f01a14"/><rect x="1029.4" y="482.2" width="4.2" height="4.2" fill="#f02a16"/><rect x="1030.0" y="477.0" width="4.2" height="4.2" fill="#e4582a"/><rect x="1030.0" y="482.2" width="4.2" height="4.2" fill="#ea4a1e"/><rect x="1035.2" y="477.0" width="4.2" height="4.2" fill="#ee2418"/><rect x="1035.2" y="482.2" width="4.2" height="4.2" fill="#f02a16"/><rect x="1040.4" y="477.0" width="4.2" height="4.2" fill="#e4582a"/><rect x="1040.4" y="482.2" width="4.2" height="4.2" fill="#e4582a"/><rect x="1041.0" y="477.0" width="4.2" height="4.2" fill="#e4582a"/><rect x="1046.2" y="477.0" width="4.2" height="4.2" fill="#e8602c"/><rect x="1041.0" y="482.2" width="4.2" height="4.2" fill="#f02a16"/><rect x="1046.2" y="482.2" width="4.2" height="4.2" fill="#ea4a1e"/><rect x="1052.0" y="477.0" width="4.2" height="4.2" fill="#e8602c"/><rect x="1052.0" y="482.2" width="4.2" height="4.2" fill="#e4582a"/><rect x="964.0" y="488.0" width="4.2" height="4.2" fill="#e4582a"/><rect x="964.0" y="493.2" width="4.2" height="4.2" fill="#f01e12"/><rect x="969.2" y="488.0" width="4.2" height="4.2" fill="#ee2418"/><rect x="969.2" y="493.2" width="4.2" height="4.2" fill="#f02a16"/><rect x="974.4" y="488.0" width="4.2" height="4.2" fill="#ea4a1e"/><rect x="974.4" y="493.2" width="4.2" height="4.2" fill="#f01a14"/><rect x="975.0" y="488.0" width="4.2" height="4.2" fill="#f01e12"/><rect x="980.2" y="488.0" width="4.2" height="4.2" fill="#ee2418"/><rect x="997.0" y="488.0" width="4.2" height="4.2" fill="#e4582a"/><rect x="1002.2" y="488.0" width="4.2" height="4.2" fill="#e8602c"/><rect x="997.0" y="493.2" width="4.2" height="4.2" fill="#e8602c"/><rect x="1002.2" y="493.2" width="4.2" height="4.2" fill="#ea4a1e"/><rect x="1008.0" y="488.0" width="4.2" height="4.2" fill="#f02a16"/><rect x="1008.0" y="493.2" width="4.2" height="4.2" fill="#e4582a"/><rect x="1013.2" y="488.0" width="4.2" height="4.2" fill="#f01a14"/><rect x="1013.2" y="493.2" width="4.2" height="4.2" fill="#ee2418"/><rect x="1018.4" y="488.0" width="4.2" height="4.2" fill="#e8602c"/><rect x="1018.4" y="493.2" width="4.2" height="4.2" fill="#ea4a1e"/><rect x="1019.0" y="488.0" width="4.2" height="4.2" fill="#e4582a"/><rect x="1019.0" y="493.2" width="4.2" height="4.2" fill="#ea4a1e"/><rect x="1019.0" y="498.4" width="4.2" height="4.2" fill="#f02a16"/><rect x="1024.2" y="488.0" width="4.2" height="4.2" fill="#e8602c"/><rect x="1024.2" y="493.2" width="4.2" height="4.2" fill="#ea4a1e"/><rect x="1024.2" y="498.4" width="4.2" height="4.2" fill="#ea4a1e"/><rect x="1030.0" y="488.0" width="4.2" height="4.2" fill="#ee2418"/><rect x="1030.0" y="493.2" width="4.2" height="4.2" fill="#f01a14"/><rect x="1035.2" y="488.0" width="4.2" height="4.2" fill="#ee2418"/><rect x="1035.2" y="493.2" width="4.2" height="4.2" fill="#e4582a"/><rect x="1040.4" y="488.0" width="4.2" height="4.2" fill="#f01e12"/><rect x="1040.4" y="493.2" width="4.2" height="4.2" fill="#f02a16"/><rect x="1041.0" y="488.0" width="4.2" height="4.2" fill="#f02a16"/><rect x="1041.0" y="493.2" width="4.2" height="4.2" fill="#e8602c"/><rect x="1052.0" y="488.0" width="4.2" height="4.2" fill="#ee2418"/><rect x="1052.0" y="493.2" width="4.2" height="4.2" fill="#ee2418"/><rect x="1057.2" y="488.0" width="4.2" height="4.2" fill="#f01a14"/><rect x="1057.2" y="493.2" width="4.2" height="4.2" fill="#e8602c"/><rect x="964.0" y="499.0" width="4.2" height="4.2" fill="#f02a16"/><rect x="969.2" y="499.0" width="4.2" height="4.2" fill="#f01e12"/><rect x="964.0" y="504.2" width="4.2" height="4.2" fill="#e8602c"/><rect x="969.2" y="504.2" width="4.2" height="4.2" fill="#e4582a"/><rect x="975.0" y="499.0" width="4.2" height="4.2" fill="#ea4a1e"/><rect x="975.0" y="504.2" width="4.2" height="4.2" fill="#f01a14"/><rect x="975.0" y="509.4" width="4.2" height="4.2" fill="#f02a16"/><rect x="980.2" y="499.0" width="4.2" height="4.2" fill="#f02a16"/><rect x="980.2" y="504.2" width="4.2" height="4.2" fill="#ea4a1e"/><rect x="980.2" y="509.4" width="4.2" height="4.2" fill="#ea4a1e"/><rect x="986.0" y="499.0" width="4.2" height="4.2" fill="#ee2418"/><rect x="991.2" y="499.0" width="4.2" height="4.2" fill="#e4582a"/><rect x="986.0" y="504.2" width="4.2" height="4.2" fill="#e4582a"/><rect x="991.2" y="504.2" width="4.2" height="4.2" fill="#ea4a1e"/><rect x="997.0" y="499.0" width="4.2" height="4.2" fill="#ee2418"/><rect x="997.0" y="504.2" width="4.2" height="4.2" fill="#f02a16"/><rect x="1019.0" y="499.0" width="4.2" height="4.2" fill="#e8602c"/><rect x="1024.2" y="499.0" width="4.2" height="4.2" fill="#e4582a"/><rect x="1019.0" y="504.2" width="4.2" height="4.2" fill="#ea4a1e"/><rect x="1024.2" y="504.2" width="4.2" height="4.2" fill="#e4582a"/><rect x="1030.0" y="499.0" width="4.2" height="4.2" fill="#f02a16"/><rect x="1030.0" y="504.2" width="4.2" height="4.2" fill="#e4582a"/><rect x="1035.2" y="499.0" width="4.2" height="4.2" fill="#f01a14"/><rect x="1035.2" y="504.2" width="4.2" height="4.2" fill="#f02a16"/><rect x="1040.4" y="499.0" width="4.2" height="4.2" fill="#ee2418"/><rect x="1040.4" y="504.2" width="4.2" height="4.2" fill="#ee2418"/><rect x="1041.0" y="499.0" width="4.2" height="4.2" fill="#f01a14"/><rect x="1046.2" y="499.0" width="4.2" height="4.2" fill="#f01a14"/><rect x="1041.0" y="504.2" width="4.2" height="4.2" fill="#ea4a1e"/><rect x="1046.2" y="504.2" width="4.2" height="4.2" fill="#f02a16"/><rect x="1052.0" y="499.0" width="4.2" height="4.2" fill="#e8602c"/><rect x="1057.2" y="499.0" width="4.2" height="4.2" fill="#e4582a"/><rect x="975.0" y="510.0" width="4.2" height="4.2" fill="#f01e12"/><rect x="975.0" y="515.2" width="4.2" height="4.2" fill="#e8602c"/><rect x="997.0" y="510.0" width="4.2" height="4.2" fill="#f02a16"/><rect x="1002.2" y="510.0" width="4.2" height="4.2" fill="#f02a16"/><rect x="997.0" y="515.2" width="4.2" height="4.2" fill="#ea4a1e"/><rect x="1002.2" y="515.2" width="4.2" height="4.2" fill="#ee2418"/><rect x="1008.0" y="510.0" width="4.2" height="4.2" fill="#ea4a1e"/><rect x="1013.2" y="510.0" width="4.2" height="4.2" fill="#e8602c"/><rect x="1008.0" y="515.2" width="4.2" height="4.2" fill="#ee2418"/><rect x="1013.2" y="515.2" width="4.2" height="4.2" fill="#e8602c"/><rect x="1019.0" y="510.0" width="4.2" height="4.2" fill="#ee2418"/><rect x="1019.0" y="515.2" width="4.2" height="4.2" fill="#f01e12"/><rect x="1019.0" y="520.4" width="4.2" height="4.2" fill="#ee2418"/><rect x="1024.2" y="510.0" width="4.2" height="4.2" fill="#ee2418"/><rect x="1024.2" y="515.2" width="4.2" height="4.2" fill="#f01a14"/><rect x="1024.2" y="520.4" width="4.2" height="4.2" fill="#f02a16"/><rect x="1041.0" y="510.0" width="4.2" height="4.2" fill="#f01a14"/><rect x="1041.0" y="515.2" width="4.2" height="4.2" fill="#e4582a"/><rect x="964.0" y="521.0" width="4.2" height="4.2" fill="#f01e12"/><rect x="964.0" y="526.2" width="4.2" height="4.2" fill="#f01e12"/><rect x="975.0" y="521.0" width="4.2" height="4.2" fill="#f01a14"/><rect x="980.2" y="521.0" width="4.2" height="4.2" fill="#f01a14"/><rect x="986.0" y="521.0" width="4.2" height="4.2" fill="#f01a14"/><rect x="986.0" y="526.2" width="4.2" height="4.2" fill="#ee2418"/><rect x="991.2" y="521.0" width="4.2" height="4.2" fill="#f01e12"/><rect x="991.2" y="526.2" width="4.2" height="4.2" fill="#f01e12"/><rect x="996.4" y="521.0" width="4.2" height="4.2" fill="#f02a16"/><rect x="996.4" y="526.2" width="4.2" height="4.2" fill="#ea4a1e"/><rect x="997.0" y="521.0" width="4.2" height="4.2" fill="#f01e12"/><rect x="997.0" y="526.2" width="4.2" height="4.2" fill="#f01a14"/><rect x="1002.2" y="521.0" width="4.2" height="4.2" fill="#e8602c"/><rect x="1002.2" y="526.2" width="4.2" height="4.2" fill="#f02a16"/><rect x="1007.4" y="521.0" width="4.2" height="4.2" fill="#f02a16"/><rect x="1007.4" y="526.2" width="4.2" height="4.2" fill="#f02a16"/><rect x="1008.0" y="521.0" width="4.2" height="4.2" fill="#e8602c"/><rect x="1008.0" y="526.2" width="4.2" height="4.2" fill="#e8602c"/><rect x="1008.0" y="531.4" width="4.2" height="4.2" fill="#ee2418"/><rect x="1013.2" y="521.0" width="4.2" height="4.2" fill="#e8602c"/><rect x="1013.2" y="526.2" width="4.2" height="4.2" fill="#ee2418"/><rect x="1013.2" y="531.4" width="4.2" height="4.2" fill="#e4582a"/><rect x="1019.0" y="521.0" width="4.2" height="4.2" fill="#f01a14"/><rect x="1024.2" y="521.0" width="4.2" height="4.2" fill="#e8602c"/><rect x="1019.0" y="526.2" width="4.2" height="4.2" fill="#f01e12"/><rect x="1024.2" y="526.2" width="4.2" height="4.2" fill="#ee2418"/><rect x="1030.0" y="521.0" width="4.2" height="4.2" fill="#e4582a"/><rect x="1030.0" y="526.2" width="4.2" height="4.2" fill="#ee2418"/><rect x="1035.2" y="521.0" width="4.2" height="4.2" fill="#f01a14"/><rect x="1035.2" y="526.2" width="4.2" height="4.2" fill="#ea4a1e"/><rect x="1040.4" y="521.0" width="4.2" height="4.2" fill="#e4582a"/><rect x="1040.4" y="526.2" width="4.2" height="4.2" fill="#f02a16"/><rect x="1041.0" y="521.0" width="4.2" height="4.2" fill="#e4582a"/><rect x="1041.0" y="526.2" width="4.2" height="4.2" fill="#e8602c"/><rect x="1046.2" y="521.0" width="4.2" height="4.2" fill="#f01a14"/><rect x="1046.2" y="526.2" width="4.2" height="4.2" fill="#e8602c"/><rect x="1051.4" y="521.0" width="4.2" height="4.2" fill="#e4582a"/><rect x="1051.4" y="526.2" width="4.2" height="4.2" fill="#f01a14"/><rect x="1052.0" y="521.0" width="4.2" height="4.2" fill="#f02a16"/><rect x="1057.2" y="521.0" width="4.2" height="4.2" fill="#f02a16"/><rect x="964.0" y="532.0" width="4.2" height="4.2" fill="#f01a14"/><rect x="969.2" y="532.0" width="4.2" height="4.2" fill="#f01e12"/><rect x="975.0" y="532.0" width="4.2" height="4.2" fill="#ee2418"/><rect x="975.0" y="537.2" width="4.2" height="4.2" fill="#f01e12"/><rect x="980.2" y="532.0" width="4.2" height="4.2" fill="#f01a14"/><rect x="980.2" y="537.2" width="4.2" height="4.2" fill="#ee2418"/><rect x="986.0" y="532.0" width="4.2" height="4.2" fill="#ee2418"/><rect x="986.0" y="537.2" width="4.2" height="4.2" fill="#e8602c"/><rect x="997.0" y="532.0" width="4.2" height="4.2" fill="#e8602c"/><rect x="997.0" y="537.2" width="4.2" height="4.2" fill="#e8602c"/><rect x="1002.2" y="532.0" width="4.2" height="4.2" fill="#ee2418"/><rect x="1002.2" y="537.2" width="4.2" height="4.2" fill="#ee2418"/><rect x="1008.0" y="532.0" width="4.2" height="4.2" fill="#e4582a"/><rect x="1008.0" y="537.2" width="4.2" height="4.2" fill="#f02a16"/><rect x="1019.0" y="532.0" width="4.2" height="4.2" fill="#f02a16"/><rect x="1019.0" y="537.2" width="4.2" height="4.2" fill="#e8602c"/><rect x="1024.2" y="532.0" width="4.2" height="4.2" fill="#f01a14"/><rect x="1024.2" y="537.2" width="4.2" height="4.2" fill="#f02a16"/><rect x="1029.4" y="532.0" width="4.2" height="4.2" fill="#e8602c"/><rect x="1029.4" y="537.2" width="4.2" height="4.2" fill="#e8602c"/><rect x="1030.0" y="532.0" width="4.2" height="4.2" fill="#f01a14"/><rect x="1030.0" y="537.2" width="4.2" height="4.2" fill="#f01e12"/><rect x="1041.0" y="532.0" width="4.2" height="4.2" fill="#ee2418"/><rect x="1046.2" y="532.0" width="4.2" height="4.2" fill="#ea4a1e"/><rect x="1041.0" y="537.2" width="4.2" height="4.2" fill="#e8602c"/><rect x="1046.2" y="537.2" width="4.2" height="4.2" fill="#e4582a"/><rect x="1052.0" y="532.0" width="4.2" height="4.2" fill="#e4582a"/><rect x="1052.0" y="537.2" width="4.2" height="4.2" fill="#ee2418"/><rect x="1057.2" y="532.0" width="4.2" height="4.2" fill="#f02a16"/><rect x="1057.2" y="537.2" width="4.2" height="4.2" fill="#e8602c"/></g>
<g><rect x="994.0" y="545.0" width="4.2" height="4.2" fill="#e8602c"/><rect x="974.0" y="555.0" width="4.2" height="4.2" fill="#f02a16"/><rect x="979.2" y="555.0" width="4.2" height="4.2" fill="#ee2418"/><rect x="974.0" y="560.2" width="4.2" height="4.2" fill="#f01e12"/><rect x="979.2" y="560.2" width="4.2" height="4.2" fill="#f01a14"/><rect x="984.0" y="555.0" width="4.2" height="4.2" fill="#f02a16"/><rect x="989.2" y="555.0" width="4.2" height="4.2" fill="#ea4a1e"/><rect x="984.0" y="560.2" width="4.2" height="4.2" fill="#ee2418"/><rect x="989.2" y="560.2" width="4.2" height="4.2" fill="#e8602c"/><rect x="994.0" y="555.0" width="4.2" height="4.2" fill="#f02a16"/><rect x="994.0" y="560.2" width="4.2" height="4.2" fill="#ee2418"/><rect x="964.0" y="565.0" width="4.2" height="4.2" fill="#e8602c"/><rect x="969.2" y="565.0" width="4.2" height="4.2" fill="#ee2418"/><rect x="964.0" y="570.2" width="4.2" height="4.2" fill="#f02a16"/><rect x="969.2" y="570.2" width="4.2" height="4.2" fill="#ea4a1e"/><rect x="974.0" y="565.0" width="4.2" height="4.2" fill="#ea4a1e"/><rect x="979.2" y="565.0" width="4.2" height="4.2" fill="#e4582a"/><rect x="974.0" y="570.2" width="4.2" height="4.2" fill="#ee2418"/><rect x="979.2" y="570.2" width="4.2" height="4.2" fill="#f01e12"/><rect x="984.0" y="565.0" width="4.2" height="4.2" fill="#f01a14"/><rect x="989.2" y="565.0" width="4.2" height="4.2" fill="#e4582a"/><rect x="984.0" y="570.2" width="4.2" height="4.2" fill="#f01a14"/><rect x="989.2" y="570.2" width="4.2" height="4.2" fill="#ea4a1e"/><rect x="994.0" y="565.0" width="4.2" height="4.2" fill="#ee2418"/><rect x="964.0" y="575.0" width="4.2" height="4.2" fill="#f01e12"/><rect x="969.2" y="575.0" width="4.2" height="4.2" fill="#f01e12"/><rect x="964.0" y="580.2" width="4.2" height="4.2" fill="#f01e12"/><rect x="969.2" y="580.2" width="4.2" height="4.2" fill="#e4582a"/><rect x="974.0" y="575.0" width="4.2" height="4.2" fill="#ee2418"/><rect x="979.2" y="575.0" width="4.2" height="4.2" fill="#f01a14"/><rect x="984.0" y="575.0" width="4.2" height="4.2" fill="#ea4a1e"/><rect x="989.2" y="575.0" width="4.2" height="4.2" fill="#e8602c"/><rect x="984.0" y="580.2" width="4.2" height="4.2" fill="#e4582a"/><rect x="989.2" y="580.2" width="4.2" height="4.2" fill="#f01e12"/><rect x="964.0" y="585.0" width="4.2" height="4.2" fill="#f02a16"/><rect x="969.2" y="585.0" width="4.2" height="4.2" fill="#f02a16"/><rect x="994.0" y="585.0" width="4.2" height="4.2" fill="#e8602c"/></g>
<g><rect x="1056.0" y="540.0" width="4.2" height="4.2" fill="#f02a16"/><rect x="1061.2" y="540.0" width="4.2" height="4.2" fill="#ee2418"/><rect x="1056.0" y="545.2" width="4.2" height="4.2" fill="#ee2418"/><rect x="1061.2" y="545.2" width="4.2" height="4.2" fill="#ea4a1e"/><rect x="1056.0" y="550.0" width="4.2" height="4.2" fill="#f01e12"/><rect x="1061.2" y="550.0" width="4.2" height="4.2" fill="#f02a16"/><rect x="1056.0" y="555.2" width="4.2" height="4.2" fill="#ea4a1e"/><rect x="1061.2" y="555.2" width="4.2" height="4.2" fill="#ea4a1e"/><rect x="1056.0" y="560.0" width="4.2" height="4.2" fill="#ea4a1e"/><rect x="1056.0" y="565.2" width="4.2" height="4.2" fill="#f01a14"/><rect x="1046.0" y="570.0" width="4.2" height="4.2" fill="#ee2418"/><rect x="1051.2" y="570.0" width="4.2" height="4.2" fill="#e4582a"/><rect x="1046.0" y="575.2" width="4.2" height="4.2" fill="#e4582a"/><rect x="1051.2" y="575.2" width="4.2" height="4.2" fill="#e4582a"/></g>
<g><rect x="1096.7" y="458.0" width="4.2" height="4.2" fill="#f01e12"/><rect x="1091.5" y="463.2" width="4.2" height="4.2" fill="#e8602c"/><rect x="1096.7" y="463.2" width="4.2" height="4.2" fill="#e8602c"/><rect x="1101.0" y="458.0" width="4.2" height="4.2" fill="#e4582a"/><rect x="1106.2" y="458.0" width="4.2" height="4.2" fill="#ea4a1e"/><rect x="1101.0" y="463.2" width="4.2" height="4.2" fill="#ee2418"/><rect x="1106.2" y="463.2" width="4.2" height="4.2" fill="#f01a14"/><rect x="1110.5" y="458.0" width="4.2" height="4.2" fill="#ee2418"/><rect x="1115.7" y="458.0" width="4.2" height="4.2" fill="#ea4a1e"/><rect x="1110.5" y="463.2" width="4.2" height="4.2" fill="#ee2418"/><rect x="1115.7" y="463.2" width="4.2" height="4.2" fill="#ee2418"/><rect x="1120.0" y="458.0" width="4.2" height="4.2" fill="#ea4a1e"/><rect x="1125.2" y="458.0" width="4.2" height="4.2" fill="#e4582a"/><rect x="1139.0" y="458.0" width="4.2" height="4.2" fill="#f01e12"/><rect x="1139.0" y="463.2" width="4.2" height="4.2" fill="#ee2418"/><rect x="1087.2" y="467.5" width="4.2" height="4.2" fill="#f01e12"/><rect x="1087.2" y="472.7" width="4.2" height="4.2" fill="#ea4a1e"/><rect x="1091.5" y="467.5" width="4.2" height="4.2" fill="#f01e12"/><rect x="1096.7" y="467.5" width="4.2" height="4.2" fill="#e8602c"/><rect x="1091.5" y="472.7" width="4.2" height="4.2" fill="#f01a14"/><rect x="1096.7" y="472.7" width="4.2" height="4.2" fill="#f02a16"/><rect x="1110.5" y="467.5" width="4.2" height="4.2" fill="#f02a16"/><rect x="1115.7" y="467.5" width="4.2" height="4.2" fill="#f01a14"/><rect x="1110.5" y="472.7" width="4.2" height="4.2" fill="#e8602c"/><rect x="1115.7" y="472.7" width="4.2" height="4.2" fill="#e8602c"/><rect x="1120.0" y="467.5" width="4.2" height="4.2" fill="#f01a14"/><rect x="1125.2" y="467.5" width="4.2" height="4.2" fill="#f01a14"/><rect x="1129.5" y="467.5" width="4.2" height="4.2" fill="#ea4a1e"/><rect x="1134.7" y="467.5" width="4.2" height="4.2" fill="#ea4a1e"/><rect x="1129.5" y="472.7" width="4.2" height="4.2" fill="#ee2418"/><rect x="1134.7" y="472.7" width="4.2" height="4.2" fill="#e4582a"/><rect x="1139.0" y="467.5" width="4.2" height="4.2" fill="#ea4a1e"/><rect x="1139.0" y="472.7" width="4.2" height="4.2" fill="#e8602c"/><rect x="1082.0" y="477.0" width="4.2" height="4.2" fill="#e4582a"/><rect x="1087.2" y="477.0" width="4.2" height="4.2" fill="#f01a14"/><rect x="1082.0" y="482.2" width="4.2" height="4.2" fill="#f01e12"/><rect x="1087.2" y="482.2" width="4.2" height="4.2" fill="#e8602c"/><rect x="1091.5" y="477.0" width="4.2" height="4.2" fill="#e4582a"/><rect x="1096.7" y="477.0" width="4.2" height="4.2" fill="#ea4a1e"/><rect x="1091.5" y="482.2" width="4.2" height="4.2" fill="#ea4a1e"/><rect x="1096.7" y="482.2" width="4.2" height="4.2" fill="#f01a14"/><rect x="1101.0" y="477.0" width="4.2" height="4.2" fill="#e4582a"/><rect x="1106.2" y="477.0" width="4.2" height="4.2" fill="#f02a16"/><rect x="1101.0" y="482.2" width="4.2" height="4.2" fill="#f02a16"/><rect x="1106.2" y="482.2" width="4.2" height="4.2" fill="#e8602c"/><rect x="1110.5" y="477.0" width="4.2" height="4.2" fill="#f01e12"/><rect x="1115.7" y="477.0" width="4.2" height="4.2" fill="#e8602c"/><rect x="1120.0" y="477.0" width="4.2" height="4.2" fill="#e4582a"/><rect x="1125.2" y="477.0" width="4.2" height="4.2" fill="#f02a16"/><rect x="1120.0" y="482.2" width="4.2" height="4.2" fill="#e4582a"/><rect x="1125.2" y="482.2" width="4.2" height="4.2" fill="#e8602c"/><rect x="1129.5" y="477.0" width="4.2" height="4.2" fill="#f02a16"/><rect x="1134.7" y="477.0" width="4.2" height="4.2" fill="#ea4a1e"/><rect x="1129.5" y="482.2" width="4.2" height="4.2" fill="#ee2418"/><rect x="1134.7" y="482.2" width="4.2" height="4.2" fill="#f01e12"/></g>
<g><rect x="1081.0" y="486.0" width="4.2" height="4.2" fill="#f01e12"/><rect x="1086.2" y="486.0" width="4.2" height="4.2" fill="#f01e12"/><rect x="1081.0" y="491.2" width="4.2" height="4.2" fill="#f01a14"/><rect x="1086.2" y="491.2" width="4.2" height="4.2" fill="#f02a16"/><rect x="1090.5" y="486.0" width="4.2" height="4.2" fill="#f01a14"/><rect x="1090.5" y="491.2" width="4.2" height="4.2" fill="#f02a16"/><rect x="1081.0" y="495.5" width="4.2" height="4.2" fill="#ee2418"/><rect x="1086.2" y="495.5" width="4.2" height="4.2" fill="#ee2418"/><rect x="1081.0" y="500.7" width="4.2" height="4.2" fill="#e8602c"/><rect x="1086.2" y="500.7" width="4.2" height="4.2" fill="#e8602c"/><rect x="1090.5" y="495.5" width="4.2" height="4.2" fill="#f01e12"/><rect x="1090.5" y="500.7" width="4.2" height="4.2" fill="#f01a14"/><rect x="1081.0" y="505.0" width="4.2" height="4.2" fill="#f01a14"/><rect x="1086.2" y="505.0" width="4.2" height="4.2" fill="#e4582a"/><rect x="1081.0" y="510.2" width="4.2" height="4.2" fill="#f01e12"/><rect x="1086.2" y="510.2" width="4.2" height="4.2" fill="#ea4a1e"/><rect x="1090.5" y="505.0" width="4.2" height="4.2" fill="#f01e12"/><rect x="1090.5" y="510.2" width="4.2" height="4.2" fill="#ea4a1e"/><rect x="1090.5" y="515.4" width="4.2" height="4.2" fill="#e4582a"/><rect x="1081.0" y="514.5" width="4.2" height="4.2" fill="#f02a16"/><rect x="1086.2" y="514.5" width="4.2" height="4.2" fill="#f01a14"/><rect x="1081.0" y="519.7" width="4.2" height="4.2" fill="#ea4a1e"/><rect x="1086.2" y="519.7" width="4.2" height="4.2" fill="#f01a14"/><rect x="1090.5" y="514.5" width="4.2" height="4.2" fill="#f02a16"/><rect x="1090.5" y="519.7" width="4.2" height="4.2" fill="#f01a14"/><rect x="1081.0" y="524.0" width="4.2" height="4.2" fill="#f01a14"/><rect x="1086.2" y="524.0" width="4.2" height="4.2" fill="#f01a14"/><rect x="1081.0" y="529.2" width="4.2" height="4.2" fill="#ea4a1e"/><rect x="1086.2" y="529.2" width="4.2" height="4.2" fill="#ea4a1e"/><rect x="1090.5" y="524.0" width="4.2" height="4.2" fill="#e8602c"/><rect x="1090.5" y="529.2" width="4.2" height="4.2" fill="#ea4a1e"/><rect x="1081.0" y="533.5" width="4.2" height="4.2" fill="#e8602c"/><rect x="1086.2" y="533.5" width="4.2" height="4.2" fill="#f01a14"/><rect x="1081.0" y="538.7" width="4.2" height="4.2" fill="#ea4a1e"/><rect x="1086.2" y="538.7" width="4.2" height="4.2" fill="#ee2418"/><rect x="1090.5" y="533.5" width="4.2" height="4.2" fill="#ea4a1e"/><rect x="1090.5" y="538.7" width="4.2" height="4.2" fill="#f02a16"/><rect x="1081.0" y="543.0" width="4.2" height="4.2" fill="#f01e12"/><rect x="1086.2" y="543.0" width="4.2" height="4.2" fill="#ea4a1e"/><rect x="1081.0" y="548.2" width="4.2" height="4.2" fill="#f02a16"/><rect x="1086.2" y="548.2" width="4.2" height="4.2" fill="#e4582a"/><rect x="1090.5" y="543.0" width="4.2" height="4.2" fill="#f01e12"/><rect x="1090.5" y="548.2" width="4.2" height="4.2" fill="#e8602c"/><rect x="1081.0" y="552.5" width="4.2" height="4.2" fill="#e8602c"/><rect x="1081.0" y="557.7" width="4.2" height="4.2" fill="#ea4a1e"/><rect x="1081.0" y="562.9" width="4.2" height="4.2" fill="#f02a16"/><rect x="1086.2" y="552.5" width="4.2" height="4.2" fill="#ea4a1e"/><rect x="1086.2" y="557.7" width="4.2" height="4.2" fill="#e8602c"/><rect x="1086.2" y="562.9" width="4.2" height="4.2" fill="#e8602c"/><rect x="1090.5" y="552.5" width="4.2" height="4.2" fill="#ee2418"/><rect x="1090.5" y="557.7" width="4.2" height="4.2" fill="#f02a16"/><rect x="1081.0" y="562.0" width="4.2" height="4.2" fill="#ea4a1e"/><rect x="1086.2" y="562.0" width="4.2" height="4.2" fill="#e8602c"/><rect x="1090.5" y="562.0" width="4.2" height="4.2" fill="#ee2418"/></g>
<g><rect x="1131.0" y="486.0" width="4.2" height="4.2" fill="#f02a16"/><rect x="1136.2" y="486.0" width="4.2" height="4.2" fill="#ea4a1e"/><rect x="1131.0" y="491.2" width="4.2" height="4.2" fill="#f02a16"/><rect x="1136.2" y="491.2" width="4.2" height="4.2" fill="#e8602c"/><rect x="1140.5" y="486.0" width="4.2" height="4.2" fill="#f02a16"/><rect x="1140.5" y="491.2" width="4.2" height="4.2" fill="#f01a14"/><rect x="1131.0" y="495.5" width="4.2" height="4.2" fill="#ea4a1e"/><rect x="1136.2" y="495.5" width="4.2" height="4.2" fill="#f01a14"/><rect x="1131.0" y="500.7" width="4.2" height="4.2" fill="#ea4a1e"/><rect x="1136.2" y="500.7" width="4.2" height="4.2" fill="#e4582a"/><rect x="1140.5" y="495.5" width="4.2" height="4.2" fill="#ea4a1e"/><rect x="1140.5" y="500.7" width="4.2" height="4.2" fill="#e8602c"/><rect x="1131.0" y="505.0" width="4.2" height="4.2" fill="#f01e12"/><rect x="1131.0" y="510.2" width="4.2" height="4.2" fill="#e4582a"/><rect x="1131.0" y="515.4" width="4.2" height="4.2" fill="#f01a14"/><rect x="1136.2" y="505.0" width="4.2" height="4.2" fill="#ea4a1e"/><rect x="1136.2" y="510.2" width="4.2" height="4.2" fill="#ee2418"/><rect x="1136.2" y="515.4" width="4.2" height="4.2" fill="#f01e12"/><rect x="1140.5" y="505.0" width="4.2" height="4.2" fill="#e8602c"/><rect x="1140.5" y="510.2" width="4.2" height="4.2" fill="#f02a16"/><rect x="1131.0" y="514.5" width="4.2" height="4.2" fill="#f01e12"/><rect x="1136.2" y="514.5" width="4.2" height="4.2" fill="#ee2418"/><rect x="1131.0" y="519.7" width="4.2" height="4.2" fill="#ea4a1e"/><rect x="1136.2" y="519.7" width="4.2" height="4.2" fill="#ea4a1e"/><rect x="1140.5" y="514.5" width="4.2" height="4.2" fill="#f01e12"/><rect x="1140.5" y="519.7" width="4.2" height="4.2" fill="#e4582a"/><rect x="1131.0" y="524.0" width="4.2" height="4.2" fill="#f02a16"/><rect x="1136.2" y="524.0" width="4.2" height="4.2" fill="#e4582a"/><rect x="1131.0" y="529.2" width="4.2" height="4.2" fill="#f01e12"/><rect x="1136.2" y="529.2" width="4.2" height="4.2" fill="#f01e12"/><rect x="1140.5" y="524.0" width="4.2" height="4.2" fill="#e8602c"/><rect x="1140.5" y="529.2" width="4.2" height="4.2" fill="#e4582a"/><rect x="1131.0" y="533.5" width="4.2" height="4.2" fill="#e4582a"/><rect x="1136.2" y="533.5" width="4.2" height="4.2" fill="#ea4a1e"/><rect x="1131.0" y="538.7" width="4.2" height="4.2" fill="#ea4a1e"/><rect x="1136.2" y="538.7" width="4.2" height="4.2" fill="#f01a14"/><rect x="1140.5" y="533.5" width="4.2" height="4.2" fill="#e8602c"/><rect x="1140.5" y="538.7" width="4.2" height="4.2" fill="#e4582a"/><rect x="1131.0" y="543.0" width="4.2" height="4.2" fill="#e8602c"/><rect x="1136.2" y="543.0" width="4.2" height="4.2" fill="#e4582a"/><rect x="1131.0" y="548.2" width="4.2" height="4.2" fill="#e8602c"/><rect x="1136.2" y="548.2" width="4.2" height="4.2" fill="#f01e12"/><rect x="1140.5" y="543.0" width="4.2" height="4.2" fill="#f02a16"/><rect x="1140.5" y="548.2" width="4.2" height="4.2" fill="#f02a16"/><rect x="1140.5" y="553.4" width="4.2" height="4.2" fill="#e8602c"/><rect x="1131.0" y="552.5" width="4.2" height="4.2" fill="#f01e12"/><rect x="1136.2" y="552.5" width="4.2" height="4.2" fill="#f02a16"/><rect x="1131.0" y="557.7" width="4.2" height="4.2" fill="#f01a14"/><rect x="1136.2" y="557.7" width="4.2" height="4.2" fill="#e4582a"/><rect x="1140.5" y="552.5" width="4.2" height="4.2" fill="#e8602c"/><rect x="1131.0" y="562.0" width="4.2" height="4.2" fill="#ea4a1e"/></g>
<g><rect x="1097.0" y="545.0" width="4.2" height="4.2" fill="#ea4a1e"/><rect x="1097.0" y="550.2" width="4.2" height="4.2" fill="#ee2418"/><rect x="1106.5" y="545.0" width="4.2" height="4.2" fill="#f02a16"/><rect x="1111.7" y="545.0" width="4.2" height="4.2" fill="#e4582a"/><rect x="1116.0" y="545.0" width="4.2" height="4.2" fill="#f02a16"/><rect x="1121.2" y="545.0" width="4.2" height="4.2" fill="#ee2418"/><rect x="1116.0" y="550.2" width="4.2" height="4.2" fill="#e8602c"/><rect x="1121.2" y="550.2" width="4.2" height="4.2" fill="#f01a14"/><rect x="1125.5" y="545.0" width="4.2" height="4.2" fill="#ea4a1e"/><rect x="1106.5" y="554.5" width="4.2" height="4.2" fill="#e4582a"/><rect x="1111.7" y="554.5" width="4.2" height="4.2" fill="#f02a16"/><rect x="1106.5" y="559.7" width="4.2" height="4.2" fill="#ea4a1e"/><rect x="1111.7" y="559.7" width="4.2" height="4.2" fill="#ea4a1e"/><rect x="1125.5" y="554.5" width="4.2" height="4.2" fill="#f01e12"/><rect x="1125.5" y="559.7" width="4.2" height="4.2" fill="#f01e12"/><rect x="1097.0" y="564.0" width="4.2" height="4.2" fill="#f02a16"/><rect x="1106.5" y="564.0" width="4.2" height="4.2" fill="#f02a16"/><rect x="1111.7" y="564.0" width="4.2" height="4.2" fill="#e8602c"/><rect x="1125.5" y="564.0" width="4.2" height="4.2" fill="#ee2418"/></g></svg>
<div class="a" style="left:0;top:833px;width:1520px;height:3px;background:linear-gradient(#fbfbfd,#e6f2fa)"></div>
<div class="a" id="status"><span class="a" style="left:0;top:6px">Version:1.0.0.52</span><span class="a" style="left:1309px;top:6px">Current [XT177x_Component_Location]</span></div>
</body></html>
